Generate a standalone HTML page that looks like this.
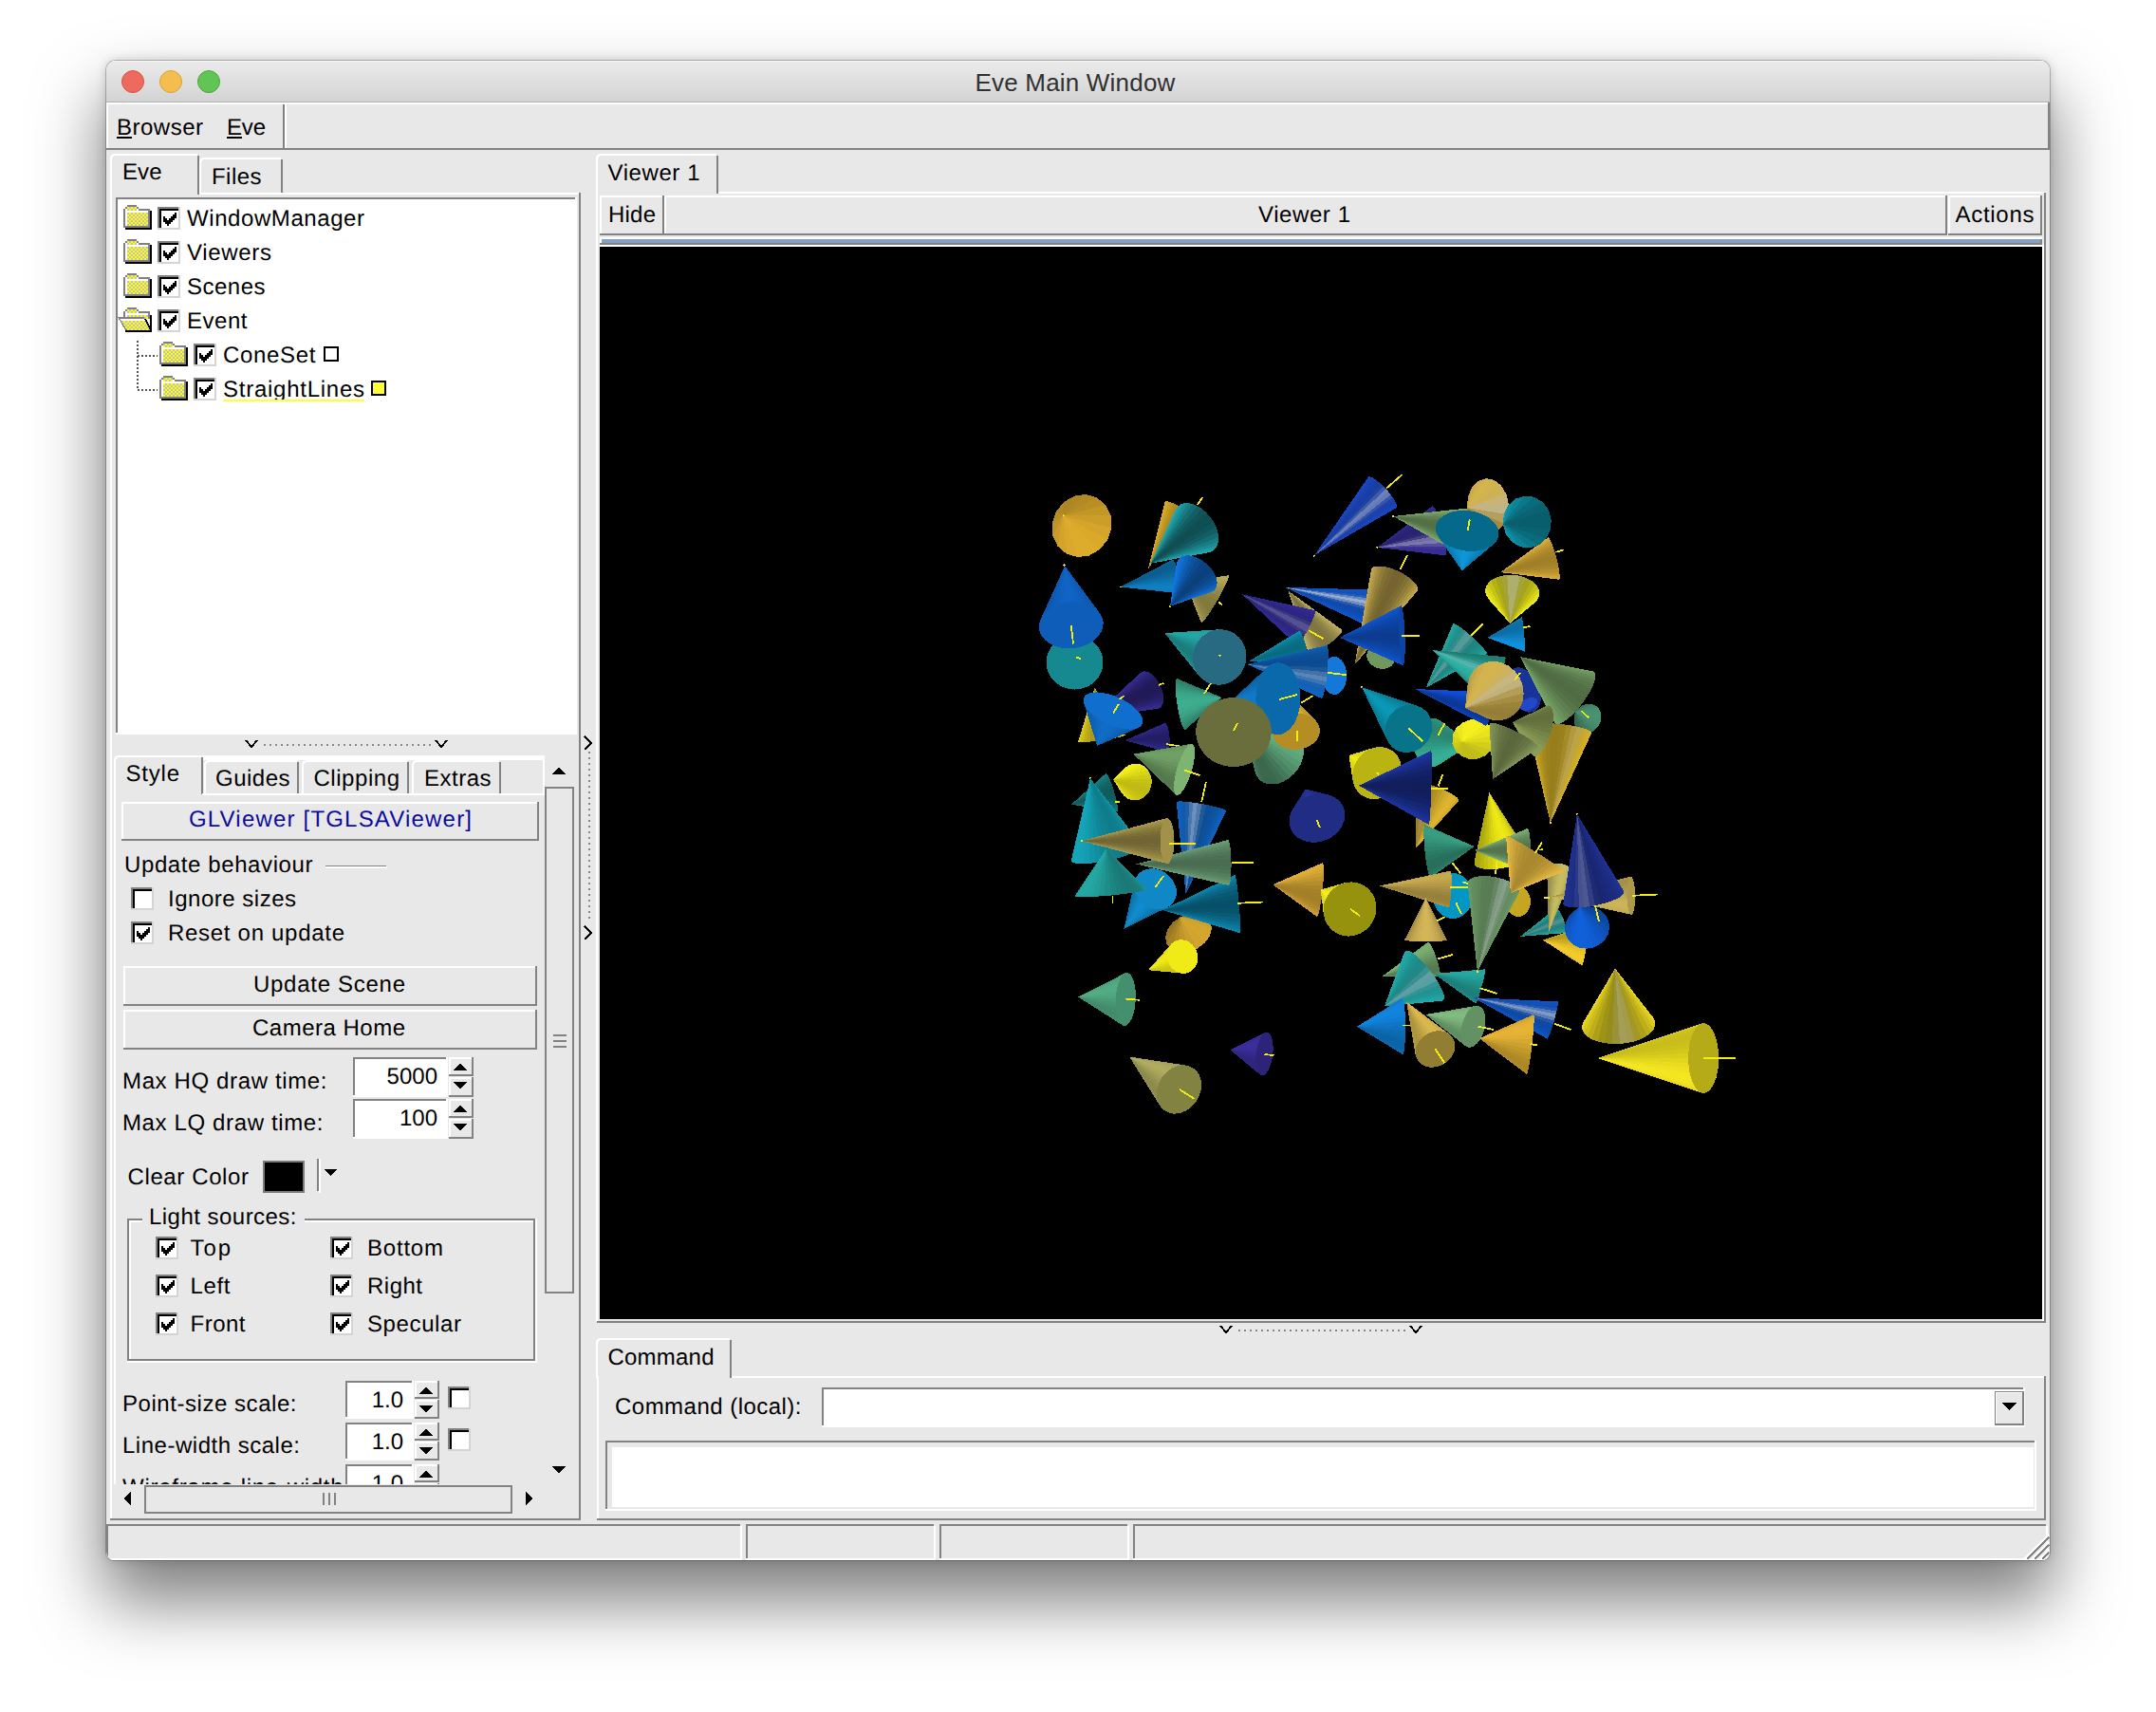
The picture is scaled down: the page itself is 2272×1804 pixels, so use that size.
<!DOCTYPE html>
<html><head><meta charset="utf-8"><title>Eve Main Window</title>
<style>
html,body{margin:0;padding:0;background:#fff;}
body{width:2272px;height:1804px;position:relative;overflow:hidden;font-family:"Liberation Sans",sans-serif;}
#shadow{position:absolute;left:112px;top:64px;width:2048px;height:1580px;border-radius:10px 10px 8px 8px;
 box-shadow:0 0 0 1px rgba(0,0,0,.22), 0 40px 70px 4px rgba(0,0,0,.50), 0 0 12px rgba(0,0,0,.18);}
#win{position:absolute;left:112px;top:64px;width:2048px;height:1580px;border-radius:10px 10px 8px 8px;background:#e8e8e8;overflow:hidden;}
#titlebar{position:absolute;left:0;top:0;width:100%;height:44px;background:linear-gradient(#ebebeb,#d3d3d3);box-shadow:inset 0 1px 0 #f6f6f6;border-bottom:1px solid #b1b1b1;box-sizing:border-box;}
.tl{position:absolute;top:10px;width:24px;height:24px;border-radius:50%;box-sizing:border-box;}
#title{position:absolute;left:-3px;width:100%;top:8px;text-align:center;font-size:26px;line-height:30px;color:#313131;letter-spacing:0.2px;}
svg{position:absolute;left:0;top:0;}
svg text{font-family:"Liberation Sans",sans-serif;}
</style></head><body>
<div id="shadow"></div>
<div id="win">
 <div id="titlebar">
  <div class="tl" style="left:16px;background:#ee6a5e;border:1px solid #d5524a"></div>
  <div class="tl" style="left:56px;background:#f5bd4f;border:1px solid #d8a037"></div>
  <div class="tl" style="left:96px;background:#61c454;border:1px solid #4aa73c"></div>
  <div id="title">Eve Main Window</div>
 </div>
</div>
<svg width="2272" height="1804" viewBox="0 0 2272 1804" shape-rendering="crispEdges" text-rendering="geometricPrecision">
<defs>
<pattern id="dith" width="4" height="4" patternUnits="userSpaceOnUse"><rect width="4" height="4" fill="#c0c0c0"/><rect width="2" height="2" fill="#ffff00"/><rect x="2" y="2" width="2" height="2" fill="#ffff00"/></pattern>
<clipPath id="edclip"><rect x="118" y="840" width="456" height="724"/></clipPath>
<clipPath id="winclip"><rect x="112" y="64" width="2048" height="1580" rx="9" ry="9"/></clipPath>
<clipPath id="glclip"><rect x="632" y="260" width="1520" height="1130"/></clipPath>
</defs>
<g clip-path="url(#winclip)">
<rect x="112" y="108" width="2046" height="2" fill="#ffffff" />
<rect x="112" y="108" width="2" height="48" fill="#ffffff" />
<rect x="112" y="156" width="2048" height="2" fill="#828282" />
<rect x="2158" y="108" width="2" height="50" fill="#828282" />
<rect x="298" y="110" width="2" height="46" fill="#828282" />
<rect x="300" y="110" width="2" height="46" fill="#ffffff" />
<text x="123" y="142" font-size="24" fill="#000" text-anchor="start" textLength="91" lengthAdjust="spacing" >Browser</text>
<rect x="123" y="144" width="16" height="2" fill="#000" />
<text x="239" y="142" font-size="24" fill="#000" text-anchor="start" textLength="41" lengthAdjust="spacing" >Eve</text>
<rect x="239" y="144" width="16" height="2" fill="#000" />
<rect x="116" y="203" width="2" height="1399" fill="#ffffff" />
<rect x="210" y="203" width="402" height="2" fill="#ffffff" />
<rect x="610" y="203" width="2" height="1399" fill="#828282" />
<rect x="116" y="1600" width="496" height="2" fill="#828282" />
<path d="M117,205 V168 Q117,163 122,163 H208" fill="none" stroke="#fff" stroke-width="2"/>
<rect x="208" y="164" width="2" height="41" fill="#828282" />
<text x="129" y="189" font-size="24" fill="#000" text-anchor="start" textLength="41.5" lengthAdjust="spacing" >Eve</text>
<path d="M211,203 V172 Q211,167 216,167 H296" fill="none" stroke="#fff" stroke-width="2"/>
<rect x="296" y="168" width="2" height="35" fill="#828282" />
<text x="223" y="194" font-size="24" fill="#000" text-anchor="start" textLength="52.5" lengthAdjust="spacing" >Files</text>
<rect x="122" y="208" width="486" height="566" fill="#fff" />
<rect x="122" y="772" width="486" height="2" fill="#ffffff" />
<rect x="606" y="208" width="2" height="566" fill="#ffffff" />
<rect x="122" y="208" width="484" height="2" fill="#828282" />
<rect x="122" y="208" width="2" height="564" fill="#828282" />
<rect x="134" y="218" width="10" height="4" fill="url(#dith)"/>
<rect x="134" y="222" width="22" height="16" fill="url(#dith)"/>
<rect x="134" y="216" width="10" height="2" fill="#808080" />
<rect x="132" y="218" width="2" height="2" fill="#808080" />
<rect x="144" y="218" width="2" height="2" fill="#808080" />
<rect x="130" y="220" width="2" height="20" fill="#808080" />
<rect x="132" y="220" width="2" height="18" fill="#fff" />
<rect x="134" y="222" width="22" height="2" fill="#fff" />
<rect x="144" y="220" width="2" height="2" fill="#fff" />
<rect x="146" y="220" width="12" height="2" fill="#808080" />
<rect x="156" y="222" width="2" height="18" fill="#808080" />
<rect x="132" y="238" width="26" height="2" fill="#808080" />
<rect x="158" y="222" width="2" height="20" fill="#000" />
<rect x="132" y="240" width="28" height="2" fill="#000" />
<rect x="166" y="218" width="24" height="24" fill="#ffffff" />
<rect x="166" y="218" width="24" height="2" fill="#828282" />
<rect x="166" y="218" width="2" height="24" fill="#828282" />
<rect x="168" y="220" width="20" height="2" fill="#000" />
<rect x="168" y="220" width="2" height="20" fill="#000" />
<rect x="166" y="240" width="24" height="2" fill="#d4d4d4" />
<rect x="188" y="218" width="2" height="24" fill="#d4d4d4" />
<path d="M172,228h2v6h-2zM174,230h2v6h-2zM176,232h2v6h-2zM178,230h2v6h-2zM180,228h2v6h-2zM182,226h2v6h-2zM184,224h2v6h-2z" fill="#000"/>
<text x="197" y="237.5" font-size="24" fill="#000" text-anchor="start" textLength="187" lengthAdjust="spacing" >WindowManager</text>
<rect x="134" y="254" width="10" height="4" fill="url(#dith)"/>
<rect x="134" y="258" width="22" height="16" fill="url(#dith)"/>
<rect x="134" y="252" width="10" height="2" fill="#808080" />
<rect x="132" y="254" width="2" height="2" fill="#808080" />
<rect x="144" y="254" width="2" height="2" fill="#808080" />
<rect x="130" y="256" width="2" height="20" fill="#808080" />
<rect x="132" y="256" width="2" height="18" fill="#fff" />
<rect x="134" y="258" width="22" height="2" fill="#fff" />
<rect x="144" y="256" width="2" height="2" fill="#fff" />
<rect x="146" y="256" width="12" height="2" fill="#808080" />
<rect x="156" y="258" width="2" height="18" fill="#808080" />
<rect x="132" y="274" width="26" height="2" fill="#808080" />
<rect x="158" y="258" width="2" height="20" fill="#000" />
<rect x="132" y="276" width="28" height="2" fill="#000" />
<rect x="166" y="254" width="24" height="24" fill="#ffffff" />
<rect x="166" y="254" width="24" height="2" fill="#828282" />
<rect x="166" y="254" width="2" height="24" fill="#828282" />
<rect x="168" y="256" width="20" height="2" fill="#000" />
<rect x="168" y="256" width="2" height="20" fill="#000" />
<rect x="166" y="276" width="24" height="2" fill="#d4d4d4" />
<rect x="188" y="254" width="2" height="24" fill="#d4d4d4" />
<path d="M172,264h2v6h-2zM174,266h2v6h-2zM176,268h2v6h-2zM178,266h2v6h-2zM180,264h2v6h-2zM182,262h2v6h-2zM184,260h2v6h-2z" fill="#000"/>
<text x="197" y="273.5" font-size="24" fill="#000" text-anchor="start" textLength="89" lengthAdjust="spacing" >Viewers</text>
<rect x="134" y="290" width="10" height="4" fill="url(#dith)"/>
<rect x="134" y="294" width="22" height="16" fill="url(#dith)"/>
<rect x="134" y="288" width="10" height="2" fill="#808080" />
<rect x="132" y="290" width="2" height="2" fill="#808080" />
<rect x="144" y="290" width="2" height="2" fill="#808080" />
<rect x="130" y="292" width="2" height="20" fill="#808080" />
<rect x="132" y="292" width="2" height="18" fill="#fff" />
<rect x="134" y="294" width="22" height="2" fill="#fff" />
<rect x="144" y="292" width="2" height="2" fill="#fff" />
<rect x="146" y="292" width="12" height="2" fill="#808080" />
<rect x="156" y="294" width="2" height="18" fill="#808080" />
<rect x="132" y="310" width="26" height="2" fill="#808080" />
<rect x="158" y="294" width="2" height="20" fill="#000" />
<rect x="132" y="312" width="28" height="2" fill="#000" />
<rect x="166" y="290" width="24" height="24" fill="#ffffff" />
<rect x="166" y="290" width="24" height="2" fill="#828282" />
<rect x="166" y="290" width="2" height="24" fill="#828282" />
<rect x="168" y="292" width="20" height="2" fill="#000" />
<rect x="168" y="292" width="2" height="20" fill="#000" />
<rect x="166" y="312" width="24" height="2" fill="#d4d4d4" />
<rect x="188" y="290" width="2" height="24" fill="#d4d4d4" />
<path d="M172,300h2v6h-2zM174,302h2v6h-2zM176,304h2v6h-2zM178,302h2v6h-2zM180,300h2v6h-2zM182,298h2v6h-2zM184,296h2v6h-2z" fill="#000"/>
<text x="197" y="309.5" font-size="24" fill="#000" text-anchor="start" textLength="82.5" lengthAdjust="spacing" >Scenes</text>
<rect x="134" y="326" width="10" height="4" fill="url(#dith)"/>
<rect x="134" y="330" width="22" height="6" fill="url(#dith)"/>
<rect x="134" y="324" width="10" height="2" fill="#808080" />
<rect x="132" y="326" width="2" height="2" fill="#808080" />
<rect x="144" y="326" width="2" height="2" fill="#808080" />
<rect x="130" y="328" width="2" height="8" fill="#808080" />
<rect x="132" y="328" width="2" height="6" fill="#fff" />
<rect x="144" y="328" width="2" height="2" fill="#fff" />
<rect x="146" y="328" width="12" height="2" fill="#808080" />
<rect x="134" y="330" width="22" height="2" fill="#fff" />
<rect x="156" y="330" width="2" height="6" fill="#808080" />
<polygon points="126,336 152,336 158,348 134,348" fill="url(#dith)"/>
<polygon points="126,336 152,336 153,338 128,338" fill="#fff"/>
<polygon points="124,334 152,334 152,336 126,336 134,348 132,348" fill="#808080"/>
<polygon points="152,336 154,336 160,348 158,348" fill="#000"/>
<rect x="158" y="332" width="2" height="18" fill="#000" />
<rect x="132" y="348" width="28" height="2" fill="#000" />
<rect x="166" y="326" width="24" height="24" fill="#ffffff" />
<rect x="166" y="326" width="24" height="2" fill="#828282" />
<rect x="166" y="326" width="2" height="24" fill="#828282" />
<rect x="168" y="328" width="20" height="2" fill="#000" />
<rect x="168" y="328" width="2" height="20" fill="#000" />
<rect x="166" y="348" width="24" height="2" fill="#d4d4d4" />
<rect x="188" y="326" width="2" height="24" fill="#d4d4d4" />
<path d="M172,336h2v6h-2zM174,338h2v6h-2zM176,340h2v6h-2zM178,338h2v6h-2zM180,336h2v6h-2zM182,334h2v6h-2zM184,332h2v6h-2z" fill="#000"/>
<text x="197" y="345.5" font-size="24" fill="#000" text-anchor="start" textLength="63.5" lengthAdjust="spacing" >Event</text>
<rect x="172" y="362" width="10" height="4" fill="url(#dith)"/>
<rect x="172" y="366" width="22" height="16" fill="url(#dith)"/>
<rect x="172" y="360" width="10" height="2" fill="#808080" />
<rect x="170" y="362" width="2" height="2" fill="#808080" />
<rect x="182" y="362" width="2" height="2" fill="#808080" />
<rect x="168" y="364" width="2" height="20" fill="#808080" />
<rect x="170" y="364" width="2" height="18" fill="#fff" />
<rect x="172" y="366" width="22" height="2" fill="#fff" />
<rect x="182" y="364" width="2" height="2" fill="#fff" />
<rect x="184" y="364" width="12" height="2" fill="#808080" />
<rect x="194" y="366" width="2" height="18" fill="#808080" />
<rect x="170" y="382" width="26" height="2" fill="#808080" />
<rect x="196" y="366" width="2" height="20" fill="#000" />
<rect x="170" y="384" width="28" height="2" fill="#000" />
<rect x="204" y="362" width="24" height="24" fill="#ffffff" />
<rect x="204" y="362" width="24" height="2" fill="#828282" />
<rect x="204" y="362" width="2" height="24" fill="#828282" />
<rect x="206" y="364" width="20" height="2" fill="#000" />
<rect x="206" y="364" width="2" height="20" fill="#000" />
<rect x="204" y="384" width="24" height="2" fill="#d4d4d4" />
<rect x="226" y="362" width="2" height="24" fill="#d4d4d4" />
<path d="M210,372h2v6h-2zM212,374h2v6h-2zM214,376h2v6h-2zM216,374h2v6h-2zM218,372h2v6h-2zM220,370h2v6h-2zM222,368h2v6h-2z" fill="#000"/>
<text x="235" y="381.5" font-size="24" fill="#000" text-anchor="start" textLength="97.5" lengthAdjust="spacing" >ConeSet</text>
<rect x="172" y="398" width="10" height="4" fill="url(#dith)"/>
<rect x="172" y="402" width="22" height="16" fill="url(#dith)"/>
<rect x="172" y="396" width="10" height="2" fill="#808080" />
<rect x="170" y="398" width="2" height="2" fill="#808080" />
<rect x="182" y="398" width="2" height="2" fill="#808080" />
<rect x="168" y="400" width="2" height="20" fill="#808080" />
<rect x="170" y="400" width="2" height="18" fill="#fff" />
<rect x="172" y="402" width="22" height="2" fill="#fff" />
<rect x="182" y="400" width="2" height="2" fill="#fff" />
<rect x="184" y="400" width="12" height="2" fill="#808080" />
<rect x="194" y="402" width="2" height="18" fill="#808080" />
<rect x="170" y="418" width="26" height="2" fill="#808080" />
<rect x="196" y="402" width="2" height="20" fill="#000" />
<rect x="170" y="420" width="28" height="2" fill="#000" />
<rect x="204" y="398" width="24" height="24" fill="#ffffff" />
<rect x="204" y="398" width="24" height="2" fill="#828282" />
<rect x="204" y="398" width="2" height="24" fill="#828282" />
<rect x="206" y="400" width="20" height="2" fill="#000" />
<rect x="206" y="400" width="2" height="20" fill="#000" />
<rect x="204" y="420" width="24" height="2" fill="#d4d4d4" />
<rect x="226" y="398" width="2" height="24" fill="#d4d4d4" />
<path d="M210,408h2v6h-2zM212,410h2v6h-2zM214,412h2v6h-2zM216,410h2v6h-2zM218,408h2v6h-2zM220,406h2v6h-2zM222,404h2v6h-2z" fill="#000"/>
<text x="235" y="417.5" font-size="24" fill="#000" text-anchor="start" textLength="149" lengthAdjust="spacing" >StraightLines</text>
<path d="M145,359 V411 M145,375 H166 M145,411 H166" stroke="#555" stroke-width="2" stroke-dasharray="2,2" fill="none"/>
<rect x="341" y="365" width="16" height="16" fill="#000" />
<rect x="343" y="367" width="12" height="12" fill="#fff" />
<rect x="391" y="401" width="16" height="16" fill="#000" />
<rect x="393" y="403" width="12" height="12" fill="#ffff33" />
<rect x="235" y="421" width="149" height="2" fill="#ffff33" />
<path d="M259,780 L265,787 L271,780" stroke="#000" stroke-width="2" fill="none"/>
<path d="M459,780 L465,787 L471,780" stroke="#000" stroke-width="2" fill="none"/>
<path d="M278,785 H456" stroke="#888" stroke-width="2" stroke-dasharray="2,4"/>
<rect x="213" y="796" width="361" height="5" fill="#ffffff" />
<rect x="572" y="796" width="2" height="42" fill="#ffffff" />
<path d="M121,837 V802 Q121,797 126,797 H212" fill="none" stroke="#fff" stroke-width="2"/>
<rect x="212" y="798" width="2" height="39" fill="#828282" />
<rect x="120" y="836" width="2" height="728" fill="#ffffff" />
<text x="132.5" y="823" font-size="24" fill="#000" text-anchor="start" textLength="56.5" lengthAdjust="spacing" >Style</text>
<path d="M216,837 V807 Q216,802 221,802 H313" fill="none" stroke="#fff" stroke-width="2"/>
<rect x="313" y="803" width="2" height="34" fill="#828282" />
<text x="227" y="827.5" font-size="24" fill="#000" text-anchor="start" textLength="78.5" lengthAdjust="spacing" >Guides</text>
<path d="M319,837 V807 Q319,802 324,802 H429" fill="none" stroke="#fff" stroke-width="2"/>
<rect x="429" y="803" width="2" height="34" fill="#828282" />
<text x="330.5" y="827.5" font-size="24" fill="#000" text-anchor="start" textLength="90.5" lengthAdjust="spacing" >Clipping</text>
<path d="M435,837 V807 Q435,802 440,802 H526" fill="none" stroke="#fff" stroke-width="2"/>
<rect x="526" y="803" width="2" height="34" fill="#828282" />
<text x="447" y="827.5" font-size="24" fill="#000" text-anchor="start" textLength="70.5" lengthAdjust="spacing" >Extras</text>
<rect x="213" y="836" width="361" height="2" fill="#ffffff" />
<polygon points="589,808 596,816 582,816" fill="#000" />
<rect x="574" y="829" width="1.5" height="534" fill="#828282" />
<rect x="574" y="829" width="31" height="1.5" fill="#828282" />
<rect x="603" y="829" width="2" height="534" fill="#828282" />
<rect x="574" y="1361" width="31" height="2" fill="#828282" />
<rect x="583" y="1090" width="14" height="2" fill="#828282" />
<rect x="583" y="1096" width="14" height="2" fill="#828282" />
<rect x="583" y="1102" width="14" height="2" fill="#828282" />
<polygon points="582,1545 596,1545 589,1553" fill="#000" />
<rect x="128" y="845" width="438" height="2" fill="#ffffff" />
<rect x="128" y="845" width="2" height="39" fill="#ffffff" />
<rect x="128" y="884" width="440" height="2" fill="#828282" />
<rect x="566" y="845" width="2" height="41" fill="#828282" />
<text x="199" y="871" font-size="24" fill="#0c0c9c" text-anchor="start" textLength="298" lengthAdjust="spacing" >GLViewer [TGLSAViewer]</text>
<text x="131" y="919" font-size="24" fill="#000" text-anchor="start" textLength="198.5" lengthAdjust="spacing" >Update behaviour</text>
<rect x="343" y="912" width="64" height="1" fill="#828282" />
<rect x="343" y="913" width="65" height="2" fill="#ffffff" />
<rect x="138" y="935" width="24" height="24" fill="#ffffff" />
<rect x="138" y="935" width="24" height="2" fill="#828282" />
<rect x="138" y="935" width="2" height="24" fill="#828282" />
<rect x="140" y="937" width="20" height="2" fill="#000" />
<rect x="140" y="937" width="2" height="20" fill="#000" />
<rect x="138" y="957" width="24" height="2" fill="#d4d4d4" />
<rect x="160" y="935" width="2" height="24" fill="#d4d4d4" />
<text x="177" y="954.5" font-size="24" fill="#000" text-anchor="start" textLength="135" lengthAdjust="spacing" >Ignore sizes</text>
<rect x="138" y="971" width="24" height="24" fill="#ffffff" />
<rect x="138" y="971" width="24" height="2" fill="#828282" />
<rect x="138" y="971" width="2" height="24" fill="#828282" />
<rect x="140" y="973" width="20" height="2" fill="#000" />
<rect x="140" y="973" width="2" height="20" fill="#000" />
<rect x="138" y="993" width="24" height="2" fill="#d4d4d4" />
<rect x="160" y="971" width="2" height="24" fill="#d4d4d4" />
<path d="M144,981h2v6h-2zM146,983h2v6h-2zM148,985h2v6h-2zM150,983h2v6h-2zM152,981h2v6h-2zM154,979h2v6h-2zM156,977h2v6h-2z" fill="#000"/>
<text x="177" y="991" font-size="24" fill="#000" text-anchor="start" textLength="186" lengthAdjust="spacing" >Reset on update</text>
<rect x="130" y="1018" width="434" height="2" fill="#ffffff" />
<rect x="130" y="1018" width="2" height="40" fill="#ffffff" />
<rect x="130" y="1058" width="436" height="2" fill="#828282" />
<rect x="564" y="1018" width="2" height="42" fill="#828282" />
<text x="267" y="1045" font-size="24" fill="#000" text-anchor="start" textLength="160" lengthAdjust="spacing" >Update Scene</text>
<rect x="130" y="1064" width="434" height="2" fill="#ffffff" />
<rect x="130" y="1064" width="2" height="40" fill="#ffffff" />
<rect x="130" y="1104" width="436" height="2" fill="#828282" />
<rect x="564" y="1064" width="2" height="42" fill="#828282" />
<text x="266" y="1091" font-size="24" fill="#000" text-anchor="start" textLength="161" lengthAdjust="spacing" >Camera Home</text>
<text x="129" y="1147" font-size="24" fill="#000" text-anchor="start" textLength="215.5" lengthAdjust="spacing" >Max HQ draw time:</text>
<rect x="372" y="1114" width="100" height="42" fill="#fff" />
<rect x="372" y="1154" width="100" height="2" fill="#ffffff" />
<rect x="470" y="1114" width="2" height="42" fill="#ffffff" />
<rect x="372" y="1114" width="98" height="2" fill="#828282" />
<rect x="372" y="1114" width="2" height="40" fill="#828282" />
<text x="461" y="1142" font-size="24" fill="#000" text-anchor="end" >5000</text>
<rect x="473" y="1114" width="24" height="2" fill="#ffffff" />
<rect x="473" y="1114" width="2" height="18" fill="#ffffff" />
<rect x="473" y="1132" width="26" height="2" fill="#828282" />
<rect x="497" y="1114" width="2" height="20" fill="#828282" />
<rect x="473" y="1135" width="24" height="2" fill="#ffffff" />
<rect x="473" y="1135" width="2" height="19" fill="#ffffff" />
<rect x="473" y="1154" width="26" height="2" fill="#828282" />
<rect x="497" y="1135" width="2" height="21" fill="#828282" />
<polygon points="485,1120 492,1128 478,1128" fill="#000" />
<polygon points="478,1140 492,1140 485,1148" fill="#000" />
<text x="129" y="1191" font-size="24" fill="#000" text-anchor="start" textLength="211.5" lengthAdjust="spacing" >Max LQ draw time:</text>
<rect x="372" y="1158" width="100" height="42" fill="#fff" />
<rect x="372" y="1198" width="100" height="2" fill="#ffffff" />
<rect x="470" y="1158" width="2" height="42" fill="#ffffff" />
<rect x="372" y="1158" width="98" height="2" fill="#828282" />
<rect x="372" y="1158" width="2" height="40" fill="#828282" />
<text x="461" y="1186" font-size="24" fill="#000" text-anchor="end" >100</text>
<rect x="473" y="1158" width="24" height="2" fill="#ffffff" />
<rect x="473" y="1158" width="2" height="18" fill="#ffffff" />
<rect x="473" y="1176" width="26" height="2" fill="#828282" />
<rect x="497" y="1158" width="2" height="20" fill="#828282" />
<rect x="473" y="1179" width="24" height="2" fill="#ffffff" />
<rect x="473" y="1179" width="2" height="19" fill="#ffffff" />
<rect x="473" y="1198" width="26" height="2" fill="#828282" />
<rect x="497" y="1179" width="2" height="21" fill="#828282" />
<polygon points="485,1164 492,1172 478,1172" fill="#000" />
<polygon points="478,1184 492,1184 485,1192" fill="#000" />
<text x="134.5" y="1247.5" font-size="24" fill="#000" text-anchor="start" textLength="127.5" lengthAdjust="spacing" >Clear Color</text>
<rect x="277" y="1223" width="44" height="34" fill="#7a7a7a" />
<rect x="279" y="1225" width="40" height="30" fill="#000" />
<rect x="334" y="1221" width="2" height="34" fill="#828282" />
<rect x="336" y="1221" width="2" height="36" fill="#ffffff" />
<polygon points="342,1232 355,1232 348.5,1239" fill="#000" />
<rect x="134" y="1284" width="16" height="2" fill="#828282" />
<rect x="321" y="1284" width="243" height="2" fill="#828282" />
<rect x="136" y="1286" width="14" height="2" fill="#ffffff" />
<rect x="321" y="1286" width="241" height="2" fill="#ffffff" />
<rect x="134" y="1284" width="2" height="150" fill="#828282" />
<rect x="136" y="1286" width="2" height="146" fill="#ffffff" />
<rect x="134" y="1432" width="432" height="2" fill="#828282" />
<rect x="134" y="1434" width="432" height="2" fill="#ffffff" />
<rect x="562" y="1286" width="2" height="146" fill="#828282" />
<rect x="564" y="1284" width="2" height="152" fill="#ffffff" />
<text x="157" y="1289.5" font-size="24" fill="#000" text-anchor="start" textLength="155.5" lengthAdjust="spacing" >Light sources:</text>
<rect x="164" y="1303" width="24" height="24" fill="#ffffff" />
<rect x="164" y="1303" width="24" height="2" fill="#828282" />
<rect x="164" y="1303" width="2" height="24" fill="#828282" />
<rect x="166" y="1305" width="20" height="2" fill="#000" />
<rect x="166" y="1305" width="2" height="20" fill="#000" />
<rect x="164" y="1325" width="24" height="2" fill="#d4d4d4" />
<rect x="186" y="1303" width="2" height="24" fill="#d4d4d4" />
<path d="M170,1313h2v6h-2zM172,1315h2v6h-2zM174,1317h2v6h-2zM176,1315h2v6h-2zM178,1313h2v6h-2zM180,1311h2v6h-2zM182,1309h2v6h-2z" fill="#000"/>
<text x="200.5" y="1322.5" font-size="24" fill="#000" text-anchor="start" textLength="42.5" lengthAdjust="spacing" >Top</text>
<rect x="348" y="1303" width="24" height="24" fill="#ffffff" />
<rect x="348" y="1303" width="24" height="2" fill="#828282" />
<rect x="348" y="1303" width="2" height="24" fill="#828282" />
<rect x="350" y="1305" width="20" height="2" fill="#000" />
<rect x="350" y="1305" width="2" height="20" fill="#000" />
<rect x="348" y="1325" width="24" height="2" fill="#d4d4d4" />
<rect x="370" y="1303" width="2" height="24" fill="#d4d4d4" />
<path d="M354,1313h2v6h-2zM356,1315h2v6h-2zM358,1317h2v6h-2zM360,1315h2v6h-2zM362,1313h2v6h-2zM364,1311h2v6h-2zM366,1309h2v6h-2z" fill="#000"/>
<text x="387" y="1322.5" font-size="24" fill="#000" text-anchor="start" textLength="80" lengthAdjust="spacing" >Bottom</text>
<rect x="164" y="1343" width="24" height="24" fill="#ffffff" />
<rect x="164" y="1343" width="24" height="2" fill="#828282" />
<rect x="164" y="1343" width="2" height="24" fill="#828282" />
<rect x="166" y="1345" width="20" height="2" fill="#000" />
<rect x="166" y="1345" width="2" height="20" fill="#000" />
<rect x="164" y="1365" width="24" height="2" fill="#d4d4d4" />
<rect x="186" y="1343" width="2" height="24" fill="#d4d4d4" />
<path d="M170,1353h2v6h-2zM172,1355h2v6h-2zM174,1357h2v6h-2zM176,1355h2v6h-2zM178,1353h2v6h-2zM180,1351h2v6h-2zM182,1349h2v6h-2z" fill="#000"/>
<text x="200.5" y="1362.5" font-size="24" fill="#000" text-anchor="start" textLength="42" lengthAdjust="spacing" >Left</text>
<rect x="348" y="1343" width="24" height="24" fill="#ffffff" />
<rect x="348" y="1343" width="24" height="2" fill="#828282" />
<rect x="348" y="1343" width="2" height="24" fill="#828282" />
<rect x="350" y="1345" width="20" height="2" fill="#000" />
<rect x="350" y="1345" width="2" height="20" fill="#000" />
<rect x="348" y="1365" width="24" height="2" fill="#d4d4d4" />
<rect x="370" y="1343" width="2" height="24" fill="#d4d4d4" />
<path d="M354,1353h2v6h-2zM356,1355h2v6h-2zM358,1357h2v6h-2zM360,1355h2v6h-2zM362,1353h2v6h-2zM364,1351h2v6h-2zM366,1349h2v6h-2z" fill="#000"/>
<text x="387" y="1362.5" font-size="24" fill="#000" text-anchor="start" textLength="58" lengthAdjust="spacing" >Right</text>
<rect x="164" y="1383" width="24" height="24" fill="#ffffff" />
<rect x="164" y="1383" width="24" height="2" fill="#828282" />
<rect x="164" y="1383" width="2" height="24" fill="#828282" />
<rect x="166" y="1385" width="20" height="2" fill="#000" />
<rect x="166" y="1385" width="2" height="20" fill="#000" />
<rect x="164" y="1405" width="24" height="2" fill="#d4d4d4" />
<rect x="186" y="1383" width="2" height="24" fill="#d4d4d4" />
<path d="M170,1393h2v6h-2zM172,1395h2v6h-2zM174,1397h2v6h-2zM176,1395h2v6h-2zM178,1393h2v6h-2zM180,1391h2v6h-2zM182,1389h2v6h-2z" fill="#000"/>
<text x="200.5" y="1402.5" font-size="24" fill="#000" text-anchor="start" textLength="58" lengthAdjust="spacing" >Front</text>
<rect x="348" y="1383" width="24" height="24" fill="#ffffff" />
<rect x="348" y="1383" width="24" height="2" fill="#828282" />
<rect x="348" y="1383" width="2" height="24" fill="#828282" />
<rect x="350" y="1385" width="20" height="2" fill="#000" />
<rect x="350" y="1385" width="2" height="20" fill="#000" />
<rect x="348" y="1405" width="24" height="2" fill="#d4d4d4" />
<rect x="370" y="1383" width="2" height="24" fill="#d4d4d4" />
<path d="M354,1393h2v6h-2zM356,1395h2v6h-2zM358,1397h2v6h-2zM360,1395h2v6h-2zM362,1393h2v6h-2zM364,1391h2v6h-2zM366,1389h2v6h-2z" fill="#000"/>
<text x="387" y="1402.5" font-size="24" fill="#000" text-anchor="start" textLength="99" lengthAdjust="spacing" >Specular</text>
<g clip-path="url(#edclip)">
<text x="129" y="1487" font-size="24" fill="#000" text-anchor="start" textLength="183.5" lengthAdjust="spacing" >Point-size scale:</text>
<rect x="364" y="1455" width="72" height="40" fill="#fff" />
<rect x="364" y="1493" width="72" height="2" fill="#ffffff" />
<rect x="434" y="1455" width="2" height="40" fill="#ffffff" />
<rect x="364" y="1455" width="70" height="2" fill="#828282" />
<rect x="364" y="1455" width="2" height="38" fill="#828282" />
<text x="425" y="1483" font-size="24" fill="#000" text-anchor="end" >1.0</text>
<rect x="437" y="1455" width="24" height="2" fill="#ffffff" />
<rect x="437" y="1455" width="2" height="17" fill="#ffffff" />
<rect x="437" y="1472" width="26" height="2" fill="#828282" />
<rect x="461" y="1455" width="2" height="19" fill="#828282" />
<rect x="437" y="1475" width="24" height="2" fill="#ffffff" />
<rect x="437" y="1475" width="2" height="18" fill="#ffffff" />
<rect x="437" y="1493" width="26" height="2" fill="#828282" />
<rect x="461" y="1475" width="2" height="20" fill="#828282" />
<polygon points="449,1461 456,1469 442,1469" fill="#000" />
<polygon points="442,1481 456,1481 449,1489" fill="#000" />
<rect x="472" y="1461" width="24" height="24" fill="#ffffff" />
<rect x="472" y="1461" width="24" height="2" fill="#828282" />
<rect x="472" y="1461" width="2" height="24" fill="#828282" />
<rect x="474" y="1463" width="20" height="2" fill="#000" />
<rect x="474" y="1463" width="2" height="20" fill="#000" />
<rect x="472" y="1483" width="24" height="2" fill="#d4d4d4" />
<rect x="494" y="1461" width="2" height="24" fill="#d4d4d4" />
<text x="129" y="1531" font-size="24" fill="#000" text-anchor="start" textLength="187" lengthAdjust="spacing" >Line-width scale:</text>
<rect x="364" y="1499" width="72" height="40" fill="#fff" />
<rect x="364" y="1537" width="72" height="2" fill="#ffffff" />
<rect x="434" y="1499" width="2" height="40" fill="#ffffff" />
<rect x="364" y="1499" width="70" height="2" fill="#828282" />
<rect x="364" y="1499" width="2" height="38" fill="#828282" />
<text x="425" y="1527" font-size="24" fill="#000" text-anchor="end" >1.0</text>
<rect x="437" y="1499" width="24" height="2" fill="#ffffff" />
<rect x="437" y="1499" width="2" height="17" fill="#ffffff" />
<rect x="437" y="1516" width="26" height="2" fill="#828282" />
<rect x="461" y="1499" width="2" height="19" fill="#828282" />
<rect x="437" y="1519" width="24" height="2" fill="#ffffff" />
<rect x="437" y="1519" width="2" height="18" fill="#ffffff" />
<rect x="437" y="1537" width="26" height="2" fill="#828282" />
<rect x="461" y="1519" width="2" height="20" fill="#828282" />
<polygon points="449,1505 456,1513 442,1513" fill="#000" />
<polygon points="442,1525 456,1525 449,1533" fill="#000" />
<rect x="472" y="1505" width="24" height="24" fill="#ffffff" />
<rect x="472" y="1505" width="24" height="2" fill="#828282" />
<rect x="472" y="1505" width="2" height="24" fill="#828282" />
<rect x="474" y="1507" width="20" height="2" fill="#000" />
<rect x="474" y="1507" width="2" height="20" fill="#000" />
<rect x="472" y="1527" width="24" height="2" fill="#d4d4d4" />
<rect x="494" y="1505" width="2" height="24" fill="#d4d4d4" />
<text x="129" y="1575" font-size="24" fill="#000" text-anchor="start" textLength="240" lengthAdjust="spacing" >Wireframe line-width:</text>
<rect x="364" y="1543" width="72" height="40" fill="#fff" />
<rect x="364" y="1581" width="72" height="2" fill="#ffffff" />
<rect x="434" y="1543" width="2" height="40" fill="#ffffff" />
<rect x="364" y="1543" width="70" height="2" fill="#828282" />
<rect x="364" y="1543" width="2" height="38" fill="#828282" />
<text x="425" y="1571" font-size="24" fill="#000" text-anchor="end" >1.0</text>
<rect x="437" y="1543" width="24" height="2" fill="#ffffff" />
<rect x="437" y="1543" width="2" height="17" fill="#ffffff" />
<rect x="437" y="1560" width="26" height="2" fill="#828282" />
<rect x="461" y="1543" width="2" height="19" fill="#828282" />
<rect x="437" y="1563" width="24" height="2" fill="#ffffff" />
<rect x="437" y="1563" width="2" height="18" fill="#ffffff" />
<rect x="437" y="1581" width="26" height="2" fill="#828282" />
<rect x="461" y="1563" width="2" height="20" fill="#828282" />
<polygon points="449,1549 456,1557 442,1557" fill="#000" />
<polygon points="442,1569 456,1569 449,1577" fill="#000" />
</g>
<polygon points="130,1579 138,1572 138,1586" fill="#000" />
<polygon points="562,1579 554,1572 554,1586" fill="#000" />
<rect x="152" y="1565" width="386" height="2" fill="#828282" />
<rect x="152" y="1565" width="2" height="28" fill="#828282" />
<rect x="152" y="1593" width="388" height="2" fill="#828282" />
<rect x="538" y="1565" width="2" height="30" fill="#828282" />
<rect x="153.5" y="1566.5" width="384.5" height="26.5" fill="#e8e8e8" />
<rect x="340" y="1573" width="2" height="13" fill="#828282" />
<rect x="346" y="1573" width="2" height="13" fill="#828282" />
<rect x="352" y="1573" width="2" height="13" fill="#828282" />
<path d="M616,776 L623,783 L616,790" stroke="#000" stroke-width="2" fill="none"/>
<path d="M616,976 L623,983 L616,990" stroke="#000" stroke-width="2" fill="none"/>
<path d="M621,792 V972" stroke="#888" stroke-width="2" stroke-dasharray="2,4"/>
<path d="M629,204 V168 Q629,163 634,163 H755" fill="none" stroke="#fff" stroke-width="2"/>
<rect x="755" y="164" width="2" height="40" fill="#828282" />
<text x="640.5" y="189.5" font-size="24" fill="#000" text-anchor="start" textLength="97" lengthAdjust="spacing" >Viewer 1</text>
<rect x="757" y="202" width="1399" height="2" fill="#ffffff" />
<rect x="628" y="203" width="2" height="1189" fill="#ffffff" />
<rect x="2154" y="203" width="2" height="1191" fill="#828282" />
<rect x="629" y="1392" width="1527" height="2" fill="#828282" />
<rect x="632" y="206" width="66" height="2" fill="#ffffff" />
<rect x="632" y="206" width="2" height="40" fill="#ffffff" />
<rect x="632" y="246" width="68" height="2" fill="#828282" />
<rect x="698" y="206" width="2" height="42" fill="#828282" />
<text x="641" y="234" font-size="24" fill="#000" text-anchor="start" textLength="50" lengthAdjust="spacing" >Hide</text>
<rect x="700" y="206" width="1350" height="2" fill="#ffffff" />
<rect x="700" y="206" width="2" height="40" fill="#ffffff" />
<rect x="700" y="246" width="1352" height="2" fill="#828282" />
<rect x="2050" y="206" width="2" height="42" fill="#828282" />
<text x="1374.5" y="234" font-size="24" fill="#000" text-anchor="middle" textLength="97" lengthAdjust="spacing" >Viewer 1</text>
<rect x="2053" y="206" width="97" height="2" fill="#ffffff" />
<rect x="2053" y="206" width="2" height="40" fill="#ffffff" />
<rect x="2053" y="246" width="99" height="2" fill="#828282" />
<rect x="2150" y="206" width="2" height="42" fill="#828282" />
<text x="2060.5" y="234" font-size="24" fill="#000" text-anchor="start" textLength="83" lengthAdjust="spacing" >Actions</text>
<rect x="634" y="252" width="1516" height="4" fill="#86a0c4" />
<rect x="632" y="250" width="1520" height="2" fill="#ffffff" />
<rect x="632" y="250" width="2" height="6" fill="#ffffff" />
<rect x="632" y="256" width="1520" height="2" fill="#828282" />
<rect x="2150" y="252" width="2" height="6" fill="#828282" />
<rect x="632" y="258" width="1520" height="2" fill="#ffffff" />
<rect x="632" y="260" width="1520" height="1130" fill="#000" />
<rect x="2152" y="258" width="2" height="1134" fill="#ffffff" />
<path d="M1286,1397 L1292,1404 L1298,1397" stroke="#000" stroke-width="2" fill="none"/>
<path d="M1486,1397 L1492,1404 L1498,1397" stroke="#000" stroke-width="2" fill="none"/>
<path d="M1305,1402 H1483" stroke="#888" stroke-width="2" stroke-dasharray="2,4"/>
<path d="M629,1452 V1416 Q629,1411 634,1411 H769" fill="none" stroke="#fff" stroke-width="2"/>
<rect x="769" y="1412" width="2" height="40" fill="#828282" />
<text x="640.5" y="1437.5" font-size="24" fill="#000" text-anchor="start" textLength="112" lengthAdjust="spacing" >Command</text>
<rect x="771" y="1450" width="1385" height="2" fill="#ffffff" />
<rect x="629" y="1450" width="2" height="152" fill="#ffffff" />
<rect x="2154" y="1450" width="2" height="152" fill="#828282" />
<rect x="629" y="1600" width="1527" height="2" fill="#828282" />
<text x="648" y="1490" font-size="24" fill="#000" text-anchor="start" textLength="196.5" lengthAdjust="spacing" >Command (local):</text>
<rect x="866" y="1462" width="1268" height="42" fill="#fff" />
<rect x="866" y="1502" width="1268" height="2" fill="#ffffff" />
<rect x="2132" y="1462" width="2" height="42" fill="#ffffff" />
<rect x="866" y="1462" width="1266" height="2" fill="#828282" />
<rect x="866" y="1462" width="2" height="40" fill="#828282" />
<rect x="2102" y="1466" width="31" height="36" fill="#e8e8e8" />
<rect x="2102" y="1466" width="29" height="2" fill="#ffffff" />
<rect x="2102" y="1466" width="2" height="34" fill="#ffffff" />
<rect x="2102" y="1500" width="31" height="2" fill="#828282" />
<rect x="2131" y="1466" width="2" height="36" fill="#828282" />
<rect x="2102" y="1466" width="31" height="1" fill="#828282" />
<rect x="2102" y="1466" width="1" height="36" fill="#828282" />
<polygon points="2109,1478 2125,1478 2117,1486" fill="#000" />
<rect x="638" y="1518" width="1508" height="74" fill="#e8e8e8" />
<rect x="638" y="1590" width="1508" height="2" fill="#ffffff" />
<rect x="2144" y="1518" width="2" height="74" fill="#ffffff" />
<rect x="638" y="1518" width="1506" height="2" fill="#828282" />
<rect x="638" y="1518" width="2" height="72" fill="#828282" />
<rect x="645" y="1525" width="1498" height="63" fill="#fff" />
<rect x="112" y="1606" width="2" height="36" fill="#828282" />
<rect x="112" y="1606" width="668" height="2" fill="#828282" />
<rect x="780" y="1608" width="2" height="36" fill="#ffffff" />
<rect x="112" y="1642" width="670" height="2" fill="#ffffff" />
<rect x="786" y="1606" width="2" height="36" fill="#828282" />
<rect x="786" y="1606" width="198" height="2" fill="#828282" />
<rect x="984" y="1608" width="2" height="36" fill="#ffffff" />
<rect x="786" y="1642" width="200" height="2" fill="#ffffff" />
<rect x="990" y="1606" width="2" height="36" fill="#828282" />
<rect x="990" y="1606" width="198" height="2" fill="#828282" />
<rect x="1188" y="1608" width="2" height="36" fill="#ffffff" />
<rect x="990" y="1642" width="200" height="2" fill="#ffffff" />
<rect x="1194" y="1606" width="2" height="36" fill="#828282" />
<rect x="1194" y="1606" width="962" height="2" fill="#828282" />
<rect x="2156" y="1608" width="2" height="36" fill="#ffffff" />
<rect x="1194" y="1642" width="964" height="2" fill="#ffffff" />
<path d="M2136,1643 L2159,1620" stroke="#828282" stroke-width="2.5"/>
<path d="M2133,1643 L2159,1617" stroke="#fff" stroke-width="2"/>
<path d="M2144,1643 L2159,1628" stroke="#828282" stroke-width="2.5"/>
<path d="M2141,1643 L2159,1625" stroke="#fff" stroke-width="2"/>
<path d="M2152,1643 L2159,1636" stroke="#828282" stroke-width="2.5"/>
<path d="M2149,1643 L2159,1633" stroke="#fff" stroke-width="2"/>
</g>
<g clip-path="url(#glclip)" shape-rendering="crispEdges">
<path d="M1120.2,543.5L1112.6,539.4L1121.3,528.7z" fill="#b18924"/>
<path d="M1120.2,543.5L1120.8,529.2L1132.5,522.4z" fill="#ad8623"/>
<path d="M1120.2,543.5L1131.8,522.6L1144.8,520.9z" fill="#ae8723"/>
<path d="M1120.2,543.5L1144.2,520.9L1156.4,524.5z" fill="#b28a24"/>
<path d="M1120.2,543.5L1155.8,524.2L1165.5,532.5z" fill="#b98f25"/>
<path d="M1120.2,543.5L1165.1,532L1170.7,543.8z" fill="#c29627"/>
<path d="M1120.2,543.5L1170.6,543.2L1171.3,556.7z" fill="#cb9d29"/>
<path d="M1120.2,543.5L1171.4,556L1167,569.1z" fill="#d4a42b"/>
<path d="M1120.2,543.5L1167.4,568.6L1158.7,579.3z" fill="#daa92c"/>
<path d="M1120.2,543.5L1159.2,578.8L1147.5,585.6z" fill="#deac2d"/>
<path d="M1120.2,543.5L1148.2,585.4L1135.2,587.1z" fill="#ddac2d"/>
<path d="M1120.2,543.5L1135.8,587.1L1123.6,583.5z" fill="#d9a82c"/>
<path d="M1120.2,543.5L1124.2,583.8L1114.5,575.5z" fill="#d3a32b"/>
<path d="M1120.2,543.5L1114.9,576L1109.3,564.2z" fill="#ca9c29"/>
<path d="M1120.2,543.5L1109.4,564.8L1108.7,551.3z" fill="#c09527"/>
<path d="M1120.2,543.5L1108.6,552L1112.6,539.4z" fill="#b78e25"/>
<path d="M1120,543L1121.5,544" stroke="#f4ee10" stroke-width="1.8" fill="none"/>
<ellipse cx="1132.5" cy="698" rx="30" ry="28.5" transform="rotate(0 1132.5 698)" fill="#16888f"/>
<path d="M1133.8,692.5L1138.8,694.2" stroke="#f4ee10" stroke-width="1.8" fill="none"/>
<path d="M1122.2,596.2L1158.9,646.1L1161.7,651.4z" fill="#0d58ae"/>
<path d="M1122.2,596.2L1161.6,650.9L1162.7,656.7z" fill="#0d59b0"/>
<path d="M1122.2,596.2L1162.6,656.2L1162,662z" fill="#0e5ab2"/>
<path d="M1122.2,596.2L1162.1,661.5L1159.7,667.2z" fill="#0e5cb6"/>
<path d="M1122.2,596.2L1160,666.8L1155.9,672z" fill="#0e5eba"/>
<path d="M1122.2,596.2L1156.3,671.6L1150.9,676.2z" fill="#0e60be"/>
<path d="M1122.2,596.2L1151.4,675.8L1144.8,679.5z" fill="#0f62c2"/>
<path d="M1122.2,596.2L1145.4,679.2L1137.9,681.8z" fill="#0f63c4"/>
<path d="M1122.2,596.2L1138.6,681.7L1130.6,683.1z" fill="#0f64c6"/>
<path d="M1122.2,596.2L1131.3,683L1123.2,683.2z" fill="#0f64c6"/>
<path d="M1122.2,596.2L1123.9,683.2L1116.1,682.1z" fill="#0f63c4"/>
<path d="M1122.2,596.2L1116.7,682.2L1109.5,679.9z" fill="#0f62c2"/>
<path d="M1122.2,596.2L1110.1,680.1L1103.9,676.7z" fill="#0e60be"/>
<path d="M1122.2,596.2L1104.4,677L1099.5,672.6z" fill="#0e5eba"/>
<path d="M1122.2,596.2L1099.9,673L1096.5,667.9z" fill="#0e5cb6"/>
<path d="M1122.2,596.2L1096.7,668.3L1095,662.7z" fill="#0e5ab2"/>
<path d="M1122.2,596.2L1095.1,663.2L1095.1,657.4z" fill="#0d59b0"/>
<path d="M1122.2,596.2L1095,657.9L1096.6,652.6z" fill="#0d58ae"/>
<ellipse cx="1128.8" cy="658.8" rx="24.4" ry="34" transform="rotate(-95.9 1128.8 658.8)" fill="#0e5db8"/>
<path d="M1128.8,659L1131,678.5" stroke="#f4ee10" stroke-width="1.8" fill="none"/>
<path d="M1121,595L1122.5,596.5" stroke="#f4ee10" stroke-width="1.8" fill="none"/>
<path d="M1210,599.4L1227.7,528.3L1228,528.1z" fill="#d5a828"/>
<path d="M1210,599.4L1228,528.1L1228.6,528.1z" fill="#d7aa28"/>
<path d="M1210,599.4L1228.5,528L1229.5,528.2z" fill="#d6a928"/>
<path d="M1210,599.4L1229.4,528.2L1230.8,528.5z" fill="#d3a727"/>
<path d="M1210,599.4L1230.6,528.4L1232.2,528.9z" fill="#cea326"/>
<path d="M1210,599.4L1232,528.9L1233.9,529.5z" fill="#c79e25"/>
<path d="M1210,599.4L1233.7,529.4L1235.7,530.1z" fill="#c09824"/>
<path d="M1210,599.4L1235.5,530.1L1237.6,530.9z" fill="#b99222"/>
<path d="M1210,599.4L1237.4,530.8L1239.6,531.7z" fill="#b38d21"/>
<path d="M1210,599.4L1239.3,531.6L1241.5,532.6z" fill="#ae8a20"/>
<path d="M1210,599.4L1241.3,532.5L1243.3,533.5z" fill="#ac8820"/>
<path d="M1210,599.4L1243.1,533.4L1245,534.3z" fill="#ad8920"/>
<path d="M1210,599.4L1244.8,534.2L1246.5,535.1z" fill="#b08b21"/>
<path d="M1210,599.4L1246.4,535.1L1247.8,535.9z" fill="#b58f22"/>
<path d="M1210,599.4L1247.6,535.8L1248.7,536.6z" fill="#bc9423"/>
<path d="M1210,599.4L1248.7,536.5L1249.4,537.1z" fill="#c39a24"/>
<path d="M1210,599.4L1249.4,537.1L1249.7,537.5z" fill="#caa026"/>
<path d="M1210,599.4L1249.7,537.5L1249.7,537.8z" fill="#d0a527"/>
<path d="M1212.5,593.8L1238.6,537.4L1241.1,533.7z" fill="#22abb5"/>
<path d="M1212.5,593.8L1240.8,534L1244.2,531.4z" fill="#21a6af"/>
<path d="M1212.5,593.8L1243.9,531.6L1248.1,530.2z" fill="#1f9ba4"/>
<path d="M1212.5,593.8L1247.7,530.3L1252.5,530.1z" fill="#1c8d95"/>
<path d="M1212.5,593.8L1252.1,530.1L1257.3,531.2z" fill="#197d84"/>
<path d="M1212.5,593.8L1256.8,531L1262.2,533.3z" fill="#156d73"/>
<path d="M1212.5,593.8L1261.8,533.1L1267.1,536.5z" fill="#135e64"/>
<path d="M1212.5,593.8L1266.6,536.1L1271.7,540.5z" fill="#115459"/>
<path d="M1212.5,593.8L1271.2,540.1L1275.8,545.2z" fill="#0f4e53"/>
<path d="M1212.5,593.8L1275.4,544.7L1279.2,550.4z" fill="#0f4e53"/>
<path d="M1212.5,593.8L1278.9,549.9L1281.8,555.8z" fill="#115459"/>
<path d="M1212.5,593.8L1281.6,555.3L1283.5,561.3z" fill="#135e64"/>
<path d="M1212.5,593.8L1283.4,560.8L1284.2,566.5z" fill="#156d73"/>
<path d="M1212.5,593.8L1284.2,566L1283.8,571.3z" fill="#197d84"/>
<path d="M1212.5,593.8L1283.9,570.9L1282.5,575.5z" fill="#1c8d95"/>
<path d="M1212.5,593.8L1282.7,575.1L1280.2,578.8z" fill="#1f9ba4"/>
<path d="M1212.5,593.8L1280.4,578.5L1277,581.1z" fill="#21a6af"/>
<path d="M1212.5,593.8L1277.4,580.9L1273.5,582.2z" fill="#22abb5"/>
<path d="M1261.9,531.9L1267.2,524" stroke="#f4ee10" stroke-width="1.8" fill="none"/>
<path d="M1248.9,613.1L1294.4,606.3L1294.9,606.7z" fill="#b6a957"/>
<path d="M1248.9,613.1L1294.8,606.6L1294.8,608z" fill="#b9ac58"/>
<path d="M1248.9,613.1L1294.8,607.8L1294.2,610z" fill="#b8ab58"/>
<path d="M1248.9,613.1L1294.3,609.7L1293.1,612.7z" fill="#b4a856"/>
<path d="M1248.9,613.1L1293.3,612.4L1291.7,616.1z" fill="#aea153"/>
<path d="M1248.9,613.1L1291.8,615.7L1289.8,619.9z" fill="#a5994e"/>
<path d="M1248.9,613.1L1290,619.5L1287.6,624.2z" fill="#9b904a"/>
<path d="M1248.9,613.1L1287.8,623.7L1285.2,628.7z" fill="#928845"/>
<path d="M1248.9,613.1L1285.4,628.2L1282.6,633.3z" fill="#8a8042"/>
<path d="M1248.9,613.1L1282.8,632.8L1279.9,637.8z" fill="#847b3f"/>
<path d="M1248.9,613.1L1280.2,637.3L1277.2,642z" fill="#82793e"/>
<path d="M1248.9,613.1L1277.5,641.6L1274.6,646z" fill="#82793e"/>
<path d="M1248.9,613.1L1274.9,645.6L1272.3,649.4z" fill="#867d40"/>
<path d="M1248.9,613.1L1272.5,649L1270.2,652.2z" fill="#8d8343"/>
<path d="M1248.9,613.1L1270.4,651.9L1268.4,654.3z" fill="#968b47"/>
<path d="M1248.9,613.1L1268.6,654.1L1267,655.7z" fill="#9f944c"/>
<path d="M1248.9,613.1L1267.2,655.6L1266.1,656.2z" fill="#a99d50"/>
<path d="M1248.9,613.1L1266.2,656.2L1265.7,655.9z" fill="#b1a454"/>
<path d="M1283.8,634.4L1288,637" stroke="#f4ee10" stroke-width="1.8" fill="none"/>
<path d="M1180.6,618.5L1235.2,589.9L1235.9,589.9z" fill="#0d6ba4"/>
<path d="M1180.6,618.5L1235.9,589.9L1236.7,590.5z" fill="#0d659b"/>
<path d="M1180.6,618.5L1236.6,590.4L1237.6,591.7z" fill="#0c6094"/>
<path d="M1180.6,618.5L1237.5,591.5L1238.5,593.3z" fill="#0c5d8f"/>
<path d="M1180.6,618.5L1238.4,593.1L1239.4,595.5z" fill="#0c5c8d"/>
<path d="M1180.6,618.5L1239.3,595.2L1240.3,598z" fill="#0c5d8f"/>
<path d="M1180.6,618.5L1240.2,597.7L1241.1,600.9z" fill="#0c6094"/>
<path d="M1180.6,618.5L1241,600.6L1241.8,604z" fill="#0d659b"/>
<path d="M1180.6,618.5L1241.8,603.6L1242.5,607.2z" fill="#0d6ba4"/>
<path d="M1180.6,618.5L1242.4,606.8L1243,610.4z" fill="#0e71ad"/>
<path d="M1180.6,618.5L1243,610L1243.4,613.5z" fill="#0f77b6"/>
<path d="M1180.6,618.5L1243.4,613.1L1243.7,616.4z" fill="#0f7cbe"/>
<path d="M1180.6,618.5L1243.6,616.1L1243.7,619z" fill="#107fc2"/>
<path d="M1180.6,618.5L1243.7,618.7L1243.6,621.2z" fill="#1080c4"/>
<path d="M1180.6,618.5L1243.7,621L1243.4,623z" fill="#107fc2"/>
<path d="M1180.6,618.5L1243.4,622.9L1243,624.3z" fill="#0f7cbe"/>
<path d="M1180.6,618.5L1243,624.2L1242.4,625z" fill="#0f77b6"/>
<path d="M1180.6,618.5L1242.5,625L1241.9,625.2z" fill="#0e71ad"/>
<path d="M1233.1,638.8L1239.9,593.9L1241.1,590.4z" fill="#1276e2"/>
<path d="M1233.1,638.8L1240.9,590.7L1243.1,587.9z" fill="#1275e1"/>
<path d="M1233.1,638.8L1242.9,588.1L1245.9,586.2z" fill="#1172da"/>
<path d="M1233.1,638.8L1245.6,586.4L1249.4,585.4z" fill="#106cce"/>
<path d="M1233.1,638.8L1249.1,585.4L1253.5,585.4z" fill="#0f64bf"/>
<path d="M1233.1,638.8L1253.1,585.4L1257.9,586.3z" fill="#0e5bad"/>
<path d="M1233.1,638.8L1257.5,586.2L1262.5,588.1z" fill="#0c529c"/>
<path d="M1233.1,638.8L1262.1,587.9L1267,590.6z" fill="#0b4a8d"/>
<path d="M1233.1,638.8L1266.6,590.4L1271.2,593.8z" fill="#0a4482"/>
<path d="M1233.1,638.8L1270.9,593.5L1275,597.5z" fill="#0a417d"/>
<path d="M1233.1,638.8L1274.7,597.1L1278.2,601.5z" fill="#0a417d"/>
<path d="M1233.1,638.8L1277.9,601.1L1280.6,605.7z" fill="#0b4584"/>
<path d="M1233.1,638.8L1280.4,605.3L1282.1,609.9z" fill="#0b4b90"/>
<path d="M1233.1,638.8L1282,609.5L1282.7,613.8z" fill="#0d539f"/>
<path d="M1233.1,638.8L1282.7,613.4L1282.3,617.3z" fill="#0e5cb1"/>
<path d="M1233.1,638.8L1282.4,617L1281,620.3z" fill="#0f65c2"/>
<path d="M1233.1,638.8L1281.1,620.1L1278.7,622.6z" fill="#116dd1"/>
<path d="M1233.1,638.8L1279,622.4L1276,624z" fill="#1273dc"/>
<path d="M1180,618.5L1181.5,618.5" stroke="#f4ee10" stroke-width="1.8" fill="none"/>
<path d="M1232,639.5L1233.5,638.5" stroke="#f4ee10" stroke-width="1.8" fill="none"/>
<path d="M1385,585.2L1441.8,502.8L1442.7,502.3z" fill="#1c48c3"/>
<path d="M1385,585.2L1442.6,502.3L1444,502.4z" fill="#1c47c0"/>
<path d="M1385,585.2L1443.8,502.3L1445.7,503z" fill="#1b45bc"/>
<path d="M1385,585.2L1445.4,502.9L1447.7,504.1z" fill="#1a43b6"/>
<path d="M1385,585.2L1447.5,504L1450.1,505.7z" fill="#1941b0"/>
<path d="M1385,585.2L1449.8,505.5L1452.7,507.8z" fill="#183ea9"/>
<path d="M1385,585.2L1452.4,507.5L1455.4,510.2z" fill="#183da3"/>
<path d="M1385,585.2L1455.1,509.9L1458.1,512.8z" fill="#1f41a1"/>
<path d="M1385,585.2L1457.8,512.5L1460.9,515.7z" fill="#3e5baa"/>
<path d="M1385,585.2L1460.6,515.4L1463.5,518.6z" fill="#6c81ba"/>
<path d="M1385,585.2L1463.2,518.3L1465.9,521.6z" fill="#657bb9"/>
<path d="M1385,585.2L1465.6,521.3L1468,524.5z" fill="#3655ad"/>
<path d="M1385,585.2L1467.7,524.2L1469.7,527.1z" fill="#1d42aa"/>
<path d="M1385,585.2L1469.5,526.9L1471,529.6z" fill="#1a41b0"/>
<path d="M1385,585.2L1470.9,529.3L1471.9,531.6z" fill="#1a43b6"/>
<path d="M1385,585.2L1471.8,531.4L1472.3,533.3z" fill="#1b45bc"/>
<path d="M1385,585.2L1472.2,533.1L1472.1,534.4z" fill="#1c47c0"/>
<path d="M1385,585.2L1472.2,534.3L1471.6,535.1z" fill="#1c48c3"/>
<path d="M1461.2,514.4L1477.5,500.2" stroke="#f4ee10" stroke-width="1.8" fill="none"/>
<path d="M1384,586L1385.5,585" stroke="#f4ee10" stroke-width="1.8" fill="none"/>
<path d="M1451.2,576.9L1509.2,533.3L1510.1,533.3z" fill="#352b90"/>
<path d="M1451.2,576.9L1510,533.3L1511,534.2z" fill="#332a8b"/>
<path d="M1451.2,576.9L1510.9,534.1L1512.2,535.9z" fill="#312885"/>
<path d="M1451.2,576.9L1512.1,535.7L1513.5,538.4z" fill="#2e267e"/>
<path d="M1451.2,576.9L1513.3,538.1L1514.9,541.6z" fill="#2c2478"/>
<path d="M1451.2,576.9L1514.7,541.2L1516.3,545.3z" fill="#2a2374"/>
<path d="M1451.2,576.9L1516.2,544.9L1517.8,549.5z" fill="#292271"/>
<path d="M1451.2,576.9L1517.6,549L1519.2,554z" fill="#2a2271"/>
<path d="M1451.2,576.9L1519,553.5L1520.5,558.7z" fill="#2e2775"/>
<path d="M1451.2,576.9L1520.4,558.2L1521.7,563.4z" fill="#443e86"/>
<path d="M1451.2,576.9L1521.6,562.9L1522.7,568z" fill="#706da4"/>
<path d="M1451.2,576.9L1522.6,567.5L1523.5,572.3z" fill="#7b78ad"/>
<path d="M1451.2,576.9L1523.5,571.8L1524.1,576.1z" fill="#56509c"/>
<path d="M1451.2,576.9L1524.1,575.7L1524.5,579.4z" fill="#3c3392"/>
<path d="M1451.2,576.9L1524.4,579.1L1524.5,582.1z" fill="#362d93"/>
<path d="M1451.2,576.9L1524.5,581.8L1524.3,584z" fill="#372d95"/>
<path d="M1451.2,576.9L1524.4,583.8L1523.9,585.1z" fill="#372d96"/>
<path d="M1451.2,576.9L1524,585L1523.3,585.3z" fill="#362c94"/>
<path d="M1450.5,577L1452.5,576.5" stroke="#f4ee10" stroke-width="1.8" fill="none"/>
<path d="M1468.1,544L1551.3,534.9L1552.2,535.3z" fill="#80aa6c"/>
<path d="M1468.1,544L1552.2,535.2L1552.9,536.5z" fill="#7da669"/>
<path d="M1468.1,544L1552.8,536.3L1553.3,538.5z" fill="#789f65"/>
<path d="M1468.1,544L1553.3,538.2L1553.6,541.2z" fill="#719660"/>
<path d="M1468.1,544L1553.6,540.9L1553.5,544.5z" fill="#6a8c59"/>
<path d="M1468.1,544L1553.6,544.1L1553.3,548.3z" fill="#628253"/>
<path d="M1468.1,544L1553.3,547.9L1552.8,552.5z" fill="#5b794d"/>
<path d="M1468.1,544L1552.9,552L1552.2,557z" fill="#567249"/>
<path d="M1468.1,544L1552.2,556.5L1551.3,561.5z" fill="#546f46"/>
<path d="M1468.1,544L1551.4,561L1550.3,566z" fill="#546f46"/>
<path d="M1468.1,544L1550.4,565.5L1549.1,570.3z" fill="#567249"/>
<path d="M1468.1,544L1549.3,569.8L1547.9,574.3z" fill="#5b794d"/>
<path d="M1468.1,544L1548,573.8L1546.6,577.8z" fill="#628253"/>
<path d="M1468.1,544L1546.8,577.4L1545.3,580.7z" fill="#6a8c59"/>
<path d="M1468.1,544L1545.5,580.4L1544.1,582.9z" fill="#719660"/>
<path d="M1468.1,544L1544.2,582.7L1542.9,584.4z" fill="#789f65"/>
<path d="M1468.1,544L1543.1,584.3L1541.9,585.1z" fill="#7da669"/>
<path d="M1468.1,544L1542,585L1541.1,585z" fill="#80aa6c"/>
<path d="M1467.5,543.5L1469,544.5" stroke="#f4ee10" stroke-width="1.8" fill="none"/>
<path d="M1546,535L1546.1,535L1546.9,523.2z" fill="#b09641"/>
<path d="M1546,535L1546.8,523.8L1550.9,513.6z" fill="#bda045"/>
<path d="M1546,535L1550.7,514L1557.6,506.8z" fill="#c8aa4a"/>
<path d="M1546,535L1557.2,507.1L1565.8,504.1z" fill="#d0b14d"/>
<path d="M1546,535L1565.4,504.1L1574.4,505.7z" fill="#d4b44e"/>
<path d="M1546,535L1574,505.6L1582,511.6z" fill="#d3b34e"/>
<path d="M1546,535L1581.6,511.2L1587.4,520.6z" fill="#cdb156"/>
<path d="M1546,535L1587.2,520.1L1590,531.6z" fill="#c7b476"/>
<path d="M1546,535L1589.9,531L1589.1,542.8z" fill="#c1b487"/>
<path d="M1546,535L1589.2,542.2L1585.1,552.4z" fill="#b39f60"/>
<path d="M1546,535L1585.3,552L1578.4,559.2z" fill="#a28b41"/>
<path d="M1546,535L1578.8,558.9L1570.2,561.9z" fill="#998238"/>
<path d="M1546,535L1570.6,561.9L1561.6,560.3z" fill="#957e37"/>
<path d="M1546,535L1562,560.4L1554,554.4z" fill="#967f37"/>
<path d="M1546,535L1554.4,554.8L1548.6,545.4z" fill="#9b8439"/>
<path d="M1546,535L1548.8,545.9L1546.1,535z" fill="#a58c3d"/>
<path d="M1540.6,601.5L1516.1,566.1L1513.5,560.7z" fill="#0b78ac"/>
<path d="M1540.6,601.5L1513.6,561.2L1513,555.8z" fill="#0b7aaf"/>
<path d="M1540.6,601.5L1512.9,556.2L1514.2,551z" fill="#0c7db4"/>
<path d="M1540.6,601.5L1514,551.4L1517.2,546.6z" fill="#0c82ba"/>
<path d="M1540.6,601.5L1516.9,547L1521.7,543z" fill="#0d87c2"/>
<path d="M1540.6,601.5L1521.3,543.3L1527.6,540.2z" fill="#0d8cc9"/>
<path d="M1540.6,601.5L1527.1,540.4L1534.5,538.5z" fill="#0d91cf"/>
<path d="M1540.6,601.5L1533.9,538.6L1542,537.9z" fill="#0e94d4"/>
<path d="M1540.6,601.5L1541.3,537.9L1549.7,538.4z" fill="#0e96d7"/>
<path d="M1540.6,601.5L1549.1,538.3L1557.3,540.1z" fill="#0e96d7"/>
<path d="M1540.6,601.5L1556.7,539.9L1564.2,542.9z" fill="#0e94d4"/>
<path d="M1540.6,601.5L1563.7,542.6L1570.2,546.5z" fill="#0d91cf"/>
<path d="M1540.6,601.5L1569.8,546.1L1574.9,550.8z" fill="#0d8cc9"/>
<path d="M1540.6,601.5L1574.6,550.4L1578.1,555.6z" fill="#0d87c2"/>
<path d="M1540.6,601.5L1577.9,555.2L1579.5,560.6z" fill="#0c82ba"/>
<path d="M1540.6,601.5L1579.4,560.1L1579.1,565.5z" fill="#0c7db4"/>
<path d="M1540.6,601.5L1579.2,565.1L1577,570.1z" fill="#0b7aaf"/>
<path d="M1540.6,601.5L1577.2,569.7L1573.6,573.8z" fill="#0b78ac"/>
<ellipse cx="1546.2" cy="559.4" rx="21.2" ry="33.5" transform="rotate(97.6 1546.2 559.4)" fill="#05698c"/>
<path d="M1548.8,547.5L1546.5,559.4" stroke="#f4ee10" stroke-width="1.8" fill="none"/>
<path d="M1581.2,603.1L1631.3,566.4L1632,566.5z" fill="#deb038"/>
<path d="M1581.2,603.1L1631.9,566.4L1632.7,567.3z" fill="#daad37"/>
<path d="M1581.2,603.1L1632.6,567.2L1633.6,568.8z" fill="#d3a735"/>
<path d="M1581.2,603.1L1633.5,568.6L1634.6,570.9z" fill="#caa033"/>
<path d="M1581.2,603.1L1634.5,570.7L1635.7,573.6z" fill="#bf9730"/>
<path d="M1581.2,603.1L1635.6,573.3L1636.9,576.8z" fill="#b48f2d"/>
<path d="M1581.2,603.1L1636.8,576.4L1638.1,580.4z" fill="#ab882b"/>
<path d="M1581.2,603.1L1637.9,580L1639.2,584.2z" fill="#a48229"/>
<path d="M1581.2,603.1L1639.1,583.8L1640.3,588.2z" fill="#a07f28"/>
<path d="M1581.2,603.1L1640.2,587.7L1641.2,592.2z" fill="#a07f28"/>
<path d="M1581.2,603.1L1641.1,591.7L1642.1,596z" fill="#a48229"/>
<path d="M1581.2,603.1L1642,595.6L1642.8,599.6z" fill="#ab882b"/>
<path d="M1581.2,603.1L1642.7,599.3L1643.3,602.9z" fill="#b48f2d"/>
<path d="M1581.2,603.1L1643.2,602.6L1643.6,605.7z" fill="#bf9730"/>
<path d="M1581.2,603.1L1643.6,605.4L1643.7,607.9z" fill="#caa033"/>
<path d="M1581.2,603.1L1643.7,607.7L1643.6,609.5z" fill="#d3a735"/>
<path d="M1581.2,603.1L1643.6,609.4L1643.3,610.4z" fill="#daad37"/>
<path d="M1581.2,603.1L1643.4,610.4L1642.9,610.7z" fill="#deb038"/>
<path d="M1639.4,581.9L1647.5,579.4" stroke="#f4ee10" stroke-width="1.8" fill="none"/>
<path d="M1583.8,552.5L1583.9,552.5L1585,541.3z" fill="#0e9bb3"/>
<path d="M1583.8,552.5L1584.8,541.8L1589.8,531.9z" fill="#0e97ae"/>
<path d="M1583.8,552.5L1589.5,532.3L1597.6,525.3z" fill="#0d8ea4"/>
<path d="M1583.8,552.5L1597.2,525.6L1607.2,522.5z" fill="#0c8397"/>
<path d="M1583.8,552.5L1606.7,522.5L1617.2,523.8z" fill="#0b7789"/>
<path d="M1583.8,552.5L1616.7,523.7L1625.9,529.2z" fill="#0a6b7c"/>
<path d="M1583.8,552.5L1625.5,528.8L1632.2,537.7z" fill="#096372"/>
<path d="M1583.8,552.5L1631.9,537.2L1634.9,548.1z" fill="#085e6d"/>
<path d="M1583.8,552.5L1634.9,547.5L1633.8,558.7z" fill="#085e6d"/>
<path d="M1583.8,552.5L1634,558.2L1629,568.1z" fill="#096372"/>
<path d="M1583.8,552.5L1629.3,567.7L1621.2,574.7z" fill="#0a6b7c"/>
<path d="M1583.8,552.5L1621.6,574.4L1611.6,577.5z" fill="#0b7789"/>
<path d="M1583.8,552.5L1612.1,577.5L1601.6,576.2z" fill="#0c8397"/>
<path d="M1583.8,552.5L1602.1,576.3L1592.9,570.8z" fill="#0d8ea4"/>
<path d="M1583.8,552.5L1593.3,571.2L1586.6,562.3z" fill="#0e97ae"/>
<path d="M1583.8,552.5L1586.9,562.8L1583.9,552.5z" fill="#0e9bb3"/>
<path d="M1567.5,671.9L1603.6,650.3L1603.8,650.5z" fill="#0e81c4"/>
<path d="M1567.5,671.9L1603.8,650.5L1604,651.3z" fill="#0e7bbb"/>
<path d="M1567.5,671.9L1604,651.2L1604.3,652.7z" fill="#0d75b2"/>
<path d="M1567.5,671.9L1604.3,652.5L1604.6,654.5z" fill="#0c71ab"/>
<path d="M1567.5,671.9L1604.6,654.3L1605,656.8z" fill="#0c6ea6"/>
<path d="M1567.5,671.9L1604.9,656.6L1605.3,659.5z" fill="#0c6da5"/>
<path d="M1567.5,671.9L1605.3,659.2L1605.7,662.4z" fill="#0c6ea7"/>
<path d="M1567.5,671.9L1605.6,662.1L1606,665.6z" fill="#0d71ac"/>
<path d="M1567.5,671.9L1605.9,665.2L1606.3,668.8z" fill="#0d76b4"/>
<path d="M1567.5,671.9L1606.2,668.4L1606.5,672z" fill="#0e7cbd"/>
<path d="M1567.5,671.9L1606.5,671.6L1606.8,675.1z" fill="#0e83c6"/>
<path d="M1567.5,671.9L1606.8,674.7L1607,678z" fill="#0f88cf"/>
<path d="M1567.5,671.9L1606.9,677.7L1607.1,680.6z" fill="#108dd6"/>
<path d="M1567.5,671.9L1607.1,680.3L1607.2,682.8z" fill="#1090db"/>
<path d="M1567.5,671.9L1607.2,682.6L1607.2,684.6z" fill="#1091dc"/>
<path d="M1567.5,671.9L1607.2,684.4L1607.1,685.8z" fill="#1090da"/>
<path d="M1567.5,671.9L1607.1,685.7L1607,686.6z" fill="#0f8cd5"/>
<path d="M1567.5,671.9L1607,686.5L1606.9,686.7z" fill="#0f87cd"/>
<path d="M1605,661.2L1612.5,660" stroke="#f4ee10" stroke-width="1.8" fill="none"/>
<path d="M1591.2,656.9L1568.9,631.7L1566.1,627.2z" fill="#f4f11c"/>
<path d="M1591.2,656.9L1566.2,627.6L1565.1,623z" fill="#eeec1b"/>
<path d="M1591.2,656.9L1565.1,623.3L1565.7,618.7z" fill="#e3e11a"/>
<path d="M1591.2,656.9L1565.6,619.1L1567.9,614.8z" fill="#d5d218"/>
<path d="M1591.2,656.9L1567.6,615.1L1571.5,611.3z" fill="#c4c216"/>
<path d="M1591.2,656.9L1571.2,611.6L1576.4,608.6z" fill="#b3b115"/>
<path d="M1591.2,656.9L1576,608.8L1582.3,606.7z" fill="#a6a41a"/>
<path d="M1591.2,656.9L1581.8,606.8L1588.9,605.8z" fill="#a3a338"/>
<path d="M1591.2,656.9L1588.3,605.8L1595.7,605.8z" fill="#adaf6c"/>
<path d="M1591.2,656.9L1595.1,605.8L1602.4,606.9z" fill="#adaf6c"/>
<path d="M1591.2,656.9L1601.8,606.8L1608.6,609z" fill="#a3a338"/>
<path d="M1591.2,656.9L1608.1,608.8L1614,611.9z" fill="#a6a41a"/>
<path d="M1591.2,656.9L1613.6,611.6L1618.2,615.4z" fill="#b3b115"/>
<path d="M1591.2,656.9L1617.9,615.1L1621.1,619.4z" fill="#c4c216"/>
<path d="M1591.2,656.9L1620.9,619.1L1622.4,623.7z" fill="#d5d218"/>
<path d="M1591.2,656.9L1622.3,623.3L1622.1,628z" fill="#e3e11a"/>
<path d="M1591.2,656.9L1622.2,627.6L1620.2,632z" fill="#eeec1b"/>
<path d="M1591.2,656.9L1620.4,631.7L1617.1,635.3z" fill="#f4f11c"/>
<path d="M1357.5,622.5L1414.1,663.6L1414.5,664.3z" fill="#c2b462"/>
<path d="M1357.5,622.5L1414.5,664.2L1414.1,665.4z" fill="#beb060"/>
<path d="M1357.5,622.5L1414.2,665.3L1413.3,666.9z" fill="#b7a95c"/>
<path d="M1357.5,622.5L1413.4,666.7L1411.8,668.7z" fill="#ad9f57"/>
<path d="M1357.5,622.5L1412,668.5L1409.9,670.7z" fill="#a19451"/>
<path d="M1357.5,622.5L1410.1,670.5L1407.6,672.9z" fill="#958a4b"/>
<path d="M1357.5,622.5L1407.8,672.7L1404.9,675.3z" fill="#8b8046"/>
<path d="M1357.5,622.5L1405.2,675L1401.9,677.6z" fill="#837942"/>
<path d="M1357.5,622.5L1402.2,677.4L1398.8,680z" fill="#7f7540"/>
<path d="M1357.5,622.5L1399.1,679.7L1395.5,682.2z" fill="#7f7540"/>
<path d="M1357.5,622.5L1395.9,682L1392.4,684.3z" fill="#837942"/>
<path d="M1357.5,622.5L1392.7,684L1389.4,686.1z" fill="#8b8046"/>
<path d="M1357.5,622.5L1389.7,685.9L1386.6,687.5z" fill="#958a4b"/>
<path d="M1357.5,622.5L1386.9,687.4L1384.1,688.6z" fill="#a19451"/>
<path d="M1357.5,622.5L1384.4,688.5L1382.1,689.4z" fill="#ad9f57"/>
<path d="M1357.5,622.5L1382.3,689.3L1380.5,689.7z" fill="#b7a95c"/>
<path d="M1357.5,622.5L1380.7,689.6L1379.5,689.5z" fill="#beb060"/>
<path d="M1357.5,622.5L1379.6,689.6L1379.1,689z" fill="#c2b462"/>
<path d="M1308.8,626.2L1385.4,643.1L1385.8,643.6z" fill="#342c9b"/>
<path d="M1308.8,626.2L1385.8,643.5L1385.9,644.6z" fill="#332b98"/>
<path d="M1308.8,626.2L1385.9,644.5L1385.6,646.2z" fill="#322a94"/>
<path d="M1308.8,626.2L1385.7,646L1385,648.3z" fill="#30288e"/>
<path d="M1308.8,626.2L1385.1,648L1384.2,650.8z" fill="#2e2788"/>
<path d="M1308.8,626.2L1384.3,650.5L1383,653.6z" fill="#2c2581"/>
<path d="M1308.8,626.2L1383.2,653.3L1381.7,656.7z" fill="#2d277d"/>
<path d="M1308.8,626.2L1381.8,656.3L1380.1,659.9z" fill="#3b3682"/>
<path d="M1308.8,626.2L1380.3,659.5L1378.5,663.2z" fill="#545190"/>
<path d="M1308.8,626.2L1378.7,662.8L1376.7,666.4z" fill="#545190"/>
<path d="M1308.8,626.2L1376.9,666L1375,669.4z" fill="#3b3682"/>
<path d="M1308.8,626.2L1375.1,669.1L1373.2,672.2z" fill="#2d277d"/>
<path d="M1308.8,626.2L1373.4,671.9L1371.6,674.7z" fill="#2c2581"/>
<path d="M1308.8,626.2L1371.7,674.4L1370.1,676.7z" fill="#2e2788"/>
<path d="M1308.8,626.2L1370.2,676.5L1368.7,678.3z" fill="#30288e"/>
<path d="M1308.8,626.2L1368.9,678.1L1367.7,679.3z" fill="#322a94"/>
<path d="M1308.8,626.2L1367.8,679.2L1366.8,679.7z" fill="#332b98"/>
<path d="M1308.8,626.2L1366.9,679.7L1366.4,679.6z" fill="#342c9b"/>
<path d="M1379.4,664.4L1394.4,673" stroke="#f4ee10" stroke-width="1.8" fill="none"/>
<path d="M1353.8,618.8L1442.9,621.5L1443.2,621.8z" fill="#1058cd"/>
<path d="M1353.8,618.8L1443.2,621.8L1443.3,622.7z" fill="#1057ca"/>
<path d="M1353.8,618.8L1443.3,622.6L1443.3,624.1z" fill="#0f55c6"/>
<path d="M1353.8,618.8L1443.3,623.9L1443.2,626z" fill="#0f52c0"/>
<path d="M1353.8,618.8L1443.2,625.7L1442.9,628.2z" fill="#1151b9"/>
<path d="M1353.8,618.8L1442.9,628L1442.5,630.8z" fill="#255db7"/>
<path d="M1353.8,618.8L1442.5,630.5L1442,633.7z" fill="#6689c2"/>
<path d="M1353.8,618.8L1442,633.4L1441.3,636.7z" fill="#9dafcf"/>
<path d="M1353.8,618.8L1441.4,636.4L1440.6,639.8z" fill="#708ec1"/>
<path d="M1353.8,618.8L1440.7,639.5L1439.8,642.9z" fill="#2a5bad"/>
<path d="M1353.8,618.8L1439.9,642.5L1439,645.8z" fill="#114aa8"/>
<path d="M1353.8,618.8L1439.1,645.5L1438.2,648.6z" fill="#0e4aab"/>
<path d="M1353.8,618.8L1438.3,648.3L1437.4,651z" fill="#0e4cb1"/>
<path d="M1353.8,618.8L1437.5,650.7L1436.7,653.1z" fill="#0e4fb9"/>
<path d="M1353.8,618.8L1436.8,652.8L1436,654.7z" fill="#0f52c0"/>
<path d="M1353.8,618.8L1436.1,654.5L1435.4,655.8z" fill="#0f55c6"/>
<path d="M1353.8,618.8L1435.4,655.7L1434.9,656.4z" fill="#1057ca"/>
<path d="M1353.8,618.8L1434.9,656.4L1434.5,656.5z" fill="#1058cd"/>
<path d="M1427.5,700.6L1444.9,600.6L1445.8,598.7z" fill="#c7ab50"/>
<path d="M1427.5,700.6L1445.7,598.9L1447.5,597.5z" fill="#c2a74e"/>
<path d="M1427.5,700.6L1447.2,597.6L1449.9,596.7z" fill="#b99f4a"/>
<path d="M1427.5,700.6L1449.6,596.8L1453,596.5z" fill="#ac9445"/>
<path d="M1427.5,700.6L1452.6,596.5L1456.6,596.7z" fill="#9e883f"/>
<path d="M1427.5,700.6L1456.2,596.6L1460.7,597.4z" fill="#907c39"/>
<path d="M1427.5,700.6L1460.3,597.3L1465.1,598.6z" fill="#837134"/>
<path d="M1427.5,700.6L1464.6,598.4L1469.7,600.2z" fill="#7a6931"/>
<path d="M1427.5,700.6L1469.2,600L1474.2,602.2z" fill="#75642f"/>
<path d="M1427.5,700.6L1473.7,601.9L1478.6,604.5z" fill="#75642f"/>
<path d="M1427.5,700.6L1478.2,604.2L1482.7,607z" fill="#7a6931"/>
<path d="M1427.5,700.6L1482.3,606.7L1486.3,609.6z" fill="#837134"/>
<path d="M1427.5,700.6L1485.9,609.3L1489.3,612.3z" fill="#907c39"/>
<path d="M1427.5,700.6L1489,612L1491.7,615z" fill="#9e883f"/>
<path d="M1427.5,700.6L1491.5,614.7L1493.3,617.5z" fill="#ac9445"/>
<path d="M1427.5,700.6L1493.2,617.2L1494.1,619.8z" fill="#b99f4a"/>
<path d="M1427.5,700.6L1494,619.5L1494,621.8z" fill="#c2a74e"/>
<path d="M1427.5,700.6L1494,621.6L1493.2,623.2z" fill="#c7ab50"/>
<path d="M1475.6,600L1483,585.2" stroke="#f4ee10" stroke-width="1.8" fill="none"/>
<ellipse cx="1455" cy="692.5" rx="15" ry="12" transform="rotate(20 1455 692.5)" fill="#70985c"/>
<path d="M1411.9,671.9L1476.3,638.3L1476.9,638.6z" fill="#1056d0"/>
<path d="M1411.9,671.9L1476.9,638.5L1477.5,640z" fill="#1054cc"/>
<path d="M1411.9,671.9L1477.4,639.8L1478.1,642.3z" fill="#0f51c5"/>
<path d="M1411.9,671.9L1478,642L1478.6,645.5z" fill="#0e4ebb"/>
<path d="M1411.9,671.9L1478.6,645.1L1479.1,649.4z" fill="#0e49b1"/>
<path d="M1411.9,671.9L1479.1,649L1479.6,654.1z" fill="#0d45a6"/>
<path d="M1411.9,671.9L1479.5,653.5L1480,659.2z" fill="#0c419d"/>
<path d="M1411.9,671.9L1479.9,658.6L1480.3,664.6z" fill="#0c3e96"/>
<path d="M1411.9,671.9L1480.3,664L1480.5,670.3z" fill="#0b3c92"/>
<path d="M1411.9,671.9L1480.5,669.7L1480.6,675.9z" fill="#0b3c92"/>
<path d="M1411.9,671.9L1480.6,675.3L1480.7,681.3z" fill="#0c3e96"/>
<path d="M1411.9,671.9L1480.7,680.7L1480.6,686.4z" fill="#0c419d"/>
<path d="M1411.9,671.9L1480.6,685.8L1480.4,690.9z" fill="#0d45a6"/>
<path d="M1411.9,671.9L1480.4,690.4L1480.1,694.7z" fill="#0e49b1"/>
<path d="M1411.9,671.9L1480.2,694.3L1479.8,697.7z" fill="#0e4ebb"/>
<path d="M1411.9,671.9L1479.8,697.4L1479.4,699.9z" fill="#0f51c5"/>
<path d="M1411.9,671.9L1479.4,699.7L1478.9,701z" fill="#1054cc"/>
<path d="M1411.9,671.9L1478.9,700.9L1478.4,701.2z" fill="#1056d0"/>
<ellipse cx="1477.5" cy="669.8" rx="3" ry="31.5" transform="rotate(178.1 1477.5 669.8)" fill="#0d45a6"/>
<path d="M1477,669.8L1496.2,669.8" stroke="#f4ee10" stroke-width="1.8" fill="none"/>
<path d="M1227.2,667.1L1284.5,663.3L1291.4,663.7z" fill="#229a9a"/>
<path d="M1227.2,667.1L1290.9,663.6L1297.4,665.6z" fill="#23a0a0"/>
<path d="M1227.2,667.1L1296.9,665.4L1302.8,668.9z" fill="#24a3a3"/>
<path d="M1227.2,667.1L1302.4,668.6L1307.3,673.4z" fill="#24a5a5"/>
<path d="M1227.2,667.1L1306.9,672.9L1310.7,678.8z" fill="#24a4a4"/>
<path d="M1227.2,667.1L1310.4,678.3L1312.8,684.9z" fill="#23a1a1"/>
<path d="M1227.2,667.1L1312.7,684.3L1313.5,691.4z" fill="#229b9b"/>
<path d="M1227.2,667.1L1313.5,690.8L1312.8,698z" fill="#209595"/>
<path d="M1227.2,667.1L1312.9,697.4L1310.7,704.3z" fill="#1f8e8e"/>
<path d="M1227.2,667.1L1310.9,703.7L1307.3,710z" fill="#1d8787"/>
<path d="M1227.2,667.1L1307.6,709.5L1302.7,714.8z" fill="#1c8181"/>
<path d="M1227.2,667.1L1303.2,714.4L1297.3,718.4z" fill="#1b7d7d"/>
<path d="M1227.2,667.1L1297.8,718.2L1291.3,720.8z" fill="#1b7c7c"/>
<path d="M1227.2,667.1L1291.9,720.7L1285,721.8z" fill="#1b7d7d"/>
<path d="M1227.2,667.1L1285.6,721.7L1278.7,721.2z" fill="#1c8080"/>
<path d="M1227.2,667.1L1279.2,721.3L1272.7,719.2z" fill="#1d8585"/>
<path d="M1227.2,667.1L1273.2,719.4L1267.4,715.9z" fill="#1f8c8c"/>
<path d="M1227.2,667.1L1267.8,716.2L1263.3,711.8z" fill="#209393"/>
<ellipse cx="1285.2" cy="692.5" rx="28" ry="29.5" transform="rotate(-156.3 1285.2 692.5)" fill="#286a82"/>
<path d="M1284.6,691.5L1286,690" stroke="#f4ee10" stroke-width="1.8" fill="none"/>
<path d="M1315,697.5L1369.4,664.7L1369.8,664.8z" fill="#0c8eac"/>
<path d="M1315,697.5L1369.8,664.7L1370.4,665.4z" fill="#0c8ca9"/>
<path d="M1315,697.5L1370.3,665.3L1371,666.4z" fill="#0b88a4"/>
<path d="M1315,697.5L1370.9,666.3L1371.8,667.9z" fill="#0b829e"/>
<path d="M1315,697.5L1371.7,667.7L1372.6,669.8z" fill="#0a7c96"/>
<path d="M1315,697.5L1372.5,669.5L1373.4,672z" fill="#0a768f"/>
<path d="M1315,697.5L1373.3,671.7L1374.3,674.4z" fill="#0a7189"/>
<path d="M1315,697.5L1374.2,674.1L1375.2,677z" fill="#096d84"/>
<path d="M1315,697.5L1375.1,676.7L1376,679.7z" fill="#096b81"/>
<path d="M1315,697.5L1375.9,679.4L1376.8,682.5z" fill="#096b81"/>
<path d="M1315,697.5L1376.7,682.2L1377.5,685.1z" fill="#096d84"/>
<path d="M1315,697.5L1377.4,684.8L1378,687.6z" fill="#0a7189"/>
<path d="M1315,697.5L1378,687.3L1378.5,689.8z" fill="#0a768f"/>
<path d="M1315,697.5L1378.4,689.6L1378.8,691.8z" fill="#0a7c96"/>
<path d="M1315,697.5L1378.7,691.6L1378.9,693.3z" fill="#0b829e"/>
<path d="M1315,697.5L1378.9,693.2L1378.9,694.5z" fill="#0b88a4"/>
<path d="M1315,697.5L1378.9,694.4L1378.8,695.1z" fill="#0c8ca9"/>
<path d="M1315,697.5L1378.8,695.1L1378.5,695.3z" fill="#0c8eac"/>
<ellipse cx="1406.2" cy="711.9" rx="13" ry="20" transform="rotate(0 1406.2 711.9)" fill="#1478d8"/>
<path d="M1314.4,700L1398.3,679.9L1398.8,680.4z" fill="#0f60b9"/>
<path d="M1314.4,700L1398.8,680.3L1399.2,681.6z" fill="#0f5db2"/>
<path d="M1314.4,700L1399.2,681.5L1399.5,683.8z" fill="#0e58aa"/>
<path d="M1314.4,700L1399.5,683.5L1399.6,686.7z" fill="#0d54a1"/>
<path d="M1314.4,700L1399.6,686.3L1399.7,690.3z" fill="#0d509a"/>
<path d="M1314.4,700L1399.7,689.8L1399.6,694.4z" fill="#0c4d94"/>
<path d="M1314.4,700L1399.6,693.9L1399.3,699z" fill="#0c4b91"/>
<path d="M1314.4,700L1399.4,698.5L1399,703.9z" fill="#0e4c91"/>
<path d="M1314.4,700L1399,703.3L1398.5,708.9z" fill="#1c5798"/>
<path d="M1314.4,700L1398.6,708.3L1398,713.8z" fill="#4173aa"/>
<path d="M1314.4,700L1398,713.3L1397.4,718.6z" fill="#5a85b7"/>
<path d="M1314.4,700L1397.4,718.1L1396.7,723.1z" fill="#3d75b4"/>
<path d="M1314.4,700L1396.8,722.6L1396,727z" fill="#1b63b2"/>
<path d="M1314.4,700L1396,726.6L1395.2,730.4z" fill="#1160b6"/>
<path d="M1314.4,700L1395.3,730L1394.5,733z" fill="#1062bc"/>
<path d="M1314.4,700L1394.6,732.8L1393.8,734.9z" fill="#1064bf"/>
<path d="M1314.4,700L1393.9,734.7L1393.2,735.9z" fill="#1064c0"/>
<path d="M1314.4,700L1393.3,735.8L1392.7,736z" fill="#1063be"/>
<path d="M1398.8,708.8L1418.8,711.2" stroke="#f4ee10" stroke-width="1.8" fill="none"/>
<path d="M1287.5,735L1249.2,768.9L1248.4,768.9z" fill="#2c7964"/>
<path d="M1287.5,735L1248.5,769L1247.6,768z" fill="#2d7c66"/>
<path d="M1287.5,735L1247.7,768.2L1246.6,766.3z" fill="#2f826b"/>
<path d="M1287.5,735L1246.7,766.5L1245.5,763.6z" fill="#328971"/>
<path d="M1287.5,735L1245.6,764L1244.4,760.3z" fill="#359279"/>
<path d="M1287.5,735L1244.5,760.7L1243.3,756.3z" fill="#389b80"/>
<path d="M1287.5,735L1243.5,756.8L1242.3,751.9z" fill="#3ba386"/>
<path d="M1287.5,735L1242.4,752.4L1241.3,747.1z" fill="#3da98b"/>
<path d="M1287.5,735L1241.4,747.6L1240.5,742.1z" fill="#3eac8e"/>
<path d="M1287.5,735L1240.6,742.6L1239.7,737.1z" fill="#3eac8e"/>
<path d="M1287.5,735L1239.8,737.7L1239.2,732.3z" fill="#3da98b"/>
<path d="M1287.5,735L1239.2,732.8L1238.8,727.8z" fill="#3ba386"/>
<path d="M1287.5,735L1238.8,728.3L1238.6,723.9z" fill="#389b80"/>
<path d="M1287.5,735L1238.6,724.3L1238.6,720.5z" fill="#359279"/>
<path d="M1287.5,735L1238.6,720.8L1238.8,717.8z" fill="#328971"/>
<path d="M1287.5,735L1238.8,718.1L1239.2,716z" fill="#2f826b"/>
<path d="M1287.5,735L1239.2,716.2L1239.8,715.1z" fill="#2d7c66"/>
<path d="M1287.5,735L1239.8,715.1L1240.5,715z" fill="#2c7964"/>
<path d="M1269,731L1276,720" stroke="#f4ee10" stroke-width="1.8" fill="none"/>
<path d="M1310,765L1359.5,773.7L1364.8,775.4z" fill="#52906b"/>
<path d="M1310,765L1364.4,775.2L1368.8,778.3z" fill="#589b73"/>
<path d="M1310,765L1368.4,778L1371.7,782.3z" fill="#5da47a"/>
<path d="M1310,765L1371.5,781.9L1373.5,787.2z" fill="#61aa7e"/>
<path d="M1310,765L1373.4,786.7L1374,792.7z" fill="#62ac80"/>
<path d="M1310,765L1374,792.1L1373.2,798.5z" fill="#61aa7e"/>
<path d="M1310,765L1373.3,798L1371.1,804.4z" fill="#5da47a"/>
<path d="M1310,765L1371.4,803.9L1368,810.1z" fill="#589b73"/>
<path d="M1310,765L1368.3,809.6L1363.8,815.3z" fill="#52906b"/>
<path d="M1310,765L1364.2,814.9L1358.8,819.8z" fill="#4b8462"/>
<path d="M1310,765L1359.3,819.4L1353.3,823.2z" fill="#45785a"/>
<path d="M1310,765L1353.8,823L1347.5,825.5z" fill="#3f6f53"/>
<path d="M1310,765L1348.1,825.4L1341.8,826.6z" fill="#3c694e"/>
<path d="M1310,765L1342.3,826.5L1336.4,826.3z" fill="#3b674d"/>
<path d="M1310,765L1336.8,826.4L1331.5,824.7z" fill="#3c694e"/>
<path d="M1310,765L1331.9,824.9L1327.5,821.9z" fill="#3f6f53"/>
<path d="M1310,765L1327.8,822.2L1324.5,818z" fill="#45785a"/>
<path d="M1310,765L1324.7,818.3L1322.7,813.6z" fill="#4b8462"/>
<path d="M1362,735L1386.1,758.7L1389.2,762.8z" fill="#c29926"/>
<path d="M1362,735L1389,762.5L1390.7,767.1z" fill="#c49b27"/>
<path d="M1362,735L1390.6,766.7L1390.8,771.6z" fill="#c89e27"/>
<path d="M1362,735L1390.9,771.2L1389.6,776z" fill="#cda228"/>
<path d="M1362,735L1389.8,775.7L1387.1,780.2z" fill="#d3a62a"/>
<path d="M1362,735L1387.3,779.8L1383.4,783.8z" fill="#d9ab2b"/>
<path d="M1362,735L1383.7,783.6L1378.7,786.8z" fill="#deaf2c"/>
<path d="M1362,735L1379.2,786.6L1373.4,788.9z" fill="#e2b22d"/>
<path d="M1362,735L1373.8,788.7L1367.6,789.9z" fill="#e4b42d"/>
<path d="M1362,735L1368.1,789.9L1361.7,790z" fill="#e4b42d"/>
<path d="M1362,735L1362.2,790L1356.1,788.9z" fill="#e2b22d"/>
<path d="M1362,735L1356.6,789.1L1351,786.9z" fill="#deaf2c"/>
<path d="M1362,735L1351.4,787.1L1346.8,784z" fill="#d9ab2b"/>
<path d="M1362,735L1347.1,784.3L1343.6,780.4z" fill="#d3a62a"/>
<path d="M1362,735L1343.8,780.8L1341.7,776.3z" fill="#cda228"/>
<path d="M1362,735L1341.8,776.7L1341.1,771.9z" fill="#c89e27"/>
<path d="M1362,735L1341.1,772.2L1341.9,767.4z" fill="#c49b27"/>
<path d="M1362,735L1341.7,767.8L1343.7,763.4z" fill="#c29926"/>
<ellipse cx="1366" cy="771" rx="19" ry="25" transform="rotate(-96.3 1366 771)" fill="#b48e24"/>
<path d="M1366.8,770L1366.8,781" stroke="#f4ee10" stroke-width="1.8" fill="none"/>
<path d="M1371.2,740.6L1383.8,733" stroke="#f4ee10" stroke-width="1.8" fill="none"/>
<path d="M1300.6,735.6L1335.4,703.3L1341,699.6z" fill="#0d62a0"/>
<path d="M1300.6,735.6L1340.5,699.8L1346.4,698.3z" fill="#0d63a3"/>
<path d="M1300.6,735.6L1345.9,698.3L1351.8,699z" fill="#0d66a7"/>
<path d="M1300.6,735.6L1351.4,698.8L1357,701.7z" fill="#0e6aad"/>
<path d="M1300.6,735.6L1356.6,701.4L1361.7,706.3z" fill="#0e6eb4"/>
<path d="M1300.6,735.6L1361.3,705.9L1365.5,712.6z" fill="#0f72bb"/>
<path d="M1300.6,735.6L1365.2,712L1368.3,720.1z" fill="#0f76c1"/>
<path d="M1300.6,735.6L1368.1,719.4L1370,728.5z" fill="#1078c5"/>
<path d="M1300.6,735.6L1369.9,727.8L1370.4,737.3z" fill="#107ac8"/>
<path d="M1300.6,735.6L1370.4,736.6L1369.5,746.1z" fill="#107ac8"/>
<path d="M1300.6,735.6L1369.6,745.4L1367.4,754.3z" fill="#1078c5"/>
<path d="M1300.6,735.6L1367.6,753.7L1364.2,761.6z" fill="#0f76c1"/>
<path d="M1300.6,735.6L1364.5,761L1360,767.5z" fill="#0f72bb"/>
<path d="M1300.6,735.6L1360.4,767L1355.2,771.6z" fill="#0e6eb4"/>
<path d="M1300.6,735.6L1355.6,771.3L1349.9,773.9z" fill="#0e6aad"/>
<path d="M1300.6,735.6L1350.3,773.8L1344.4,774.1z" fill="#0d66a7"/>
<path d="M1300.6,735.6L1344.8,774.1L1339,772.2z" fill="#0d63a3"/>
<path d="M1300.6,735.6L1339.5,772.5L1334.5,768.8z" fill="#0d62a0"/>
<ellipse cx="1346.9" cy="736.2" rx="23.5" ry="38" transform="rotate(-179.2 1346.9 736.2)" fill="#0a69aa"/>
<path d="M1348,737L1367,732" stroke="#f4ee10" stroke-width="1.8" fill="none"/>
<ellipse cx="1300" cy="771.5" rx="39.8" ry="36.5" transform="rotate(0 1300 771.5)" fill="#696e3c"/>
<path d="M1300,770L1304,762" stroke="#f4ee10" stroke-width="1.8" fill="none"/>
<path d="M1153.5,724.5L1185.7,774.5L1185.5,774.9z" fill="#e1cc20"/>
<path d="M1153.5,724.5L1185.5,774.8L1184.4,775.4z" fill="#ddc81f"/>
<path d="M1153.5,724.5L1184.6,775.3L1182.6,776z" fill="#d6c11e"/>
<path d="M1153.5,724.5L1182.9,775.9L1180.2,776.6z" fill="#ccb81d"/>
<path d="M1153.5,724.5L1180.5,776.5L1177.1,777.3z" fill="#c0ad1b"/>
<path d="M1153.5,724.5L1177.4,777.2L1173.5,778z" fill="#b5a31a"/>
<path d="M1153.5,724.5L1173.9,777.9L1169.5,778.7z" fill="#aa9a18"/>
<path d="M1153.5,724.5L1169.9,778.6L1165.2,779.4z" fill="#a39317"/>
<path d="M1153.5,724.5L1165.7,779.3L1160.8,780z" fill="#9f8f16"/>
<path d="M1153.5,724.5L1161.3,780L1156.4,780.6z" fill="#9f8f16"/>
<path d="M1153.5,724.5L1156.9,780.6L1152.1,781.1z" fill="#a39317"/>
<path d="M1153.5,724.5L1152.6,781.1L1148.2,781.5z" fill="#aa9a18"/>
<path d="M1153.5,724.5L1148.6,781.5L1144.6,781.8z" fill="#b5a31a"/>
<path d="M1153.5,724.5L1145,781.8L1141.6,782z" fill="#c0ad1b"/>
<path d="M1153.5,724.5L1141.9,781.9L1139.2,782z" fill="#ccb81d"/>
<path d="M1153.5,724.5L1139.4,782L1137.4,781.9z" fill="#d6c11e"/>
<path d="M1153.5,724.5L1137.6,781.9L1136.5,781.7z" fill="#ddc81f"/>
<path d="M1153.5,724.5L1136.5,781.7L1136.2,781.4z" fill="#e1cc20"/>
<path d="M1150,757L1201.8,709L1203.8,707.7z" fill="#372d96"/>
<path d="M1150,757L1203.6,707.8L1206,707.3z" fill="#352c92"/>
<path d="M1150,757L1205.8,707.3L1208.5,707.7z" fill="#332a8b"/>
<path d="M1150,757L1208.2,707.6L1211,708.7z" fill="#2f2781"/>
<path d="M1150,757L1210.8,708.6L1213.7,710.5z" fill="#2b2476"/>
<path d="M1150,757L1213.4,710.3L1216.3,712.8z" fill="#27206c"/>
<path d="M1150,757L1216,712.6L1218.7,715.7z" fill="#241d62"/>
<path d="M1150,757L1218.5,715.4L1220.9,719z" fill="#211b5b"/>
<path d="M1150,757L1220.7,718.7L1222.8,722.6z" fill="#201a57"/>
<path d="M1150,757L1222.6,722.2L1224.4,726.4z" fill="#201a57"/>
<path d="M1150,757L1224.2,726L1225.4,730.2z" fill="#211b5b"/>
<path d="M1150,757L1225.4,729.8L1226.1,733.9z" fill="#241d62"/>
<path d="M1150,757L1226,733.5L1226.2,737.3z" fill="#27206c"/>
<path d="M1150,757L1226.2,737L1225.8,740.4z" fill="#2b2476"/>
<path d="M1150,757L1225.8,740.1L1224.9,742.9z" fill="#2f2781"/>
<path d="M1150,757L1225,742.7L1223.5,744.9z" fill="#332a8b"/>
<path d="M1150,757L1223.7,744.7L1221.8,746.2z" fill="#352c92"/>
<path d="M1150,757L1222,746.1L1219.9,746.8z" fill="#372d96"/>
<path d="M1221.2,722L1226.5,719.6" stroke="#f4ee10" stroke-width="1.8" fill="none"/>
<path d="M1156.2,785.9L1142.3,741L1141.8,737.1z" fill="#0e5caa"/>
<path d="M1156.2,785.9L1141.8,737.4L1142.9,734z" fill="#0e5dac"/>
<path d="M1156.2,785.9L1142.8,734.3L1145.5,731.7z" fill="#0e5faf"/>
<path d="M1156.2,785.9L1145.2,731.8L1149.3,730.1z" fill="#0e61b4"/>
<path d="M1156.2,785.9L1148.9,730.2L1154.2,729.5z" fill="#0f64b9"/>
<path d="M1156.2,785.9L1153.7,729.5L1160.1,729.7z" fill="#0f67be"/>
<path d="M1156.2,785.9L1159.5,729.7L1166.5,730.9z" fill="#1069c3"/>
<path d="M1156.2,785.9L1165.9,730.7L1173.2,732.9z" fill="#106bc6"/>
<path d="M1156.2,785.9L1172.6,732.7L1179.9,735.6z" fill="#106cc8"/>
<path d="M1156.2,785.9L1179.3,735.4L1186.4,739z" fill="#106cc8"/>
<path d="M1156.2,785.9L1185.8,738.7L1192.1,742.9z" fill="#106bc6"/>
<path d="M1156.2,785.9L1191.6,742.5L1197,747z" fill="#1069c3"/>
<path d="M1156.2,785.9L1196.6,746.6L1200.8,751.2z" fill="#0f67be"/>
<path d="M1156.2,785.9L1200.5,750.8L1203.3,755.4z" fill="#0f64b9"/>
<path d="M1156.2,785.9L1203.1,755L1204.4,759.2z" fill="#0e61b4"/>
<path d="M1156.2,785.9L1204.3,758.9L1204,762.5z" fill="#0e5faf"/>
<path d="M1156.2,785.9L1204.1,762.3L1202.2,765.3z" fill="#0e5dac"/>
<path d="M1156.2,785.9L1202.4,765L1199.3,767.1z" fill="#0e5caa"/>
<ellipse cx="1173.1" cy="749" rx="15" ry="33.8" transform="rotate(114.5 1173.1 749)" fill="#106fce"/>
<path d="M1173.1,751.5L1178.8,742" stroke="#f4ee10" stroke-width="1.8" fill="none"/>
<path d="M1179.4,737L1184.8,733" stroke="#f4ee10" stroke-width="1.8" fill="none"/>
<path d="M1185.6,780.2L1227.3,762L1228.1,762z" fill="#322a91"/>
<path d="M1185.6,780.2L1228,761.9L1228.8,762.5z" fill="#31298e"/>
<path d="M1185.6,780.2L1228.7,762.4L1229.5,763.5z" fill="#2f2889"/>
<path d="M1185.6,780.2L1229.4,763.4L1230.2,765z" fill="#2d2683"/>
<path d="M1185.6,780.2L1230.1,764.8L1230.8,766.9z" fill="#2b247b"/>
<path d="M1185.6,780.2L1230.8,766.7L1231.4,769.1z" fill="#282274"/>
<path d="M1185.6,780.2L1231.4,768.9L1231.9,771.7z" fill="#26206d"/>
<path d="M1185.6,780.2L1231.8,771.4L1232.3,774.3z" fill="#241e68"/>
<path d="M1185.6,780.2L1232.2,774L1232.5,777.1z" fill="#231d66"/>
<path d="M1185.6,780.2L1232.5,776.8L1232.6,779.9z" fill="#231d66"/>
<path d="M1185.6,780.2L1232.6,779.6L1232.6,782.6z" fill="#241e68"/>
<path d="M1185.6,780.2L1232.6,782.3L1232.5,785.1z" fill="#26206d"/>
<path d="M1185.6,780.2L1232.5,784.9L1232.2,787.3z" fill="#282274"/>
<path d="M1185.6,780.2L1232.3,787.1L1231.9,789.2z" fill="#2a247b"/>
<path d="M1185.6,780.2L1231.9,789L1231.4,790.7z" fill="#2d2683"/>
<path d="M1185.6,780.2L1231.4,790.6L1230.8,791.7z" fill="#2f2889"/>
<path d="M1185.6,780.2L1230.9,791.6L1230.1,792.2z" fill="#31298e"/>
<path d="M1185.6,780.2L1230.2,792.2L1229.5,792.3z" fill="#322a91"/>
<path d="M1229.4,784.2L1242.5,786.2" stroke="#f4ee10" stroke-width="1.8" fill="none"/>
<path d="M1194.4,794.6L1255.2,783.8L1256.8,784.1z" fill="#608957"/>
<path d="M1194.4,794.6L1256.7,784L1257.9,785.4z" fill="#65905c"/>
<path d="M1194.4,794.6L1257.8,785.2L1258.7,787.6z" fill="#699760"/>
<path d="M1194.4,794.6L1258.7,787.3L1259.1,790.6z" fill="#6d9c63"/>
<path d="M1194.4,794.6L1259.1,790.2L1259.1,794.3z" fill="#6f9f65"/>
<path d="M1194.4,794.6L1259.1,793.9L1258.7,798.7z" fill="#70a066"/>
<path d="M1194.4,794.6L1258.8,798.2L1257.9,803.5z" fill="#6f9f65"/>
<path d="M1194.4,794.6L1258,803L1256.8,808.5z" fill="#6c9b63"/>
<path d="M1194.4,794.6L1256.9,808L1255.4,813.7z" fill="#69955f"/>
<path d="M1194.4,794.6L1255.5,813.2L1253.6,818.7z" fill="#648f5b"/>
<path d="M1194.4,794.6L1253.8,818.2L1251.7,823.5z" fill="#5f8857"/>
<path d="M1194.4,794.6L1251.9,823L1249.7,827.8z" fill="#5b8152"/>
<path d="M1194.4,794.6L1249.9,827.4L1247.6,831.5z" fill="#577c4f"/>
<path d="M1194.4,794.6L1247.8,831.1L1245.5,834.5z" fill="#55794d"/>
<path d="M1194.4,794.6L1245.7,834.2L1243.5,836.6z" fill="#54784d"/>
<path d="M1194.4,794.6L1243.7,836.4L1241.7,837.8z" fill="#55794d"/>
<path d="M1194.4,794.6L1241.9,837.7L1240.1,838z" fill="#587d50"/>
<path d="M1194.4,794.6L1240.3,838L1238.9,837.4z" fill="#5b8353"/>
<ellipse cx="1248.1" cy="810.9" rx="7.8" ry="28.2" transform="rotate(-163.1 1248.1 810.9)" fill="#7db474"/>
<path d="M1248.1,811.5L1264.4,817" stroke="#f4ee10" stroke-width="1.8" fill="none"/>
<path d="M1173.1,821.5L1184.5,809.9L1188.8,806.7z" fill="#f2ed19"/>
<path d="M1173.1,821.5L1188.4,806.8L1193.2,805z" fill="#f5f019"/>
<path d="M1173.1,821.5L1192.9,805.1L1197.9,804.7z" fill="#f4ef19"/>
<path d="M1173.1,821.5L1197.6,804.6L1202.5,805.7z" fill="#f0eb19"/>
<path d="M1173.1,821.5L1202.2,805.6L1206.6,808.1z" fill="#eae518"/>
<path d="M1173.1,821.5L1206.3,807.9L1210,811.7z" fill="#e1dd17"/>
<path d="M1173.1,821.5L1209.8,811.4L1212.4,816.1z" fill="#d8d416"/>
<path d="M1173.1,821.5L1212.3,815.7L1213.6,821.1z" fill="#cfcb15"/>
<path d="M1173.1,821.5L1213.6,820.7L1213.6,826.3z" fill="#c7c314"/>
<path d="M1173.1,821.5L1213.6,825.9L1212.3,831.3z" fill="#c2be14"/>
<path d="M1173.1,821.5L1212.5,830.9L1209.9,835.8z" fill="#bfbb14"/>
<path d="M1173.1,821.5L1210.1,835.5L1206.5,839.5z" fill="#c0bc14"/>
<path d="M1173.1,821.5L1206.8,839.2L1202.3,842z" fill="#c4c014"/>
<path d="M1173.1,821.5L1202.7,841.9L1197.8,843.3z" fill="#cac615"/>
<path d="M1173.1,821.5L1198.1,843.2L1193.1,843.1z" fill="#d3ce15"/>
<path d="M1173.1,821.5L1193.4,843.2L1188.6,841.6z" fill="#dcd716"/>
<path d="M1173.1,821.5L1188.9,841.8L1184.7,838.8z" fill="#e5e017"/>
<path d="M1173.1,821.5L1185,839.1L1181.8,835.3z" fill="#ede818"/>
<path d="M1128.8,847.8L1165.1,815.1L1165.7,815z" fill="#188284"/>
<path d="M1128.8,847.8L1165.6,815L1166.4,815.7z" fill="#187f81"/>
<path d="M1128.8,847.8L1166.3,815.6L1167.3,817z" fill="#177b7d"/>
<path d="M1128.8,847.8L1167.2,816.8L1168.4,818.9z" fill="#167577"/>
<path d="M1128.8,847.8L1168.3,818.7L1169.5,821.3z" fill="#146f70"/>
<path d="M1128.8,847.8L1169.4,821L1170.7,824.2z" fill="#136869"/>
<path d="M1128.8,847.8L1170.6,823.9L1171.9,827.4z" fill="#126263"/>
<path d="M1128.8,847.8L1171.8,827.1L1173.1,830.9z" fill="#115e5f"/>
<path d="M1128.8,847.8L1173,830.5L1174.2,834.5z" fill="#115b5d"/>
<path d="M1128.8,847.8L1174.1,834.1L1175.3,838.2z" fill="#115b5d"/>
<path d="M1128.8,847.8L1175.2,837.8L1176.2,841.7z" fill="#115e5f"/>
<path d="M1128.8,847.8L1176.1,841.3L1176.9,845z" fill="#126263"/>
<path d="M1128.8,847.8L1176.8,844.7L1177.4,848z" fill="#136869"/>
<path d="M1128.8,847.8L1177.4,847.7L1177.8,850.5z" fill="#146e70"/>
<path d="M1128.8,847.8L1177.8,850.3L1177.9,852.6z" fill="#167577"/>
<path d="M1128.8,847.8L1177.9,852.4L1177.8,854z" fill="#177b7d"/>
<path d="M1128.8,847.8L1177.8,853.9L1177.5,854.8z" fill="#187f81"/>
<path d="M1128.8,847.8L1177.5,854.8L1177,855z" fill="#188284"/>
<path d="M1175,844.9L1179.8,844.9" stroke="#f4ee10" stroke-width="1.8" fill="none"/>
<path d="M1149,820L1202.8,890.3L1203.1,891.9z" fill="#1399ac"/>
<path d="M1149,820L1203.2,891.7L1202.1,893.6z" fill="#1293a4"/>
<path d="M1149,820L1202.2,893.4L1199.8,895.5z" fill="#118b9c"/>
<path d="M1149,820L1200.1,895.3L1196.3,897.5z" fill="#108595"/>
<path d="M1149,820L1196.7,897.3L1191.8,899.6z" fill="#0f808f"/>
<path d="M1149,820L1192.4,899.4L1186.4,901.6z" fill="#0f7d8c"/>
<path d="M1149,820L1187.1,901.4L1180.4,903.6z" fill="#0f7c8b"/>
<path d="M1149,820L1181,903.4L1173.8,905.4z" fill="#0f7e8d"/>
<path d="M1149,820L1174.5,905.2L1166.9,907z" fill="#108291"/>
<path d="M1149,820L1167.7,906.8L1160.1,908.3z" fill="#108798"/>
<path d="M1149,820L1160.8,908.2L1153.4,909.3z" fill="#118e9f"/>
<path d="M1149,820L1154.1,909.2L1147.2,909.9z" fill="#1295a7"/>
<path d="M1149,820L1147.8,909.9L1141.6,910.2z" fill="#139caf"/>
<path d="M1149,820L1142.1,910.2L1136.8,910.1z" fill="#14a1b5"/>
<path d="M1149,820L1137.3,910.1L1133.1,909.6z" fill="#14a4b8"/>
<path d="M1149,820L1133.4,909.6L1130.4,908.7z" fill="#14a5b9"/>
<path d="M1149,820L1130.7,908.8L1129,907.5z" fill="#14a3b7"/>
<path d="M1149,820L1129.1,907.6L1128.9,906.2z" fill="#139fb3"/>
<path d="M1148.5,819L1149.5,820.5" stroke="#f4ee10" stroke-width="1.8" fill="none"/>
<path d="M1184.5,978.5L1195.6,929L1197.2,924.5z" fill="#0d70a5"/>
<path d="M1184.5,978.5L1197.1,924.9L1199.8,921z" fill="#0d72a8"/>
<path d="M1184.5,978.5L1199.5,921.3L1203.1,918.2z" fill="#0d75ac"/>
<path d="M1184.5,978.5L1202.8,918.4L1207.2,916.3z" fill="#0e79b2"/>
<path d="M1184.5,978.5L1206.8,916.4L1211.7,915.3z" fill="#0e7eb9"/>
<path d="M1184.5,978.5L1211.3,915.4L1216.5,915.4z" fill="#0f83c0"/>
<path d="M1184.5,978.5L1216.1,915.3L1221.3,916.5z" fill="#0f87c7"/>
<path d="M1184.5,978.5L1220.9,916.3L1226,918.5z" fill="#108acb"/>
<path d="M1184.5,978.5L1225.6,918.3L1230.3,921.4z" fill="#108cce"/>
<path d="M1184.5,978.5L1229.9,921.1L1233.9,925z" fill="#108cce"/>
<path d="M1184.5,978.5L1233.6,924.6L1236.8,929.1z" fill="#108acb"/>
<path d="M1184.5,978.5L1236.6,928.7L1238.8,933.6z" fill="#0f87c7"/>
<path d="M1184.5,978.5L1238.7,933.2L1239.8,938.3z" fill="#0f83c0"/>
<path d="M1184.5,978.5L1239.7,937.9L1239.7,942.9z" fill="#0e7eb9"/>
<path d="M1184.5,978.5L1239.8,942.5L1238.6,947.2z" fill="#0e79b2"/>
<path d="M1184.5,978.5L1238.7,946.8L1236.5,951z" fill="#0d75ac"/>
<path d="M1184.5,978.5L1236.7,950.7L1233.5,954.1z" fill="#0d72a8"/>
<path d="M1184.5,978.5L1233.8,953.9L1230.1,956.3z" fill="#0d70a5"/>
<ellipse cx="1217.5" cy="936.8" rx="20" ry="23.8" transform="rotate(128.3 1217.5 936.8)" fill="#1088c8"/>
<path d="M1217.5,935L1226,923" stroke="#f4ee10" stroke-width="1.8" fill="none"/>
<path d="M1243.8,966.8L1243.5,966.3L1253.4,962.7z" fill="#9f7c24"/>
<path d="M1243.8,966.8L1252.9,962.8L1262.8,962.5z" fill="#a98426"/>
<path d="M1243.8,966.8L1262.3,962.5L1270.5,965.4z" fill="#b58e29"/>
<path d="M1243.8,966.8L1270.2,965.2L1275.6,971z" fill="#c2982c"/>
<path d="M1243.8,966.8L1275.4,970.7L1277.1,978.4z" fill="#cc9f2e"/>
<path d="M1243.8,966.8L1277.1,978L1274.9,986.5z" fill="#d2a430"/>
<path d="M1243.8,966.8L1275.1,986.1L1269.2,994.1z" fill="#d4a630"/>
<path d="M1243.8,966.8L1269.6,993.7L1261,1000z" fill="#d1a42f"/>
<path d="M1243.8,966.8L1261.5,999.7L1251.6,1003.3z" fill="#ca9e2e"/>
<path d="M1243.8,966.8L1252.1,1003.2L1242.2,1003.5z" fill="#bf962b"/>
<path d="M1243.8,966.8L1242.7,1003.5L1234.5,1000.6z" fill="#b38c29"/>
<path d="M1243.8,966.8L1234.8,1000.8L1229.4,995z" fill="#a78326"/>
<path d="M1243.8,966.8L1229.6,995.3L1227.9,987.6z" fill="#9d7b24"/>
<path d="M1243.8,966.8L1227.9,988L1230.1,979.5z" fill="#967622"/>
<path d="M1243.8,966.8L1229.9,979.9L1235.8,971.9z" fill="#947422"/>
<path d="M1243.8,966.8L1235.4,972.3L1243.5,966.3z" fill="#977622"/>
<path d="M1225,959L1301.2,922L1301.6,922.4z" fill="#0c8ab3"/>
<path d="M1225,959L1301.6,922.3L1302.1,923.8z" fill="#0c86af"/>
<path d="M1225,959L1302,923.6L1302.6,926.1z" fill="#0b80a6"/>
<path d="M1225,959L1302.5,925.8L1303.1,929.1z" fill="#0a779b"/>
<path d="M1225,959L1303.1,928.8L1303.7,933z" fill="#096d8e"/>
<path d="M1225,959L1303.6,932.5L1304.3,937.4z" fill="#096381"/>
<path d="M1225,959L1304.2,936.9L1304.8,942.3z" fill="#085a76"/>
<path d="M1225,959L1304.7,941.8L1305.3,947.6z" fill="#07546d"/>
<path d="M1225,959L1305.3,947L1305.8,952.9z" fill="#075069"/>
<path d="M1225,959L1305.7,952.3L1306.2,958.3z" fill="#075069"/>
<path d="M1225,959L1306.2,957.7L1306.5,963.5z" fill="#07546d"/>
<path d="M1225,959L1306.5,962.9L1306.8,968.4z" fill="#085a76"/>
<path d="M1225,959L1306.7,967.8L1306.9,972.7z" fill="#096381"/>
<path d="M1225,959L1306.9,972.2L1307,976.4z" fill="#096d8e"/>
<path d="M1225,959L1307,976L1306.9,979.4z" fill="#0a779b"/>
<path d="M1225,959L1306.9,979.1L1306.8,981.5z" fill="#0b80a6"/>
<path d="M1225,959L1306.8,981.3L1306.5,982.7z" fill="#0c86af"/>
<path d="M1225,959L1306.5,982.6L1306.2,983z" fill="#0c8ab3"/>
<path d="M1303.8,951.8L1331,950.5" stroke="#f4ee10" stroke-width="1.8" fill="none"/>
<path d="M1166,894L1208.2,936.7L1208,937.3z" fill="#209490"/>
<path d="M1166,894L1208.1,937.2L1206.5,938z" fill="#1e8c88"/>
<path d="M1166,894L1206.7,937.9L1203.8,938.7z" fill="#1c8481"/>
<path d="M1166,894L1204.2,938.6L1200,939.5z" fill="#1b7e7b"/>
<path d="M1166,894L1200.5,939.5L1195.3,940.4z" fill="#1a7a77"/>
<path d="M1166,894L1195.8,940.3L1189.7,941.2z" fill="#1a7976"/>
<path d="M1166,894L1190.4,941.2L1183.5,942.1z" fill="#1a7b78"/>
<path d="M1166,894L1184.2,942L1176.9,942.9z" fill="#1b7f7c"/>
<path d="M1166,894L1177.6,942.8L1170,943.6z" fill="#1d8582"/>
<path d="M1166,894L1170.8,943.5L1163.2,944.2z" fill="#1e8d8a"/>
<path d="M1166,894L1164,944.1L1156.6,944.6z" fill="#209592"/>
<path d="M1166,894L1157.3,944.6L1150.5,945z" fill="#229d99"/>
<path d="M1166,894L1151.1,945L1145,945.2z" fill="#23a39f"/>
<path d="M1166,894L1145.6,945.2L1140.4,945.2z" fill="#24a7a3"/>
<path d="M1166,894L1140.9,945.2L1136.7,945.1z" fill="#24a8a4"/>
<path d="M1166,894L1137.1,945.1L1134.2,944.8z" fill="#24a6a2"/>
<path d="M1166,894L1134.4,944.9L1132.9,944.4z" fill="#23a29e"/>
<path d="M1166,894L1133,944.5L1132.7,944z" fill="#219c98"/>
<path d="M1172.5,944.2L1172.5,951.8" stroke="#f4ee10" stroke-width="1.8" fill="none"/>
<path d="M1210,1022.2L1233.8,995.2L1236.8,992.6z" fill="#dbd614"/>
<path d="M1210,1022.2L1236.5,992.8L1239.9,991.1z" fill="#e2dc15"/>
<path d="M1210,1022.2L1239.6,991.2L1243.4,990.3z" fill="#e8e215"/>
<path d="M1210,1022.2L1243.1,990.3L1247,990.4z" fill="#ece616"/>
<path d="M1210,1022.2L1246.7,990.4L1250.6,991.4z" fill="#efe916"/>
<path d="M1210,1022.2L1250.3,991.3L1253.9,993.2z" fill="#f0ea16"/>
<path d="M1210,1022.2L1253.6,993L1256.8,995.8z" fill="#efe916"/>
<path d="M1210,1022.2L1256.6,995.5L1259.2,998.9z" fill="#ebe516"/>
<path d="M1210,1022.2L1259.1,998.6L1261,1002.4z" fill="#e6e115"/>
<path d="M1210,1022.2L1260.9,1002.1L1262,1006.3z" fill="#e1db15"/>
<path d="M1210,1022.2L1262,1005.9L1262.3,1010.2z" fill="#dad514"/>
<path d="M1210,1022.2L1262.3,1009.9L1261.7,1014z" fill="#d4cf13"/>
<path d="M1210,1022.2L1261.8,1013.7L1260.4,1017.6z" fill="#d0cb13"/>
<path d="M1210,1022.2L1260.5,1017.3L1258.3,1020.6z" fill="#cdc813"/>
<path d="M1210,1022.2L1258.6,1020.4L1255.7,1023.1z" fill="#ccc713"/>
<path d="M1210,1022.2L1256,1022.9L1252.6,1024.7z" fill="#cdc813"/>
<path d="M1210,1022.2L1252.9,1024.6L1249.2,1025.6z" fill="#d1cb13"/>
<path d="M1210,1022.2L1249.5,1025.6L1245.9,1025.7z" fill="#d6d014"/>
<ellipse cx="1246" cy="1008" rx="16" ry="18" transform="rotate(158.4 1246 1008)" fill="#f0ea16"/>
<path d="M1249.5,941.8L1239.7,845.4L1240.2,844.9z" fill="#1064c3"/>
<path d="M1249.5,941.8L1240.1,844.9L1241.4,844.6z" fill="#1062c0"/>
<path d="M1249.5,941.8L1241.3,844.6L1243.5,844.4z" fill="#0f60ba"/>
<path d="M1249.5,941.8L1243.2,844.4L1246.2,844.5z" fill="#0f5cb3"/>
<path d="M1249.5,941.8L1245.9,844.5L1249.6,844.7z" fill="#1059ab"/>
<path d="M1249.5,941.8L1249.2,844.7L1253.5,845.1z" fill="#1d5ea7"/>
<path d="M1249.5,941.8L1253.1,845.1L1257.8,845.7z" fill="#4878af"/>
<path d="M1249.5,941.8L1257.3,845.6L1262.4,846.3z" fill="#6c8fb9"/>
<path d="M1249.5,941.8L1261.9,846.3L1267.1,847.1z" fill="#4e79ac"/>
<path d="M1249.5,941.8L1266.5,847L1271.7,848z" fill="#1f599a"/>
<path d="M1249.5,941.8L1271.2,847.9L1276.1,849z" fill="#0f4e96"/>
<path d="M1249.5,941.8L1275.7,848.9L1280.3,850z" fill="#0d509b"/>
<path d="M1249.5,941.8L1279.8,849.9L1284,851z" fill="#0d53a2"/>
<path d="M1249.5,941.8L1283.6,850.9L1287.1,851.9z" fill="#0e58ab"/>
<path d="M1249.5,941.8L1286.8,851.8L1289.5,852.8z" fill="#0f5cb3"/>
<path d="M1249.5,941.8L1289.3,852.7L1291.2,853.6z" fill="#0f60ba"/>
<path d="M1249.5,941.8L1291.1,853.5L1292.1,854.3z" fill="#1062c0"/>
<path d="M1249.5,941.8L1292.1,854.2L1292.2,854.8z" fill="#1064c3"/>
<path d="M1266.2,845.2L1270.9,824" stroke="#f4ee10" stroke-width="1.8" fill="none"/>
<path d="M1197.5,910.5L1294,885L1294.6,885.3z" fill="#6ca078"/>
<path d="M1197.5,910.5L1294.6,885.3L1295.2,886.4z" fill="#6a9d75"/>
<path d="M1197.5,910.5L1295.1,886.2L1295.7,888.2z" fill="#669771"/>
<path d="M1197.5,910.5L1295.6,888L1296.2,890.6z" fill="#618f6b"/>
<path d="M1197.5,910.5L1296.1,890.3L1296.6,893.7z" fill="#5b8665"/>
<path d="M1197.5,910.5L1296.5,893.3L1296.9,897.2z" fill="#557e5e"/>
<path d="M1197.5,910.5L1296.9,896.7L1297.2,901z" fill="#507658"/>
<path d="M1197.5,910.5L1297.2,900.6L1297.4,905.2z" fill="#4c7054"/>
<path d="M1197.5,910.5L1297.4,904.7L1297.5,909.4z" fill="#4a6d52"/>
<path d="M1197.5,910.5L1297.5,909L1297.5,913.7z" fill="#4a6d52"/>
<path d="M1197.5,910.5L1297.5,913.2L1297.4,917.8z" fill="#4c7054"/>
<path d="M1197.5,910.5L1297.4,917.3L1297.2,921.6z" fill="#507658"/>
<path d="M1197.5,910.5L1297.3,921.2L1297,925z" fill="#557e5e"/>
<path d="M1197.5,910.5L1297,924.6L1296.6,927.9z" fill="#5b8665"/>
<path d="M1197.5,910.5L1296.7,927.6L1296.2,930.2z" fill="#618f6b"/>
<path d="M1197.5,910.5L1296.3,930L1295.8,931.9z" fill="#669771"/>
<path d="M1197.5,910.5L1295.8,931.7L1295.2,932.8z" fill="#6a9d75"/>
<path d="M1197.5,910.5L1295.3,932.7L1294.8,933z" fill="#6ca078"/>
<path d="M1297.5,908.8L1321,908.8" stroke="#f4ee10" stroke-width="1.8" fill="none"/>
<path d="M1140,886.2L1229.3,862.1L1230.8,862.2z" fill="#ac9b4e"/>
<path d="M1140,886.2L1230.7,862.1L1232.2,863.1z" fill="#a8974c"/>
<path d="M1140,886.2L1232,863L1233.5,864.8z" fill="#a19149"/>
<path d="M1140,886.2L1233.3,864.6L1234.6,867.2z" fill="#988945"/>
<path d="M1140,886.2L1234.5,866.9L1235.6,870.2z" fill="#8e8040"/>
<path d="M1140,886.2L1235.5,869.9L1236.4,873.8z" fill="#84773c"/>
<path d="M1140,886.2L1236.4,873.4L1237,877.8z" fill="#7b6e38"/>
<path d="M1140,886.2L1237,877.4L1237.4,882.1z" fill="#746835"/>
<path d="M1140,886.2L1237.4,881.6L1237.5,886.5z" fill="#706533"/>
<path d="M1140,886.2L1237.5,886L1237.4,890.8z" fill="#706533"/>
<path d="M1140,886.2L1237.4,890.4L1237,895.1z" fill="#746835"/>
<path d="M1140,886.2L1237,894.6L1236.3,899z" fill="#7b6e38"/>
<path d="M1140,886.2L1236.4,898.6L1235.5,902.4z" fill="#84773c"/>
<path d="M1140,886.2L1235.6,902.1L1234.5,905.4z" fill="#8e8040"/>
<path d="M1140,886.2L1234.6,905.1L1233.3,907.6z" fill="#988945"/>
<path d="M1140,886.2L1233.4,907.4L1232,909.2z" fill="#a19149"/>
<path d="M1140,886.2L1232.2,909L1230.7,909.9z" fill="#a8974c"/>
<path d="M1140,886.2L1230.8,909.9L1229.4,909.9z" fill="#ac9b4e"/>
<ellipse cx="1230" cy="886" rx="7.5" ry="24" transform="rotate(179.8 1230 886)" fill="#a29249"/>
<path d="M1231.9,888.6L1259.6,888.6" stroke="#f4ee10" stroke-width="1.8" fill="none"/>
<path d="M1139,886L1141,886" stroke="#f4ee10" stroke-width="1.8" fill="none"/>
<path d="M1136.2,1050.5L1185.4,1025.5L1187.7,1025z" fill="#499875"/>
<path d="M1136.2,1050.5L1187.5,1025L1189.8,1025.7z" fill="#4c9e7a"/>
<path d="M1136.2,1050.5L1189.6,1025.6L1191.6,1027.5z" fill="#4ea47e"/>
<path d="M1136.2,1050.5L1191.5,1027.3L1193.3,1030.2z" fill="#50a881"/>
<path d="M1136.2,1050.5L1193.2,1029.9L1194.7,1033.9z" fill="#52ab83"/>
<path d="M1136.2,1050.5L1194.6,1033.5L1195.8,1038.3z" fill="#52ac84"/>
<path d="M1136.2,1050.5L1195.7,1037.8L1196.5,1043.2z" fill="#51ab83"/>
<path d="M1136.2,1050.5L1196.5,1042.7L1196.8,1048.6z" fill="#50a881"/>
<path d="M1136.2,1050.5L1196.8,1048L1196.7,1054.1z" fill="#4ea37d"/>
<path d="M1136.2,1050.5L1196.7,1053.5L1196.2,1059.6z" fill="#4b9d79"/>
<path d="M1136.2,1050.5L1196.3,1059L1195.3,1064.8z" fill="#489774"/>
<path d="M1136.2,1050.5L1195.4,1064.3L1194,1069.5z" fill="#459270"/>
<path d="M1136.2,1050.5L1194.2,1069.1L1192.5,1073.7z" fill="#438d6c"/>
<path d="M1136.2,1050.5L1192.6,1073.3L1190.6,1077z" fill="#428a6a"/>
<path d="M1136.2,1050.5L1190.8,1076.7L1188.7,1079.3z" fill="#428a6a"/>
<path d="M1136.2,1050.5L1188.9,1079.1L1186.6,1080.7z" fill="#428b6b"/>
<path d="M1136.2,1050.5L1186.8,1080.6L1184.5,1080.9z" fill="#448e6d"/>
<path d="M1136.2,1050.5L1184.7,1081L1182.7,1080.2z" fill="#469371"/>
<ellipse cx="1186.2" cy="1053" rx="10.5" ry="28" transform="rotate(-177.1 1186.2 1053)" fill="#448f6e"/>
<path d="M1186.2,1052.5L1200.8,1053.8" stroke="#f4ee10" stroke-width="1.8" fill="none"/>
<path d="M1296.2,1106.2L1333,1088.1L1335,1087.6z" fill="#332989"/>
<path d="M1296.2,1106.2L1334.8,1087.6L1336.7,1088.2z" fill="#352a8f"/>
<path d="M1296.2,1106.2L1336.5,1088.1L1338.2,1089.7z" fill="#372c94"/>
<path d="M1296.2,1106.2L1338.1,1089.5L1339.5,1092z" fill="#392d98"/>
<path d="M1296.2,1106.2L1339.4,1091.7L1340.5,1095.1z" fill="#3a2e9a"/>
<path d="M1296.2,1106.2L1340.5,1094.7L1341.2,1098.7z" fill="#3a2e9b"/>
<path d="M1296.2,1106.2L1341.2,1098.4L1341.6,1102.9z" fill="#3a2e9a"/>
<path d="M1296.2,1106.2L1341.5,1102.5L1341.5,1107.4z" fill="#392d97"/>
<path d="M1296.2,1106.2L1341.6,1106.9L1341.1,1112z" fill="#372c93"/>
<path d="M1296.2,1106.2L1341.2,1111.5L1340.4,1116.5z" fill="#352a8e"/>
<path d="M1296.2,1106.2L1340.5,1116.1L1339.3,1120.8z" fill="#332888"/>
<path d="M1296.2,1106.2L1339.4,1120.4L1338,1124.7z" fill="#312783"/>
<path d="M1296.2,1106.2L1338.1,1124.3L1336.4,1128z" fill="#30267f"/>
<path d="M1296.2,1106.2L1336.6,1127.7L1334.7,1130.6z" fill="#2f257d"/>
<path d="M1296.2,1106.2L1334.9,1130.4L1332.9,1132.4z" fill="#2e257c"/>
<path d="M1296.2,1106.2L1333.1,1132.2L1331.1,1133.3z" fill="#2f257d"/>
<path d="M1296.2,1106.2L1331.2,1133.2L1329.3,1133.2z" fill="#302680"/>
<path d="M1296.2,1106.2L1329.5,1133.3L1327.8,1132.4z" fill="#312784"/>
<ellipse cx="1332.5" cy="1110.5" rx="8.8" ry="23" transform="rotate(-173.3 1332.5 1110.5)" fill="#2d2479"/>
<path d="M1332.5,1111L1342.5,1112.2" stroke="#f4ee10" stroke-width="1.8" fill="none"/>
<path d="M1190,1113.5L1250,1122.6L1255,1124.1z" fill="#9c9855"/>
<path d="M1190,1113.5L1254.5,1123.9L1258.9,1126.6z" fill="#a29e58"/>
<path d="M1190,1113.5L1258.6,1126.3L1262.2,1130.1z" fill="#a8a45b"/>
<path d="M1190,1113.5L1261.9,1129.7L1264.5,1134.4z" fill="#aca85e"/>
<path d="M1190,1113.5L1264.3,1134L1265.8,1139.3z" fill="#afab60"/>
<path d="M1190,1113.5L1265.7,1138.9L1266.1,1144.7z" fill="#b0ac60"/>
<path d="M1190,1113.5L1266.1,1144.1L1265.3,1150.1z" fill="#afab5f"/>
<path d="M1190,1113.5L1265.4,1149.6L1263.4,1155.5z" fill="#aba85e"/>
<path d="M1190,1113.5L1263.6,1155L1260.6,1160.5z" fill="#a7a35b"/>
<path d="M1190,1113.5L1260.9,1160.1L1256.9,1165z" fill="#a19d58"/>
<path d="M1190,1113.5L1257.3,1164.6L1252.6,1168.7z" fill="#9b9754"/>
<path d="M1190,1113.5L1253.1,1168.4L1247.9,1171.4z" fill="#959251"/>
<path d="M1190,1113.5L1248.3,1171.2L1242.9,1173.1z" fill="#918d4f"/>
<path d="M1190,1113.5L1243.3,1173L1237.8,1173.6z" fill="#8e8a4d"/>
<path d="M1190,1113.5L1238.3,1173.6L1233,1172.9z" fill="#8d8a4d"/>
<path d="M1190,1113.5L1233.4,1173.1L1228.6,1171.1z" fill="#8e8b4d"/>
<path d="M1190,1113.5L1229,1171.4L1224.9,1168.3z" fill="#918e4f"/>
<path d="M1190,1113.5L1225.2,1168.6L1222.2,1164.9z" fill="#969352"/>
<ellipse cx="1242.5" cy="1148" rx="22" ry="27" transform="rotate(-146.7 1242.5 1148)" fill="#828241"/>
<path d="M1243,1148L1258.8,1158" stroke="#f4ee10" stroke-width="1.8" fill="none"/>
<path d="M1341.2,932.2L1393.6,909.2L1394.1,909.5z" fill="#dfae37"/>
<path d="M1341.2,932.2L1394.1,909.4L1394.5,910.7z" fill="#e2b038"/>
<path d="M1341.2,932.2L1394.5,910.5L1394.8,912.8z" fill="#e1af38"/>
<path d="M1341.2,932.2L1394.8,912.6L1395,915.7z" fill="#ddac37"/>
<path d="M1341.2,932.2L1395,915.4L1395,919.4z" fill="#d5a635"/>
<path d="M1341.2,932.2L1395,918.9L1394.8,923.6z" fill="#cb9e32"/>
<path d="M1341.2,932.2L1394.9,923.1L1394.6,928.3z" fill="#c09630"/>
<path d="M1341.2,932.2L1394.6,927.7L1394.2,933.3z" fill="#b58d2d"/>
<path d="M1341.2,932.2L1394.2,932.7L1393.7,938.4z" fill="#ac862b"/>
<path d="M1341.2,932.2L1393.7,937.8L1393.1,943.5z" fill="#a68129"/>
<path d="M1341.2,932.2L1393.1,942.9L1392.4,948.4z" fill="#a37f28"/>
<path d="M1341.2,932.2L1392.5,947.8L1391.7,952.9z" fill="#a47f29"/>
<path d="M1341.2,932.2L1391.7,952.4L1390.9,956.9z" fill="#a8832a"/>
<path d="M1341.2,932.2L1391,956.5L1390.1,960.3z" fill="#b0892c"/>
<path d="M1341.2,932.2L1390.2,960L1389.4,963z" fill="#ba912e"/>
<path d="M1341.2,932.2L1389.5,962.7L1388.7,964.8z" fill="#c59931"/>
<path d="M1341.2,932.2L1388.8,964.7L1388.1,965.7z" fill="#cfa133"/>
<path d="M1341.2,932.2L1388.1,965.7L1387.6,965.8z" fill="#d8a836"/>
<path d="M1391.8,937.5L1416.2,930.5L1424.2,929.5z" fill="#dcd616"/>
<path d="M1391.8,937.5L1423.7,929.5L1431.5,930.6z" fill="#ddd816"/>
<path d="M1391.8,937.5L1431,930.4L1438.2,933.6z" fill="#e0da16"/>
<path d="M1391.8,937.5L1437.8,933.3L1443.8,938.4z" fill="#e4de16"/>
<path d="M1391.8,937.5L1443.4,938L1447.8,944.6z" fill="#e8e217"/>
<path d="M1391.8,937.5L1447.6,944.1L1450.1,951.8z" fill="#ece617"/>
<path d="M1391.8,937.5L1450,951.2L1450.3,959.4z" fill="#f0ea18"/>
<path d="M1391.8,937.5L1450.4,958.8L1448.6,966.9z" fill="#f2ec18"/>
<path d="M1391.8,937.5L1448.8,966.3L1445.1,973.7z" fill="#f4ee18"/>
<path d="M1391.8,937.5L1445.4,973.3L1439.9,979.5z" fill="#f4ee18"/>
<path d="M1391.8,937.5L1440.3,979.1L1433.5,983.7z" fill="#f2ec18"/>
<path d="M1391.8,937.5L1434,983.4L1426.3,986.1z" fill="#f0ea18"/>
<path d="M1391.8,937.5L1426.8,986L1418.8,986.4z" fill="#ece617"/>
<path d="M1391.8,937.5L1419.3,986.5L1411.6,984.8z" fill="#e8e217"/>
<path d="M1391.8,937.5L1412.1,985L1405.2,981.2z" fill="#e4de16"/>
<path d="M1391.8,937.5L1405.6,981.6L1400,976z" fill="#e0da16"/>
<path d="M1391.8,937.5L1400.3,976.5L1396.4,969.5z" fill="#ddd816"/>
<path d="M1391.8,937.5L1396.6,970L1394.7,962.8z" fill="#dcd616"/>
<ellipse cx="1422.5" cy="958" rx="27.5" ry="29" transform="rotate(-146.3 1422.5 958)" fill="#96920e"/>
<path d="M1423,958L1433,965" stroke="#f4ee10" stroke-width="1.8" fill="none"/>
<path d="M1550,784L1516.7,805.9L1512.2,808z" fill="#32a48c"/>
<path d="M1550,784L1512.5,807.8L1507.9,808.5z" fill="#34aa91"/>
<path d="M1550,784L1508.2,808.5L1503.6,807.7z" fill="#36ae95"/>
<path d="M1550,784L1504,807.8L1499.6,805.6z" fill="#36b096"/>
<path d="M1550,784L1499.9,805.8L1496.1,802.3z" fill="#36af95"/>
<path d="M1550,784L1496.4,802.6L1493.2,797.9z" fill="#35ab92"/>
<path d="M1550,784L1493.4,798.4L1491.1,792.8z" fill="#33a68d"/>
<path d="M1550,784L1491.3,793.3L1490,787.2z" fill="#319f87"/>
<path d="M1550,784L1490,787.7L1489.8,781.3z" fill="#2e9781"/>
<path d="M1550,784L1489.8,781.8L1490.6,775.5z" fill="#2c907a"/>
<path d="M1550,784L1490.5,776L1492.3,770z" fill="#2a8a75"/>
<path d="M1550,784L1492.1,770.5L1494.9,765.2z" fill="#298672"/>
<path d="M1550,784L1494.6,765.6L1498.2,761.2z" fill="#298471"/>
<path d="M1550,784L1497.9,761.6L1502,758.4z" fill="#298571"/>
<path d="M1550,784L1501.7,758.6L1506.2,756.8z" fill="#2a8974"/>
<path d="M1550,784L1505.8,756.9L1510.5,756.6z" fill="#2c8e79"/>
<path d="M1550,784L1510.1,756.5L1514.7,757.6z" fill="#2e957f"/>
<path d="M1550,784L1514.4,757.5L1518.3,759.8z" fill="#309d86"/>
<path d="M1522.5,762L1515.6,774.6" stroke="#f4ee10" stroke-width="1.8" fill="none"/>
<path d="M1435,724L1493.9,743.8L1499,746.3z" fill="#087a92"/>
<path d="M1435,724L1498.6,746L1503,749.6z" fill="#087c94"/>
<path d="M1435,724L1502.7,749.3L1506.1,753.8z" fill="#087f98"/>
<path d="M1435,724L1505.9,753.3L1508.2,758.6z" fill="#09849e"/>
<path d="M1435,724L1508.1,758.1L1509.2,763.8z" fill="#0989a4"/>
<path d="M1435,724L1509.2,763.3L1509.1,769.2z" fill="#098eaa"/>
<path d="M1435,724L1509.1,768.7L1507.8,774.5z" fill="#0a93af"/>
<path d="M1435,724L1507.9,774.1L1505.4,779.6z" fill="#0a96b4"/>
<path d="M1435,724L1505.6,779.1L1502,784z" fill="#0a98b6"/>
<path d="M1435,724L1502.4,783.7L1497.8,787.8z" fill="#0a98b6"/>
<path d="M1435,724L1498.3,787.5L1493,790.6z" fill="#0a96b4"/>
<path d="M1435,724L1493.5,790.3L1487.8,792.3z" fill="#0a93af"/>
<path d="M1435,724L1488.3,792.2L1482.5,792.9z" fill="#098eaa"/>
<path d="M1435,724L1483,792.9L1477.2,792.3z" fill="#0989a4"/>
<path d="M1435,724L1477.7,792.4L1472.3,790.6z" fill="#09849e"/>
<path d="M1435,724L1472.7,790.8L1467.9,787.8z" fill="#087f98"/>
<path d="M1435,724L1468.3,788.1L1464.3,784.1z" fill="#087c94"/>
<path d="M1435,724L1464.6,784.5L1461.8,780.1z" fill="#087a92"/>
<ellipse cx="1484.4" cy="767.8" rx="24" ry="26" transform="rotate(-138.5 1484.4 767.8)" fill="#08748a"/>
<path d="M1484.4,767.5L1499.4,781.2" stroke="#f4ee10" stroke-width="1.8" fill="none"/>
<path d="M1434.5,723L1435.5,724.5" stroke="#f4ee10" stroke-width="1.8" fill="none"/>
<path d="M1421.5,795.9L1446.8,788.2L1454.2,787z" fill="#d8d314"/>
<path d="M1421.5,795.9L1453.7,787.1L1460.8,788z" fill="#dad414"/>
<path d="M1421.5,795.9L1460.3,787.8L1466.8,790.7z" fill="#dcd714"/>
<path d="M1421.5,795.9L1466.3,790.4L1471.6,795.1z" fill="#e0da15"/>
<path d="M1421.5,795.9L1471.3,794.7L1475.1,800.8z" fill="#e4de15"/>
<path d="M1421.5,795.9L1474.9,800.3L1477,807.4z" fill="#e8e215"/>
<path d="M1421.5,795.9L1476.9,806.9L1477.1,814.6z" fill="#ece616"/>
<path d="M1421.5,795.9L1477.2,814L1475.4,821.7z" fill="#eee816"/>
<path d="M1421.5,795.9L1475.6,821.2L1472.1,828.4z" fill="#f0ea16"/>
<path d="M1421.5,795.9L1472.4,827.9L1467.3,834.1z" fill="#f0ea16"/>
<path d="M1421.5,795.9L1467.8,833.7L1461.5,838.5z" fill="#eee816"/>
<path d="M1421.5,795.9L1462,838.2L1454.9,841.2z" fill="#ece616"/>
<path d="M1421.5,795.9L1455.4,841.1L1448.1,842.2z" fill="#e8e215"/>
<path d="M1421.5,795.9L1448.6,842.1L1441.5,841.2z" fill="#e4de15"/>
<path d="M1421.5,795.9L1442,841.3L1435.6,838.4z" fill="#e0da15"/>
<path d="M1421.5,795.9L1436,838.7L1430.7,834z" fill="#dcd714"/>
<path d="M1421.5,795.9L1431,834.4L1427.3,828.2z" fill="#dad414"/>
<path d="M1421.5,795.9L1427.5,828.7L1425.5,822.1z" fill="#d8d314"/>
<ellipse cx="1451.2" cy="814.6" rx="25" ry="28.5" transform="rotate(-147.8 1451.2 814.6)" fill="#b9b411"/>
<path d="M1450.6,814L1453,816" stroke="#f4ee10" stroke-width="1.8" fill="none"/>
<path d="M1491.9,894L1492.6,826.6L1493.1,825.7z" fill="#b08f26"/>
<path d="M1491.9,894L1493,825.8L1494.3,825.3z" fill="#a48523"/>
<path d="M1491.9,894L1494.1,825.3L1496.2,825.1z" fill="#9a7d22"/>
<path d="M1491.9,894L1495.9,825.1L1498.7,825.3z" fill="#967c2a"/>
<path d="M1491.9,894L1498.4,825.2L1501.8,825.8z" fill="#9b8541"/>
<path d="M1491.9,894L1501.4,825.7L1505.3,826.6z" fill="#a18e4f"/>
<path d="M1491.9,894L1504.9,826.5L1509.1,827.6z" fill="#a1893d"/>
<path d="M1491.9,894L1508.7,827.5L1513.2,829z" fill="#a5882a"/>
<path d="M1491.9,894L1512.7,828.8L1517.3,830.5z" fill="#b18f27"/>
<path d="M1491.9,894L1516.8,830.3L1521.3,832.2z" fill="#be9a29"/>
<path d="M1491.9,894L1520.9,832L1525.1,834z" fill="#cba42c"/>
<path d="M1491.9,894L1524.7,833.8L1528.6,835.8z" fill="#d5ad2e"/>
<path d="M1491.9,894L1528.2,835.6L1531.6,837.6z" fill="#dcb22f"/>
<path d="M1491.9,894L1531.3,837.4L1534.1,839.3z" fill="#deb430"/>
<path d="M1491.9,894L1533.8,839.1L1535.9,840.8z" fill="#dcb22f"/>
<path d="M1491.9,894L1535.7,840.7L1537,842.2z" fill="#d5ad2e"/>
<path d="M1491.9,894L1536.9,842.1L1537.4,843.3z" fill="#cba42c"/>
<path d="M1491.9,894L1537.4,843.2L1537.1,844.1z" fill="#be9a29"/>
<path d="M1515.6,828.4L1520.2,816.2" stroke="#f4ee10" stroke-width="1.8" fill="none"/>
<path d="M1431.9,827.8L1508,791L1508.3,791.6z" fill="#1e36a4"/>
<path d="M1431.9,827.8L1508.3,791.5L1508.5,793.4z" fill="#1d34a0"/>
<path d="M1431.9,827.8L1508.5,793.2L1508.7,796.4z" fill="#1c3298"/>
<path d="M1431.9,827.8L1508.7,796L1508.8,800.4z" fill="#1a2e8d"/>
<path d="M1431.9,827.8L1508.8,799.9L1508.8,805.3z" fill="#172a80"/>
<path d="M1431.9,827.8L1508.8,804.7L1508.8,811z" fill="#152673"/>
<path d="M1431.9,827.8L1508.8,810.3L1508.7,817.3z" fill="#132268"/>
<path d="M1431.9,827.8L1508.7,816.5L1508.6,824z" fill="#111f60"/>
<path d="M1431.9,827.8L1508.6,823.2L1508.4,830.8z" fill="#111e5b"/>
<path d="M1431.9,827.8L1508.4,830L1508.1,837.7z" fill="#111e5b"/>
<path d="M1431.9,827.8L1508.2,836.9L1507.9,844.3z" fill="#111f60"/>
<path d="M1431.9,827.8L1507.9,843.5L1507.6,850.4z" fill="#132268"/>
<path d="M1431.9,827.8L1507.6,849.8L1507.2,855.9z" fill="#152673"/>
<path d="M1431.9,827.8L1507.3,855.4L1506.9,860.7z" fill="#172a80"/>
<path d="M1431.9,827.8L1506.9,860.2L1506.6,864.4z" fill="#1a2e8d"/>
<path d="M1431.9,827.8L1506.6,864L1506.2,867.1z" fill="#1c3298"/>
<path d="M1431.9,827.8L1506.3,866.8L1505.9,868.6z" fill="#1d34a0"/>
<path d="M1431.9,827.8L1506,868.5L1505.7,869z" fill="#1e36a4"/>
<path d="M1507.8,831L1525.6,831" stroke="#f4ee10" stroke-width="1.8" fill="none"/>
<path d="M1553.8,892L1507.5,924.8L1506.9,924.6z" fill="#318a71"/>
<path d="M1553.8,892L1506.9,924.7L1506.2,923.5z" fill="#2e816a"/>
<path d="M1553.8,892L1506.3,923.7L1505.5,921.6z" fill="#2b7a64"/>
<path d="M1553.8,892L1505.6,921.8L1504.8,918.8z" fill="#29745f"/>
<path d="M1553.8,892L1504.9,919.1L1504.1,915.3z" fill="#28705c"/>
<path d="M1553.8,892L1504.1,915.7L1503.3,911.2z" fill="#276f5b"/>
<path d="M1553.8,892L1503.4,911.7L1502.6,906.6z" fill="#28705c"/>
<path d="M1553.8,892L1502.7,907.2L1502,901.8z" fill="#297560"/>
<path d="M1553.8,892L1502.1,902.3L1501.5,896.7z" fill="#2c7b65"/>
<path d="M1553.8,892L1501.5,897.3L1501,891.7z" fill="#2e836c"/>
<path d="M1553.8,892L1501.1,892.3L1500.7,886.9z" fill="#318b73"/>
<path d="M1553.8,892L1500.7,887.4L1500.5,882.4z" fill="#349379"/>
<path d="M1553.8,892L1500.5,882.8L1500.4,878.3z" fill="#36997e"/>
<path d="M1553.8,892L1500.4,878.8L1500.4,874.9z" fill="#389d81"/>
<path d="M1553.8,892L1500.4,875.3L1500.6,872.2z" fill="#389e82"/>
<path d="M1553.8,892L1500.6,872.5L1501,870.3z" fill="#379c81"/>
<path d="M1553.8,892L1500.9,870.5L1501.4,869.3z" fill="#36987d"/>
<path d="M1553.8,892L1501.3,869.4L1501.9,869.2z" fill="#349178"/>
<path d="M1530.6,909.4L1539.4,920.6" stroke="#f4ee10" stroke-width="1.8" fill="none"/>
<path d="M1375.6,831.5L1398.9,837.1L1406.3,840z" fill="#202c81"/>
<path d="M1375.6,831.5L1405.8,839.7L1411.7,844.3z" fill="#212d83"/>
<path d="M1375.6,831.5L1411.4,844L1415.5,850z" fill="#212e85"/>
<path d="M1375.6,831.5L1415.3,849.5L1417.2,856.5z" fill="#222f89"/>
<path d="M1375.6,831.5L1417.2,856L1416.9,863.4z" fill="#23308d"/>
<path d="M1375.6,831.5L1417,862.9L1414.4,870.2z" fill="#243190"/>
<path d="M1375.6,831.5L1414.6,869.8L1410,876.5z" fill="#253394"/>
<path d="M1375.6,831.5L1410.4,876L1404,881.6z" fill="#263396"/>
<path d="M1375.6,831.5L1404.5,881.3L1396.9,885.4z" fill="#263498"/>
<path d="M1375.6,831.5L1397.4,885.2L1389.1,887.4z" fill="#263498"/>
<path d="M1375.6,831.5L1389.7,887.3L1381.2,887.6z" fill="#263396"/>
<path d="M1375.6,831.5L1381.8,887.7L1373.8,886z" fill="#253394"/>
<path d="M1375.6,831.5L1374.3,886.1L1367.5,882.6z" fill="#243190"/>
<path d="M1375.6,831.5L1367.9,882.9L1362.6,877.7z" fill="#23308d"/>
<path d="M1375.6,831.5L1362.9,878.1L1359.6,871.6z" fill="#222f89"/>
<path d="M1375.6,831.5L1359.8,872.1L1358.7,864.9z" fill="#212e85"/>
<path d="M1375.6,831.5L1358.7,865.4L1359.8,857.9z" fill="#212d83"/>
<path d="M1375.6,831.5L1359.7,858.5L1362.8,851.8z" fill="#202c81"/>
<ellipse cx="1388" cy="862" rx="25" ry="30" transform="rotate(-112.1 1388 862)" fill="#212d84"/>
<path d="M1387.5,864L1391,872" stroke="#f4ee10" stroke-width="1.8" fill="none"/>
<path d="M1502.5,725L1531.2,657.3L1531.8,657z" fill="#26a8a2"/>
<path d="M1502.5,725L1531.7,657L1532.9,657.3z" fill="#25a59f"/>
<path d="M1502.5,725L1532.8,657.3L1534.6,658.1z" fill="#24a09b"/>
<path d="M1502.5,725L1534.4,658L1536.7,659.4z" fill="#239a95"/>
<path d="M1502.5,725L1536.4,659.2L1539.2,661.1z" fill="#21938e"/>
<path d="M1502.5,725L1538.9,660.9L1542,663.2z" fill="#238d88"/>
<path d="M1502.5,725L1541.6,663L1545,665.6z" fill="#338e8b"/>
<path d="M1502.5,725L1544.7,665.3L1548.2,668.3z" fill="#529999"/>
<path d="M1502.5,725L1547.8,668L1551.4,671.1z" fill="#569a9a"/>
<path d="M1502.5,725L1551,670.8L1554.5,673.9z" fill="#378b89"/>
<path d="M1502.5,725L1554.1,673.6L1557.4,676.8z" fill="#22837f"/>
<path d="M1502.5,725L1557.1,676.5L1560.1,679.5z" fill="#1f8681"/>
<path d="M1502.5,725L1559.8,679.2L1562.4,682z" fill="#208c87"/>
<path d="M1502.5,725L1562.1,681.7L1564.3,684.2z" fill="#21938e"/>
<path d="M1502.5,725L1564.1,684L1565.7,686.1z" fill="#239a95"/>
<path d="M1502.5,725L1565.5,685.9L1566.5,687.5z" fill="#24a09b"/>
<path d="M1502.5,725L1566.5,687.4L1566.8,688.5z" fill="#25a59f"/>
<path d="M1502.5,725L1566.8,688.4L1566.6,688.9z" fill="#26a8a2"/>
<path d="M1550,670L1562.5,657.5" stroke="#f4ee10" stroke-width="1.8" fill="none"/>
<path d="M1509.6,685L1586.2,692.2L1586.6,692.7z" fill="#1e7e74"/>
<path d="M1509.6,685L1586.6,692.6L1586.6,693.9z" fill="#1d7b72"/>
<path d="M1509.6,685L1586.6,693.7L1586.3,695.8z" fill="#1e7c72"/>
<path d="M1509.6,685L1586.4,695.6L1585.7,698.3z" fill="#1e8076"/>
<path d="M1509.6,685L1585.7,698L1584.7,701.3z" fill="#20867c"/>
<path d="M1509.6,685L1584.8,701L1583.5,704.8z" fill="#258f84"/>
<path d="M1509.6,685L1583.6,704.4L1582,708.6z" fill="#359d93"/>
<path d="M1509.6,685L1582.2,708.2L1580.3,712.6z" fill="#51ada6"/>
<path d="M1509.6,685L1580.5,712.2L1578.5,716.7z" fill="#56b4ad"/>
<path d="M1509.6,685L1578.7,716.2L1576.6,720.7z" fill="#3fb2a7"/>
<path d="M1509.6,685L1576.9,720.3L1574.7,724.6z" fill="#2eb1a3"/>
<path d="M1509.6,685L1575,724.1L1572.9,728.1z" fill="#2aafa1"/>
<path d="M1509.6,685L1573.1,727.7L1571.1,731.2z" fill="#29ab9e"/>
<path d="M1509.6,685L1571.3,730.9L1569.5,733.8z" fill="#27a598"/>
<path d="M1509.6,685L1569.7,733.6L1568.1,735.8z" fill="#259d90"/>
<path d="M1509.6,685L1568.2,735.6L1567,737.1z" fill="#239488"/>
<path d="M1509.6,685L1567.1,737L1566.1,737.8z" fill="#218b80"/>
<path d="M1509.6,685L1566.2,737.7L1565.6,737.7z" fill="#1f8379"/>
<path d="M1540.6,781.5L1530.5,783.5L1530.7,774.9z" fill="#d8d21a"/>
<path d="M1540.6,781.5L1530.6,775.3L1534.4,767.3z" fill="#e2dd1c"/>
<path d="M1540.6,781.5L1534.1,767.7L1540.9,761.5z" fill="#ece61d"/>
<path d="M1540.6,781.5L1540.5,761.7L1549.3,758.3z" fill="#f3ed1e"/>
<path d="M1540.6,781.5L1548.8,758.4L1558.2,758.3z" fill="#f6f01e"/>
<path d="M1540.6,781.5L1557.8,758.2L1566.4,761.5z" fill="#f5ef1e"/>
<path d="M1540.6,781.5L1566,761.2L1572.5,767.3z" fill="#f0ea1d"/>
<path d="M1540.6,781.5L1572.2,766.9L1575.6,774.9z" fill="#e8e21c"/>
<path d="M1540.6,781.5L1575.5,774.5L1575.3,783.1z" fill="#ded91b"/>
<path d="M1540.6,781.5L1575.4,782.7L1571.6,790.7z" fill="#d4ce1a"/>
<path d="M1540.6,781.5L1571.9,790.3L1565.1,796.5z" fill="#cac519"/>
<path d="M1540.6,781.5L1565.5,796.3L1556.7,799.7z" fill="#c3bf18"/>
<path d="M1540.6,781.5L1557.2,799.6L1547.8,799.7z" fill="#c0bb17"/>
<path d="M1540.6,781.5L1548.2,799.8L1539.6,796.5z" fill="#c1bc18"/>
<path d="M1540.6,781.5L1540,796.8L1533.5,790.7z" fill="#c6c118"/>
<path d="M1540.6,781.5L1533.8,791.1L1530.5,783.5z" fill="#cec919"/>
<path d="M1490.7,726L1575.3,729.6L1575.6,730z" fill="#0f4bd1"/>
<path d="M1490.7,726L1575.6,729.9L1575.7,730.9z" fill="#104dd7"/>
<path d="M1490.7,726L1575.7,730.7L1575.7,732.3z" fill="#104eda"/>
<path d="M1490.7,726L1575.7,732.1L1575.5,734.1z" fill="#104ed9"/>
<path d="M1490.7,726L1575.5,733.9L1575.2,736.4z" fill="#104cd4"/>
<path d="M1490.7,726L1575.2,736.1L1574.7,739z" fill="#0f49cc"/>
<path d="M1490.7,726L1574.7,738.7L1574.1,741.9z" fill="#0e45c1"/>
<path d="M1490.7,726L1574.1,741.6L1573.3,745z" fill="#0d41b6"/>
<path d="M1490.7,726L1573.4,744.6L1572.5,748.1z" fill="#0d3dab"/>
<path d="M1490.7,726L1572.6,747.7L1571.7,751.1z" fill="#0c3aa2"/>
<path d="M1490.7,726L1571.8,750.8L1570.8,754.1z" fill="#0b389b"/>
<path d="M1490.7,726L1570.9,753.8L1569.9,756.9z" fill="#0b3799"/>
<path d="M1490.7,726L1570,756.6L1569,759.3z" fill="#0b379a"/>
<path d="M1490.7,726L1569.1,759L1568.2,761.4z" fill="#0c399f"/>
<path d="M1490.7,726L1568.3,761.2L1567.5,763z" fill="#0c3ca7"/>
<path d="M1490.7,726L1567.6,762.8L1566.9,764.1z" fill="#0d3fb1"/>
<path d="M1490.7,726L1566.9,764L1566.3,764.7z" fill="#0e44bd"/>
<path d="M1490.7,726L1566.4,764.7L1566,764.8z" fill="#0f47c8"/>
<ellipse cx="1606" cy="727" rx="16" ry="25" transform="rotate(-25 1606 727)" fill="#193498"/>
<ellipse cx="1611" cy="742" rx="10" ry="6" transform="rotate(-25 1611 742)" fill="#2248c8"/>
<path d="M1544,746L1546.4,722.1L1548.6,713.4z" fill="#b09541"/>
<path d="M1544,746L1548.4,714L1552.8,706.4z" fill="#bb9f45"/>
<path d="M1544,746L1552.4,706.9L1558.7,701.1z" fill="#c5a749"/>
<path d="M1544,746L1558.3,701.4L1566,697.7z" fill="#cdae4c"/>
<path d="M1544,746L1565.4,697.9L1574,696.7z" fill="#d2b34d"/>
<path d="M1544,746L1573.4,696.7L1582.1,698z" fill="#d4b44e"/>
<path d="M1544,746L1581.6,697.8L1589.8,701.6z" fill="#d2b351"/>
<path d="M1544,746L1589.3,701.3L1596.5,707.2z" fill="#ccb362"/>
<path d="M1544,746L1596.1,706.7L1601.6,714.3z" fill="#c7b680"/>
<path d="M1544,746L1601.3,713.8L1604.8,722.5z" fill="#c0b17d"/>
<path d="M1544,746L1604.6,721.9L1605.7,731.1z" fill="#b39d59"/>
<path d="M1544,746L1605.7,730.5L1604.5,739.5z" fill="#a58d41"/>
<path d="M1544,746L1604.7,738.9L1601.1,747z" fill="#9b8439"/>
<path d="M1544,746L1601.4,746.5L1595.8,753z" fill="#967f37"/>
<path d="M1544,746L1596.2,752.7L1589,757.2z" fill="#947e37"/>
<path d="M1544,746L1589.5,757L1581.2,759.2z" fill="#978037"/>
<path d="M1544,746L1581.8,759.1L1573,758.8z" fill="#9d853a"/>
<path d="M1544,746L1573.6,758.9L1565.7,756.3z" fill="#a58c3d"/>
<path d="M1596.2,716.5L1601.9,709" stroke="#f4ee10" stroke-width="1.8" fill="none"/>
<path d="M1660,750L1663.7,746.2L1667.9,743.1z" fill="#376d55"/>
<path d="M1660,750L1667.6,743.3L1672.3,741.6z" fill="#3a735a"/>
<path d="M1660,750L1672,741.7L1676.8,741.6z" fill="#3e7b60"/>
<path d="M1660,750L1676.5,741.6L1680.9,743.1z" fill="#428266"/>
<path d="M1660,750L1680.6,742.9L1684.2,745.9z" fill="#45896b"/>
<path d="M1660,750L1684.1,745.7L1686.5,749.8z" fill="#488e6f"/>
<path d="M1660,750L1686.4,749.5L1687.5,754.4z" fill="#4a9171"/>
<path d="M1660,750L1687.4,754.1L1687,759.3z" fill="#4a9272"/>
<path d="M1660,750L1687.1,759L1685.2,763.9z" fill="#499070"/>
<path d="M1660,750L1685.3,763.6L1682.2,767.9z" fill="#478b6d"/>
<path d="M1660,750L1682.4,767.7L1678.3,770.8z" fill="#438568"/>
<path d="M1660,750L1678.5,770.6L1673.9,772.3z" fill="#407e62"/>
<path d="M1660,750L1674.2,772.3L1669.4,772.4z" fill="#3c765c"/>
<path d="M1660,750L1669.7,772.5L1665.2,771z" fill="#386f57"/>
<path d="M1660,750L1665.5,771.1L1661.8,768.2z" fill="#366a53"/>
<path d="M1660,750L1662,768.4L1659.5,764.3z" fill="#346750"/>
<path d="M1660,750L1659.7,764.6L1658.6,759.7z" fill="#346650"/>
<path d="M1660,750L1658.6,760L1658.9,755.2z" fill="#356852"/>
<path d="M1602,692L1678.6,707.5L1680.4,708.6z" fill="#78a366"/>
<path d="M1602,692L1680.2,708.4L1681.2,710.6z" fill="#739c62"/>
<path d="M1602,692L1681.2,710.3L1681.3,713.4z" fill="#6d945d"/>
<path d="M1602,692L1681.3,713.1L1680.6,717.1z" fill="#658a56"/>
<path d="M1602,692L1680.7,716.7L1679.1,721.4z" fill="#5e8050"/>
<path d="M1602,692L1679.3,720.9L1676.9,726.2z" fill="#58774b"/>
<path d="M1602,692L1677.2,725.7L1674.1,731.3z" fill="#537046"/>
<path d="M1602,692L1674.4,730.8L1670.7,736.6z" fill="#506d44"/>
<path d="M1602,692L1671.1,736L1667,741.8z" fill="#506c44"/>
<path d="M1602,692L1667.4,741.3L1662.9,746.8z" fill="#526f46"/>
<path d="M1602,692L1663.4,746.3L1658.8,751.4z" fill="#56764a"/>
<path d="M1602,692L1659.2,750.9L1654.7,755.4z" fill="#5d7e4f"/>
<path d="M1602,692L1655.1,755L1650.7,758.6z" fill="#648855"/>
<path d="M1602,692L1651.1,758.3L1647,761.1z" fill="#6b925b"/>
<path d="M1602,692L1647.4,760.8L1643.8,762.5z" fill="#729b61"/>
<path d="M1602,692L1644.1,762.4L1641.2,763.1z" fill="#77a265"/>
<path d="M1602,692L1641.4,763.1L1639.2,762.6z" fill="#7aa568"/>
<path d="M1602,692L1639.4,762.7L1638,761.3z" fill="#7aa668"/>
<path d="M1666.2,749L1674.4,756.5" stroke="#f4ee10" stroke-width="1.8" fill="none"/>
<path d="M1633.8,867L1610.3,766L1610.7,764.8z" fill="#d3af27"/>
<path d="M1633.8,867L1610.6,764.9L1612.2,763.9z" fill="#cca926"/>
<path d="M1633.8,867L1612,764L1614.8,763.1z" fill="#c3a124"/>
<path d="M1633.8,867L1614.4,763.2L1618.2,762.6z" fill="#b89822"/>
<path d="M1633.8,867L1617.8,762.6L1622.5,762.2z" fill="#ad8f20"/>
<path d="M1633.8,867L1622,762.3L1627.6,762.1z" fill="#a3871e"/>
<path d="M1633.8,867L1627,762.1L1633.1,762.2z" fill="#9b811d"/>
<path d="M1633.8,867L1632.5,762.2L1639,762.6z" fill="#977d1c"/>
<path d="M1633.8,867L1638.3,762.5L1645,763.1z" fill="#977d1c"/>
<path d="M1633.8,867L1644.4,763L1651,763.8z" fill="#9b801e"/>
<path d="M1633.8,867L1650.4,763.7L1656.8,764.7z" fill="#a48a29"/>
<path d="M1633.8,867L1656.2,764.6L1662.1,765.8z" fill="#b19941"/>
<path d="M1633.8,867L1661.6,765.7L1666.9,766.9z" fill="#bba34a"/>
<path d="M1633.8,867L1666.4,766.8L1670.8,768.1z" fill="#c2a538"/>
<path d="M1633.8,867L1670.4,768L1673.9,769.4z" fill="#cba92a"/>
<path d="M1633.8,867L1673.6,769.2L1676,770.6z" fill="#d2ae28"/>
<path d="M1633.8,867L1675.8,770.5L1677.1,771.8z" fill="#d6b128"/>
<path d="M1633.8,867L1677,771.7L1677.1,772.8z" fill="#d7b228"/>
<path d="M1633.5,866L1634,868" stroke="#f4ee10" stroke-width="1.8" fill="none"/>
<path d="M1593.8,761L1629.1,744L1631.6,743.4z" fill="#7a8a4b"/>
<path d="M1593.8,761L1631.4,743.4L1633.6,744.1z" fill="#738146"/>
<path d="M1593.8,761L1633.4,744L1635.1,745.9z" fill="#6c7a42"/>
<path d="M1593.8,761L1635,745.7L1636.2,748.9z" fill="#66743f"/>
<path d="M1593.8,761L1636.2,748.5L1636.8,752.7z" fill="#63703d"/>
<path d="M1593.8,761L1636.8,752.3L1636.9,757.3z" fill="#626f3c"/>
<path d="M1593.8,761L1636.9,756.9L1636.4,762.5z" fill="#64703d"/>
<path d="M1593.8,761L1636.4,762L1635.3,768z" fill="#677540"/>
<path d="M1593.8,761L1635.4,767.5L1633.8,773.7z" fill="#6d7b43"/>
<path d="M1593.8,761L1634,773.1L1631.9,779.1z" fill="#748347"/>
<path d="M1593.8,761L1632.1,778.6L1629.6,784.2z" fill="#7b8b4c"/>
<path d="M1593.8,761L1629.9,783.8L1627.1,788.7z" fill="#829350"/>
<path d="M1593.8,761L1627.4,788.3L1624.5,792.4z" fill="#889953"/>
<path d="M1593.8,761L1624.8,792.1L1621.9,795.1z" fill="#8b9d55"/>
<path d="M1593.8,761L1622.2,794.8L1619.4,796.7z" fill="#8c9e56"/>
<path d="M1593.8,761L1619.7,796.6L1617.2,797.1z" fill="#8a9c55"/>
<path d="M1593.8,761L1617.4,797.1L1615.2,796.4z" fill="#879853"/>
<path d="M1593.8,761L1615.4,796.5L1613.8,794.7z" fill="#81914f"/>
<path d="M1573,821L1569.5,762.9L1570,762z" fill="#86985a"/>
<path d="M1573,821L1569.9,762.1L1571.3,761.7z" fill="#839558"/>
<path d="M1573,821L1571.2,761.7L1573.5,761.8z" fill="#7e8f55"/>
<path d="M1573,821L1573.3,761.7L1576.5,762.4z" fill="#788851"/>
<path d="M1573,821L1576.1,762.3L1580.1,763.4z" fill="#71804c"/>
<path d="M1573,821L1579.7,763.3L1584.2,764.8z" fill="#697747"/>
<path d="M1573,821L1583.8,764.7L1588.7,766.6z" fill="#637042"/>
<path d="M1573,821L1588.2,766.4L1593.5,768.7z" fill="#5e6b3f"/>
<path d="M1573,821L1593,768.5L1598.3,771z" fill="#5b683d"/>
<path d="M1573,821L1597.8,770.8L1603.1,773.5z" fill="#5b683d"/>
<path d="M1573,821L1602.6,773.2L1607.6,776z" fill="#5e6b3f"/>
<path d="M1573,821L1607.1,775.7L1611.6,778.5z" fill="#637042"/>
<path d="M1573,821L1611.2,778.2L1615.1,780.9z" fill="#697747"/>
<path d="M1573,821L1614.8,780.6L1618,783.1z" fill="#71804c"/>
<path d="M1573,821L1617.7,782.8L1620.1,785z" fill="#788851"/>
<path d="M1573,821L1619.9,784.8L1621.3,786.6z" fill="#7e8f55"/>
<path d="M1573,821L1621.2,786.4L1621.7,787.8z" fill="#839558"/>
<path d="M1573,821L1621.7,787.7L1621.3,788.5z" fill="#86985a"/>
<path d="M1569.4,835.2L1610,898.5L1610.6,900.5z" fill="#b6b111"/>
<path d="M1569.4,835.2L1610.6,900.3L1610,902.5z" fill="#bfba12"/>
<path d="M1569.4,835.2L1610.1,902.3L1608.5,904.6z" fill="#cac513"/>
<path d="M1569.4,835.2L1608.7,904.4L1606,906.7z" fill="#d6d014"/>
<path d="M1569.4,835.2L1606.3,906.5L1602.6,908.8z" fill="#e0db15"/>
<path d="M1569.4,835.2L1603,908.6L1598.5,910.7z" fill="#e8e215"/>
<path d="M1569.4,835.2L1598.9,910.5L1593.7,912.4z" fill="#ede716"/>
<path d="M1569.4,835.2L1594.2,912.2L1588.6,913.8z" fill="#eee816"/>
<path d="M1569.4,835.2L1589.1,913.7L1583.2,914.9z" fill="#ebe516"/>
<path d="M1569.4,835.2L1583.8,914.8L1577.8,915.7z" fill="#e4de15"/>
<path d="M1569.4,835.2L1578.3,915.6L1572.5,916.1z" fill="#dad514"/>
<path d="M1569.4,835.2L1573.1,916.1L1567.6,916z" fill="#cfca13"/>
<path d="M1569.4,835.2L1568.1,916.1L1563.2,915.6z" fill="#c3bf12"/>
<path d="M1569.4,835.2L1563.6,915.7L1559.4,914.8z" fill="#b9b411"/>
<path d="M1569.4,835.2L1559.8,914.9L1556.5,913.6z" fill="#b1ad10"/>
<path d="M1569.4,835.2L1556.8,913.8L1554.5,912.2z" fill="#aca810"/>
<path d="M1569.4,835.2L1554.7,912.3L1553.5,910.4z" fill="#aca710"/>
<path d="M1569.4,835.2L1553.6,910.6L1553.5,908.7z" fill="#afaa10"/>
<path d="M1553.8,896.2L1609.7,873L1610.3,873.2z" fill="#7eb074"/>
<path d="M1553.8,896.2L1610.3,873.2L1610.9,874.2z" fill="#7bac71"/>
<path d="M1553.8,896.2L1610.8,874.1L1611.4,875.9z" fill="#76a56d"/>
<path d="M1553.8,896.2L1611.3,875.7L1611.8,878.2z" fill="#6f9c67"/>
<path d="M1553.8,896.2L1611.8,877.9L1612.2,881.1z" fill="#689160"/>
<path d="M1553.8,896.2L1612.2,880.8L1612.6,884.5z" fill="#608759"/>
<path d="M1553.8,896.2L1612.5,884.1L1612.8,888.3z" fill="#5a7d53"/>
<path d="M1553.8,896.2L1612.8,887.9L1612.9,892.3z" fill="#55774e"/>
<path d="M1553.8,896.2L1612.9,891.9L1613,896.4z" fill="#52734c"/>
<path d="M1553.8,896.2L1613,896L1613,900.6z" fill="#52734c"/>
<path d="M1553.8,896.2L1613,900.1L1612.8,904.5z" fill="#55774e"/>
<path d="M1553.8,896.2L1612.8,904.1L1612.6,908.2z" fill="#5a7d53"/>
<path d="M1553.8,896.2L1612.6,907.8L1612.3,911.5z" fill="#608759"/>
<path d="M1553.8,896.2L1612.3,911.2L1611.9,914.3z" fill="#689160"/>
<path d="M1553.8,896.2L1611.9,914L1611.4,916.5z" fill="#6f9c67"/>
<path d="M1553.8,896.2L1611.5,916.3L1610.9,918.1z" fill="#76a56d"/>
<path d="M1553.8,896.2L1611,917.9L1610.4,918.9z" fill="#7bac71"/>
<path d="M1553.8,896.2L1610.5,918.8L1609.9,919z" fill="#7eb074"/>
<ellipse cx="1600" cy="950" rx="13" ry="16" transform="rotate(0 1600 950)" fill="#c6a620"/>
<path d="M1577.5,907.5L1576,921" stroke="#f4ee10" stroke-width="1.8" fill="none"/>
<path d="M1453.8,933.5L1528.4,917.6L1528.7,917.9z" fill="#bb9f49"/>
<path d="M1453.8,933.5L1528.7,917.9L1529,918.8z" fill="#c2a54b"/>
<path d="M1453.8,933.5L1529,918.7L1529.3,920.3z" fill="#c6a84d"/>
<path d="M1453.8,933.5L1529.3,920.1L1529.5,922.3z" fill="#c8aa4e"/>
<path d="M1453.8,933.5L1529.5,922L1529.6,924.7z" fill="#c7a94e"/>
<path d="M1453.8,933.5L1529.6,924.4L1529.7,927.6z" fill="#c3a54c"/>
<path d="M1453.8,933.5L1529.7,927.2L1529.7,930.7z" fill="#bca049"/>
<path d="M1453.8,933.5L1529.7,930.4L1529.6,934.1z" fill="#b49946"/>
<path d="M1453.8,933.5L1529.6,933.7L1529.5,937.5z" fill="#ac9243"/>
<path d="M1453.8,933.5L1529.5,937.1L1529.3,940.9z" fill="#a38b40"/>
<path d="M1453.8,933.5L1529.3,940.5L1529,944.2z" fill="#9c853d"/>
<path d="M1453.8,933.5L1529.1,943.8L1528.7,947.3z" fill="#98813b"/>
<path d="M1453.8,933.5L1528.8,946.9L1528.4,950z" fill="#96803b"/>
<path d="M1453.8,933.5L1528.4,949.7L1528,952.3z" fill="#97813b"/>
<path d="M1453.8,933.5L1528,952.1L1527.6,954.2z" fill="#9b843d"/>
<path d="M1453.8,933.5L1527.7,954L1527.2,955.5z" fill="#a2893f"/>
<path d="M1453.8,933.5L1527.3,955.4L1526.8,956.2z" fill="#aa9042"/>
<path d="M1453.8,933.5L1526.9,956.2L1526.5,956.4z" fill="#b29846"/>
<ellipse cx="1531" cy="944" rx="21" ry="24" transform="rotate(0 1531 944)" fill="#0296c4"/>
<path d="M1534.4,951.2L1540,963" stroke="#f4ee10" stroke-width="1.8" fill="none"/>
<path d="M1541.2,929.4L1547,931.2" stroke="#f4ee10" stroke-width="1.8" fill="none"/>
<path d="M1453.8,933.5L1528.4,917.6L1528.7,917.9z" fill="#bb9f49"/>
<path d="M1453.8,933.5L1528.7,917.9L1529,918.8z" fill="#c2a54b"/>
<path d="M1453.8,933.5L1529,918.7L1529.3,920.3z" fill="#c6a84d"/>
<path d="M1453.8,933.5L1529.3,920.1L1529.5,922.3z" fill="#c8aa4e"/>
<path d="M1453.8,933.5L1529.5,922L1529.6,924.7z" fill="#c7a94e"/>
<path d="M1453.8,933.5L1529.6,924.4L1529.7,927.6z" fill="#c3a54c"/>
<path d="M1453.8,933.5L1529.7,927.2L1529.7,930.7z" fill="#bca049"/>
<path d="M1453.8,933.5L1529.7,930.4L1529.6,934.1z" fill="#b49946"/>
<path d="M1453.8,933.5L1529.6,933.7L1529.5,937.5z" fill="#ac9243"/>
<path d="M1453.8,933.5L1529.5,937.1L1529.3,940.9z" fill="#a38b40"/>
<path d="M1453.8,933.5L1529.3,940.5L1529,944.2z" fill="#9c853d"/>
<path d="M1453.8,933.5L1529.1,943.8L1528.7,947.3z" fill="#98813b"/>
<path d="M1453.8,933.5L1528.8,946.9L1528.4,950z" fill="#96803b"/>
<path d="M1453.8,933.5L1528.4,949.7L1528,952.3z" fill="#97813b"/>
<path d="M1453.8,933.5L1528,952.1L1527.6,954.2z" fill="#9b843d"/>
<path d="M1453.8,933.5L1527.7,954L1527.2,955.5z" fill="#a2893f"/>
<path d="M1453.8,933.5L1527.3,955.4L1526.8,956.2z" fill="#aa9042"/>
<path d="M1453.8,933.5L1526.9,956.2L1526.5,956.4z" fill="#b29846"/>
<path d="M1528,934.8L1547,934.8" stroke="#f4ee10" stroke-width="1.8" fill="none"/>
<path d="M1502.5,946.2L1525,990.5L1524.7,990.8z" fill="#9f8942"/>
<path d="M1502.5,946.2L1524.8,990.8L1523.7,991.1z" fill="#a38c43"/>
<path d="M1502.5,946.2L1523.8,991.1L1522,991.3z" fill="#a89146"/>
<path d="M1502.5,946.2L1522.2,991.3L1519.7,991.6z" fill="#b09749"/>
<path d="M1502.5,946.2L1520,991.5L1516.9,991.8z" fill="#ba9f4d"/>
<path d="M1502.5,946.2L1517.2,991.7L1513.6,991.9z" fill="#c3a751"/>
<path d="M1502.5,946.2L1514,991.9L1509.9,992z" fill="#cbae54"/>
<path d="M1502.5,946.2L1510.4,992L1506,992.1z" fill="#d0b357"/>
<path d="M1502.5,946.2L1506.5,992.1L1502.1,992.1z" fill="#d4b658"/>
<path d="M1502.5,946.2L1502.5,992.1L1498.1,992.1z" fill="#d4b658"/>
<path d="M1502.5,946.2L1498.5,992.1L1494.2,992z" fill="#d0b357"/>
<path d="M1502.5,946.2L1494.6,992L1490.6,991.9z" fill="#cbae54"/>
<path d="M1502.5,946.2L1491,991.9L1487.4,991.7z" fill="#c3a751"/>
<path d="M1502.5,946.2L1487.8,991.7L1484.7,991.5z" fill="#ba9f4d"/>
<path d="M1502.5,946.2L1485,991.5L1482.6,991.3z" fill="#b09749"/>
<path d="M1502.5,946.2L1482.8,991.3L1481,991z" fill="#a89146"/>
<path d="M1502.5,946.2L1481.2,991.1L1480.2,990.8z" fill="#a38c43"/>
<path d="M1502.5,946.2L1480.2,990.8L1480,990.5z" fill="#9f8942"/>
<path d="M1513.8,970.6L1522.5,966.2" stroke="#f4ee10" stroke-width="1.8" fill="none"/>
<path d="M1457,1028.5L1504.9,992.6L1505.5,992.5z" fill="#70a069"/>
<path d="M1457,1028.5L1505.4,992.5L1506.2,993.1z" fill="#75a76e"/>
<path d="M1457,1028.5L1506.1,993L1507.1,994.3z" fill="#79ac71"/>
<path d="M1457,1028.5L1507,994.1L1508.2,996z" fill="#7aae72"/>
<path d="M1457,1028.5L1508.1,995.8L1509.3,998.1z" fill="#79ad71"/>
<path d="M1457,1028.5L1509.2,997.9L1510.5,1000.7z" fill="#76a86e"/>
<path d="M1457,1028.5L1510.3,1000.4L1511.7,1003.6z" fill="#71a26a"/>
<path d="M1457,1028.5L1511.5,1003.2L1512.8,1006.7z" fill="#6c9964"/>
<path d="M1457,1028.5L1512.7,1006.3L1514,1009.9z" fill="#65905f"/>
<path d="M1457,1028.5L1513.8,1009.6L1515,1013.2z" fill="#5f8859"/>
<path d="M1457,1028.5L1514.9,1012.8L1515.9,1016.3z" fill="#5a8154"/>
<path d="M1457,1028.5L1515.8,1016L1516.6,1019.3z" fill="#577c51"/>
<path d="M1457,1028.5L1516.5,1019L1517.2,1022z" fill="#557a50"/>
<path d="M1457,1028.5L1517.1,1021.7L1517.5,1024.3z" fill="#567b51"/>
<path d="M1457,1028.5L1517.5,1024.1L1517.6,1026.2z" fill="#597f53"/>
<path d="M1457,1028.5L1517.6,1026L1517.6,1027.5z" fill="#5e8658"/>
<path d="M1457,1028.5L1517.6,1027.4L1517.3,1028.3z" fill="#648e5d"/>
<path d="M1457,1028.5L1517.3,1028.3L1516.8,1028.5z" fill="#6a9863"/>
<path d="M1515,1010.5L1531,1006" stroke="#f4ee10" stroke-width="1.8" fill="none"/>
<path d="M1511,1026L1564.9,1021.3L1565.1,1021.6z" fill="#239d97"/>
<path d="M1511,1026L1565.1,1021.6L1565.1,1022.5z" fill="#25a39d"/>
<path d="M1511,1026L1565.1,1022.4L1565,1023.9z" fill="#26a6a1"/>
<path d="M1511,1026L1565,1023.8L1564.7,1025.8z" fill="#26a8a2"/>
<path d="M1511,1026L1564.8,1025.6L1564.3,1028.2z" fill="#26a7a1"/>
<path d="M1511,1026L1564.3,1027.9L1563.7,1030.9z" fill="#25a49e"/>
<path d="M1511,1026L1563.8,1030.5L1563,1033.8z" fill="#249e98"/>
<path d="M1511,1026L1563.1,1033.5L1562.2,1036.9z" fill="#229792"/>
<path d="M1511,1026L1562.3,1036.6L1561.3,1040.2z" fill="#21908b"/>
<path d="M1511,1026L1561.4,1039.8L1560.4,1043.3z" fill="#1f8984"/>
<path d="M1511,1026L1560.5,1043L1559.5,1046.4z" fill="#1e837f"/>
<path d="M1511,1026L1559.6,1046.1L1558.6,1049.2z" fill="#1d807b"/>
<path d="M1511,1026L1558.7,1048.9L1557.8,1051.8z" fill="#1d7e7a"/>
<path d="M1511,1026L1557.9,1051.5L1557,1053.9z" fill="#1d7f7a"/>
<path d="M1511,1026L1557.1,1053.7L1556.3,1055.6z" fill="#1e827e"/>
<path d="M1511,1026L1556.4,1055.4L1555.7,1056.8z" fill="#1f8883"/>
<path d="M1511,1026L1555.8,1056.7L1555.3,1057.4z" fill="#208f8a"/>
<path d="M1511,1026L1555.3,1057.3L1555,1057.5z" fill="#229691"/>
<path d="M1559.4,1041.2L1577.5,1046.9" stroke="#f4ee10" stroke-width="1.8" fill="none"/>
<path d="M1458.8,1060.5L1480.2,1002.9L1481.3,1001.6z" fill="#24acac"/>
<path d="M1458.8,1060.5L1481.2,1001.7L1483.1,1001.5z" fill="#23a9a9"/>
<path d="M1458.8,1060.5L1482.9,1001.4L1485.5,1002.3z" fill="#22a4a4"/>
<path d="M1458.8,1060.5L1485.3,1002.1L1488.6,1004z" fill="#219e9e"/>
<path d="M1458.8,1060.5L1488.2,1003.8L1492,1006.7z" fill="#209797"/>
<path d="M1458.8,1060.5L1491.6,1006.4L1495.8,1010.1z" fill="#1e8f8f"/>
<path d="M1458.8,1060.5L1495.4,1009.7L1499.8,1014.2z" fill="#1d8989"/>
<path d="M1458.8,1060.5L1499.4,1013.7L1503.8,1018.7z" fill="#228787"/>
<path d="M1458.8,1060.5L1503.4,1018.2L1507.7,1023.6z" fill="#3a8f91"/>
<path d="M1458.8,1060.5L1507.3,1023.1L1511.4,1028.7z" fill="#5e9fa3"/>
<path d="M1458.8,1060.5L1511.1,1028.2L1514.7,1033.8z" fill="#589fa2"/>
<path d="M1458.8,1060.5L1514.4,1033.2L1517.5,1038.6z" fill="#349394"/>
<path d="M1458.8,1060.5L1517.2,1038.1L1519.7,1043z" fill="#229191"/>
<path d="M1458.8,1060.5L1519.5,1042.6L1521.2,1046.9z" fill="#209797"/>
<path d="M1458.8,1060.5L1521.1,1046.6L1522,1050.1z" fill="#219e9e"/>
<path d="M1458.8,1060.5L1521.9,1049.8L1522,1052.5z" fill="#22a4a4"/>
<path d="M1458.8,1060.5L1522,1052.3L1521.2,1054.1z" fill="#23a9a9"/>
<path d="M1458.8,1060.5L1521.4,1053.9L1519.9,1054.6z" fill="#24acac"/>
<path d="M1556.9,1023.8L1546.7,931.2L1547,929z" fill="#6c9866"/>
<path d="M1556.9,1023.8L1546.9,929.2L1548.3,927.1z" fill="#6b9665"/>
<path d="M1556.9,1023.8L1548.1,927.3L1550.5,925.6z" fill="#689362"/>
<path d="M1556.9,1023.8L1550.2,925.7L1553.5,924.4z" fill="#658e5f"/>
<path d="M1556.9,1023.8L1553.1,924.5L1557.2,923.5z" fill="#61895c"/>
<path d="M1556.9,1023.8L1556.8,923.6L1561.5,923.1z" fill="#5e8458"/>
<path d="M1556.9,1023.8L1561,923.1L1566.3,923.1z" fill="#5a7f55"/>
<path d="M1556.9,1023.8L1565.7,923.1L1571.3,923.5z" fill="#587c53"/>
<path d="M1556.9,1023.8L1570.7,923.4L1576.3,924.3z" fill="#597c54"/>
<path d="M1556.9,1023.8L1575.8,924.2L1581.3,925.5z" fill="#658563"/>
<path d="M1556.9,1023.8L1580.8,925.3L1586.1,927z" fill="#7f9880"/>
<path d="M1556.9,1023.8L1585.6,926.8L1590.4,928.8z" fill="#869f89"/>
<path d="M1556.9,1023.8L1589.9,928.6L1594.1,930.8z" fill="#729271"/>
<path d="M1556.9,1023.8L1593.7,930.6L1597.1,933z" fill="#658c61"/>
<path d="M1556.9,1023.8L1596.8,932.8L1599.2,935.3z" fill="#658e60"/>
<path d="M1556.9,1023.8L1599,935L1600.5,937.5z" fill="#689362"/>
<path d="M1556.9,1023.8L1600.4,937.2L1600.8,939.6z" fill="#6b9665"/>
<path d="M1556.9,1023.8L1600.8,939.4L1600.3,941.4z" fill="#6c9866"/>
<path d="M1556.5,1022.5L1557.2,1025" stroke="#f4ee10" stroke-width="1.8" fill="none"/>
<path d="M1601.9,986.9L1639.7,957.1L1640.3,956.9z" fill="#28a8a2"/>
<path d="M1601.9,986.9L1640.2,956.9L1641,957.3z" fill="#27a59f"/>
<path d="M1601.9,986.9L1640.9,957.2L1641.9,958z" fill="#269f99"/>
<path d="M1601.9,986.9L1641.8,957.9L1642.8,959.2z" fill="#249792"/>
<path d="M1601.9,986.9L1642.7,959L1643.8,960.7z" fill="#228f8a"/>
<path d="M1601.9,986.9L1643.7,960.5L1644.9,962.5z" fill="#208682"/>
<path d="M1601.9,986.9L1644.7,962.3L1645.9,964.6z" fill="#22807c"/>
<path d="M1601.9,986.9L1645.8,964.3L1646.9,966.8z" fill="#318381"/>
<path d="M1601.9,986.9L1646.8,966.6L1647.9,969.2z" fill="#4c8f8e"/>
<path d="M1601.9,986.9L1647.8,968.9L1648.8,971.5z" fill="#4c8f8e"/>
<path d="M1601.9,986.9L1648.7,971.3L1649.5,973.9z" fill="#318381"/>
<path d="M1601.9,986.9L1649.4,973.6L1650.1,976.1z" fill="#22807c"/>
<path d="M1601.9,986.9L1650,975.8L1650.5,978.1z" fill="#208682"/>
<path d="M1601.9,986.9L1650.5,977.8L1650.8,979.8z" fill="#228f8a"/>
<path d="M1601.9,986.9L1650.7,979.6L1650.8,981.2z" fill="#249792"/>
<path d="M1601.9,986.9L1650.8,981.1L1650.7,982.2z" fill="#269f99"/>
<path d="M1601.9,986.9L1650.7,982.1L1650.4,982.9z" fill="#27a59f"/>
<path d="M1601.9,986.9L1650.4,982.8L1649.9,983.1z" fill="#28a8a2"/>
<path d="M1632,982.5L1630.2,915.9L1630.4,914.4z" fill="#978f4b"/>
<path d="M1632,982.5L1630.4,914.5L1631.1,913.1z" fill="#958d4a"/>
<path d="M1632,982.5L1631,913.2L1632.3,912z" fill="#958e4a"/>
<path d="M1632,982.5L1632.1,912.1L1633.8,911.1z" fill="#99914c"/>
<path d="M1632,982.5L1633.6,911.2L1635.7,910.4z" fill="#9f974f"/>
<path d="M1632,982.5L1635.5,910.4L1637.9,909.9z" fill="#a69e52"/>
<path d="M1632,982.5L1637.7,910L1640.3,909.7z" fill="#afa657"/>
<path d="M1632,982.5L1640,909.7L1642.8,909.8z" fill="#b7ae5b"/>
<path d="M1632,982.5L1642.5,909.8L1645.4,910.2z" fill="#beb55e"/>
<path d="M1632,982.5L1645.1,910.1L1647.8,910.8z" fill="#c3ba61"/>
<path d="M1632,982.5L1647.6,910.7L1650.2,911.6z" fill="#c6bc62"/>
<path d="M1632,982.5L1649.9,911.5L1652.3,912.7z" fill="#c5bb62"/>
<path d="M1632,982.5L1652.1,912.6L1654.1,913.9z" fill="#c2b860"/>
<path d="M1632,982.5L1653.9,913.8L1655.6,915.2z" fill="#bcb25d"/>
<path d="M1632,982.5L1655.4,915.1L1656.6,916.7z" fill="#b4ab59"/>
<path d="M1632,982.5L1656.5,916.5L1657.2,918.1z" fill="#aca355"/>
<path d="M1632,982.5L1657.2,918L1657.3,919.5z" fill="#a39b51"/>
<path d="M1632,982.5L1657.3,919.4L1657,920.8z" fill="#9c944d"/>
<path d="M1626.9,945.6L1633,945.6" stroke="#f4ee10" stroke-width="1.8" fill="none"/>
<path d="M1591.9,941.2L1587,880.9L1587.5,880.8z" fill="#eabc42"/>
<path d="M1591.9,941.2L1587.4,880.7L1589,881.3z" fill="#e6b841"/>
<path d="M1591.9,941.2L1588.8,881.2L1591.5,882.4z" fill="#deb33f"/>
<path d="M1591.9,941.2L1591.2,882.2L1594.7,884z" fill="#d4ab3c"/>
<path d="M1591.9,941.2L1594.3,883.8L1598.7,886.2z" fill="#c9a239"/>
<path d="M1591.9,941.2L1598.2,885.9L1603.3,888.8z" fill="#be9936"/>
<path d="M1591.9,941.2L1602.8,888.5L1608.4,891.7z" fill="#b49133"/>
<path d="M1591.9,941.2L1607.8,891.3L1613.7,894.9z" fill="#ad8b31"/>
<path d="M1591.9,941.2L1613.1,894.5L1619.2,898.2z" fill="#a98830"/>
<path d="M1591.9,941.2L1618.5,897.8L1624.6,901.5z" fill="#a98830"/>
<path d="M1591.9,941.2L1624,901.2L1629.7,904.8z" fill="#ad8b31"/>
<path d="M1591.9,941.2L1629.2,904.5L1634.5,907.9z" fill="#b49133"/>
<path d="M1591.9,941.2L1634,907.6L1638.8,910.8z" fill="#be9936"/>
<path d="M1591.9,941.2L1638.3,910.5L1642.3,913.3z" fill="#c9a239"/>
<path d="M1591.9,941.2L1642,913L1645.1,915.3z" fill="#d4ab3c"/>
<path d="M1591.9,941.2L1644.8,915.1L1647,916.9z" fill="#deb33f"/>
<path d="M1591.9,941.2L1646.8,916.7L1647.9,917.9z" fill="#e6b841"/>
<path d="M1591.9,941.2L1647.9,917.8L1648,918.3z" fill="#eabc42"/>
<path d="M1617.5,899.4L1625,887.5" stroke="#f4ee10" stroke-width="1.8" fill="none"/>
<path d="M1622.5,895.6L1626.2,895" stroke="#f4ee10" stroke-width="1.8" fill="none"/>
<path d="M1634,945L1718.2,923.8L1719.1,924z" fill="#ae9a4b"/>
<path d="M1634,945L1719,923.9L1719.9,924.8z" fill="#a89549"/>
<path d="M1634,945L1719.8,924.7L1720.6,926.3z" fill="#a59147"/>
<path d="M1634,945L1720.6,926.1L1721.3,928.3z" fill="#a39046"/>
<path d="M1634,945L1721.2,928L1721.9,930.8z" fill="#a49147"/>
<path d="M1634,945L1721.9,930.5L1722.4,933.7z" fill="#a89448"/>
<path d="M1634,945L1722.4,933.4L1722.8,937z" fill="#ad984b"/>
<path d="M1634,945L1722.8,936.6L1723,940.5z" fill="#b39e4d"/>
<path d="M1634,945L1723,940.1L1723.2,944.1z" fill="#baa550"/>
<path d="M1634,945L1723.1,943.7L1723.1,947.7z" fill="#c1aa53"/>
<path d="M1634,945L1723.1,947.3L1722.9,951.1z" fill="#c7af56"/>
<path d="M1634,945L1723,950.7L1722.6,954.3z" fill="#cbb357"/>
<path d="M1634,945L1722.7,954L1722.2,957.2z" fill="#ccb458"/>
<path d="M1634,945L1722.2,956.9L1721.6,959.6z" fill="#cbb358"/>
<path d="M1634,945L1721.7,959.4L1721,961.6z" fill="#c8b056"/>
<path d="M1634,945L1721.1,961.4L1720.3,962.9z" fill="#c2ac54"/>
<path d="M1634,945L1720.4,962.8L1719.5,963.6z" fill="#bca651"/>
<path d="M1634,945L1719.6,963.6L1718.8,963.7z" fill="#b59f4e"/>
<ellipse cx="1718.8" cy="943.8" rx="4.4" ry="20" transform="rotate(179.2 1718.8 943.8)" fill="#ad994b"/>
<path d="M1720,943.8L1747.5,942.5" stroke="#f4ee10" stroke-width="1.8" fill="none"/>
<path d="M1626,990.6L1672.4,975.2L1672.7,975.5z" fill="#d0ae24"/>
<path d="M1626,990.6L1672.7,975.4L1673,976.4z" fill="#c6a622"/>
<path d="M1626,990.6L1673,976.3L1673.1,978z" fill="#be9f21"/>
<path d="M1626,990.6L1673.1,977.8L1673.1,980.2z" fill="#b99b20"/>
<path d="M1626,990.6L1673.1,979.9L1673,982.9z" fill="#b79920"/>
<path d="M1626,990.6L1673,982.6L1672.8,986z" fill="#b99b20"/>
<path d="M1626,990.6L1672.8,985.7L1672.5,989.5z" fill="#be9f21"/>
<path d="M1626,990.6L1672.6,989.1L1672.1,993.2z" fill="#c6a622"/>
<path d="M1626,990.6L1672.2,992.7L1671.7,996.9z" fill="#d0ae24"/>
<path d="M1626,990.6L1671.7,996.5L1671.2,1000.7z" fill="#dbb726"/>
<path d="M1626,990.6L1671.2,1000.3L1670.6,1004.3z" fill="#e5bf27"/>
<path d="M1626,990.6L1670.7,1003.9L1670,1007.6z" fill="#edc629"/>
<path d="M1626,990.6L1670.1,1007.3L1669.4,1010.6z" fill="#f2ca2a"/>
<path d="M1626,990.6L1669.5,1010.3L1668.8,1013.1z" fill="#f4cc2a"/>
<path d="M1626,990.6L1668.9,1012.9L1668.2,1015.1z" fill="#f2ca2a"/>
<path d="M1626,990.6L1668.3,1014.9L1667.7,1016.5z" fill="#edc629"/>
<path d="M1626,990.6L1667.8,1016.4L1667.3,1017.2z" fill="#e5bf27"/>
<path d="M1626,990.6L1667.3,1017.2L1666.9,1017.3z" fill="#dbb726"/>
<path d="M1665,955L1674.5,955.3L1681.9,956.8z" fill="#0b459c"/>
<path d="M1665,955L1681.5,956.6L1688,960.1z" fill="#0b4399"/>
<path d="M1665,955L1687.6,959.8L1692.6,965.1z" fill="#0b449a"/>
<path d="M1665,955L1692.4,964.7L1695.4,971.2z" fill="#0c469e"/>
<path d="M1665,955L1695.3,970.8L1696,977.9z" fill="#0c49a6"/>
<path d="M1665,955L1696.1,977.5L1694.5,984.6z" fill="#0d4eb0"/>
<path d="M1665,955L1694.6,984.2L1690.9,990.6z" fill="#0e53bc"/>
<path d="M1665,955L1691.2,990.2L1685.5,995.4z" fill="#0f57c7"/>
<path d="M1665,955L1685.9,995.1L1679,998.5z" fill="#0f5cd0"/>
<path d="M1665,955L1679.5,998.4L1671.9,999.7z" fill="#105fd7"/>
<path d="M1665,955L1672.3,999.7L1664.8,998.8z" fill="#1060da"/>
<path d="M1665,955L1665.2,998.9L1658.4,995.9z" fill="#1060d9"/>
<path d="M1665,955L1658.8,996.1L1653.4,991.3z" fill="#105ed4"/>
<path d="M1665,955L1653.6,991.6L1650.1,985.4z" fill="#0f5acd"/>
<path d="M1665,955L1650.3,985.8L1648.9,978.8z" fill="#0e56c2"/>
<path d="M1665,955L1648.9,979.2L1649.9,972z" fill="#0d51b7"/>
<path d="M1665,955L1649.8,972.5L1653.1,965.8z" fill="#0d4cac"/>
<path d="M1665,955L1652.8,966.2L1657.6,960.9z" fill="#0c48a3"/>
<path d="M1680.6,952.5L1685,971.2" stroke="#f4ee10" stroke-width="1.8" fill="none"/>
<path d="M1661.9,857.8L1711.3,939.2L1711.5,940.8z" fill="#203296"/>
<path d="M1661.9,857.8L1711.5,940.7L1710.6,942.5z" fill="#1f3193"/>
<path d="M1661.9,857.8L1710.7,942.3L1708.6,944.3z" fill="#1f308f"/>
<path d="M1661.9,857.8L1708.8,944.1L1705.6,946.1z" fill="#1d2e8a"/>
<path d="M1661.9,857.8L1705.9,945.9L1701.7,948z" fill="#1c2c83"/>
<path d="M1661.9,857.8L1702.2,947.8L1697.1,949.8z" fill="#1b2a7d"/>
<path d="M1661.9,857.8L1697.6,949.6L1691.8,951.5z" fill="#192877"/>
<path d="M1661.9,857.8L1692.4,951.3L1686.2,953z" fill="#192773"/>
<path d="M1661.9,857.8L1686.8,952.8L1680.3,954.2z" fill="#1e2b74"/>
<path d="M1661.9,857.8L1681,954.1L1674.4,955.2z" fill="#323f80"/>
<path d="M1661.9,857.8L1675,955.1L1668.7,955.9z" fill="#4d5891"/>
<path d="M1661.9,857.8L1669.3,955.9L1663.3,956.3z" fill="#455190"/>
<path d="M1661.9,857.8L1663.8,956.3L1658.4,956.3z" fill="#2a3885"/>
<path d="M1661.9,857.8L1658.9,956.3L1654.3,956z" fill="#1e2e84"/>
<path d="M1661.9,857.8L1654.7,956.1L1651.1,955.4z" fill="#1e2e8a"/>
<path d="M1661.9,857.8L1651.4,955.4L1648.8,954.4z" fill="#1f308f"/>
<path d="M1661.9,857.8L1649,954.5L1647.5,953.2z" fill="#1f3193"/>
<path d="M1661.9,857.8L1647.6,953.3L1647.3,951.9z" fill="#203296"/>
<path d="M1661.5,857L1662.2,858.5" stroke="#f4ee10" stroke-width="1.8" fill="none"/>
<path d="M1552.5,1051.2L1641.5,1055.4L1641.8,1055.8z" fill="#1056c6"/>
<path d="M1552.5,1051.2L1641.8,1055.7L1641.9,1056.8z" fill="#1055c3"/>
<path d="M1552.5,1051.2L1641.9,1056.6L1641.8,1058.3z" fill="#0f53bf"/>
<path d="M1552.5,1051.2L1641.8,1058.1L1641.5,1060.4z" fill="#0f50b9"/>
<path d="M1552.5,1051.2L1641.5,1060.2L1641,1063z" fill="#104fb3"/>
<path d="M1552.5,1051.2L1641.1,1062.6L1640.4,1065.9z" fill="#2158b0"/>
<path d="M1552.5,1051.2L1640.5,1065.5L1639.6,1069.1z" fill="#557bba"/>
<path d="M1552.5,1051.2L1639.7,1068.7L1638.8,1072.5z" fill="#809ac4"/>
<path d="M1552.5,1051.2L1638.9,1072.1L1637.8,1075.9z" fill="#5c7fb8"/>
<path d="M1552.5,1051.2L1637.9,1075.5L1636.8,1079.4z" fill="#2456a6"/>
<path d="M1552.5,1051.2L1636.9,1079L1635.8,1082.7z" fill="#1048a2"/>
<path d="M1552.5,1051.2L1635.9,1082.3L1634.7,1085.7z" fill="#0e48a6"/>
<path d="M1552.5,1051.2L1634.8,1085.4L1633.7,1088.5z" fill="#0e4aab"/>
<path d="M1552.5,1051.2L1633.8,1088.2L1632.8,1090.8z" fill="#0e4db2"/>
<path d="M1552.5,1051.2L1632.9,1090.5L1632,1092.6z" fill="#0f50b9"/>
<path d="M1552.5,1051.2L1632.1,1092.4L1631.3,1093.8z" fill="#0f53bf"/>
<path d="M1552.5,1051.2L1631.3,1093.7L1630.7,1094.5z" fill="#1055c3"/>
<path d="M1552.5,1051.2L1630.8,1094.5L1630.4,1094.6z" fill="#1056c6"/>
<path d="M1638,1078.8L1655.6,1085" stroke="#f4ee10" stroke-width="1.8" fill="none"/>
<path d="M1430,1081.8L1477.6,1051.9L1478.2,1052.1z" fill="#0e76c7"/>
<path d="M1430,1081.8L1478.1,1052L1478.7,1053.3z" fill="#0f7cd0"/>
<path d="M1430,1081.8L1478.7,1053.1L1479.3,1055.4z" fill="#1080d8"/>
<path d="M1430,1081.8L1479.2,1055.2L1479.7,1058.4z" fill="#1083dc"/>
<path d="M1430,1081.8L1479.7,1058.1L1480.1,1062.2z" fill="#1084de"/>
<path d="M1430,1081.8L1480.1,1061.7L1480.5,1066.6z" fill="#1083dc"/>
<path d="M1430,1081.8L1480.5,1066.1L1480.8,1071.4z" fill="#1080d8"/>
<path d="M1430,1081.8L1480.7,1070.9L1480.9,1076.6z" fill="#0f7cd0"/>
<path d="M1430,1081.8L1480.9,1076L1481,1082z" fill="#0e76c7"/>
<path d="M1430,1081.8L1481,1081.4L1481,1087.3z" fill="#0e71bd"/>
<path d="M1430,1081.8L1481,1086.7L1480.9,1092.4z" fill="#0d6bb4"/>
<path d="M1430,1081.8L1480.9,1091.9L1480.7,1097.2z" fill="#0c67ad"/>
<path d="M1430,1081.8L1480.7,1096.7L1480.3,1101.5z" fill="#0c64a8"/>
<path d="M1430,1081.8L1480.4,1101L1480,1105.1z" fill="#0c63a6"/>
<path d="M1430,1081.8L1480,1104.7L1479.5,1107.9z" fill="#0c64a8"/>
<path d="M1430,1081.8L1479.6,1107.6L1479,1109.8z" fill="#0c67ad"/>
<path d="M1430,1081.8L1479.1,1109.7L1478.5,1110.9z" fill="#0d6bb4"/>
<path d="M1430,1081.8L1478.6,1110.8L1478,1110.9z" fill="#0e71bd"/>
<path d="M1477.5,1080.5L1486.2,1080.5" stroke="#f4ee10" stroke-width="1.8" fill="none"/>
<path d="M1482,1055.5L1527.5,1089.9L1530.4,1092.8z" fill="#c1a345"/>
<path d="M1482,1055.5L1530.2,1092.5L1532.3,1096.1z" fill="#c9a948"/>
<path d="M1482,1055.5L1532.2,1095.7L1533.3,1099.7z" fill="#d0af4a"/>
<path d="M1482,1055.5L1533.3,1099.4L1533.4,1103.7z" fill="#d5b44c"/>
<path d="M1482,1055.5L1533.5,1103.3L1532.6,1107.7z" fill="#d9b74e"/>
<path d="M1482,1055.5L1532.7,1107.3L1530.9,1111.6z" fill="#dab84e"/>
<path d="M1482,1055.5L1531.1,1111.2L1528.4,1115.2z" fill="#d8b74d"/>
<path d="M1482,1055.5L1528.7,1114.9L1525.2,1118.4z" fill="#d4b34c"/>
<path d="M1482,1055.5L1525.6,1118.2L1521.5,1121.1z" fill="#ceae4a"/>
<path d="M1482,1055.5L1521.9,1120.9L1517.4,1123.1z" fill="#c7a847"/>
<path d="M1482,1055.5L1517.8,1122.9L1513,1124.3z" fill="#c0a245"/>
<path d="M1482,1055.5L1513.4,1124.2L1508.6,1124.7z" fill="#b99c42"/>
<path d="M1482,1055.5L1509.1,1124.7L1504.4,1124.2z" fill="#b39740"/>
<path d="M1482,1055.5L1504.8,1124.3L1500.6,1123z" fill="#af943f"/>
<path d="M1482,1055.5L1500.9,1123.1L1497.3,1120.9z" fill="#ae933e"/>
<path d="M1482,1055.5L1497.6,1121.2L1494.6,1118.2z" fill="#b0953f"/>
<path d="M1482,1055.5L1494.8,1118.5L1492.7,1115z" fill="#b49840"/>
<path d="M1482,1055.5L1492.9,1115.3L1491.7,1111.7z" fill="#ba9d43"/>
<ellipse cx="1512.5" cy="1105.5" rx="18" ry="22" transform="rotate(-121.4 1512.5 1105.5)" fill="#927e32"/>
<path d="M1512.5,1105.5L1522.5,1120.5" stroke="#f4ee10" stroke-width="1.8" fill="none"/>
<path d="M1502.5,1069L1555.2,1059.9L1557.9,1059.9z" fill="#6ea16e"/>
<path d="M1502.5,1069L1557.7,1059.9L1560.1,1060.9z" fill="#73a973"/>
<path d="M1502.5,1069L1559.9,1060.7L1562,1062.7z" fill="#78b178"/>
<path d="M1502.5,1069L1561.9,1062.5L1563.6,1065.3z" fill="#7db77d"/>
<path d="M1502.5,1069L1563.4,1065L1564.7,1068.5z" fill="#7fbb7f"/>
<path d="M1502.5,1069L1564.6,1068.1L1565.3,1072.2z" fill="#80bc80"/>
<path d="M1502.5,1069L1565.2,1071.9L1565.4,1076.4z" fill="#7fba7f"/>
<path d="M1502.5,1069L1565.4,1076L1564.9,1080.8z" fill="#7cb67c"/>
<path d="M1502.5,1069L1565,1080.3L1564,1085.2z" fill="#78b078"/>
<path d="M1502.5,1069L1564.1,1084.7L1562.6,1089.4z" fill="#72a872"/>
<path d="M1502.5,1069L1562.8,1089L1560.8,1093.4z" fill="#6da06d"/>
<path d="M1502.5,1069L1561,1093L1558.7,1096.9z" fill="#689868"/>
<path d="M1502.5,1069L1558.9,1096.5L1556.3,1099.7z" fill="#639263"/>
<path d="M1502.5,1069L1556.6,1099.5L1553.8,1101.9z" fill="#618e61"/>
<path d="M1502.5,1069L1554.1,1101.7L1551.2,1103.3z" fill="#608d60"/>
<path d="M1502.5,1069L1551.5,1103.2L1548.7,1103.8z" fill="#618f61"/>
<path d="M1502.5,1069L1548.9,1103.7L1546.3,1103.4z" fill="#649364"/>
<path d="M1502.5,1069L1546.5,1103.4L1544.4,1102.3z" fill="#689968"/>
<ellipse cx="1552.5" cy="1081.8" rx="12" ry="22.5" transform="rotate(-165.7 1552.5 1081.8)" fill="#639163"/>
<path d="M1557.5,1081.8L1573.8,1085" stroke="#f4ee10" stroke-width="1.8" fill="none"/>
<path d="M1558.8,1094.2L1616.1,1069.1L1616.4,1069.6z" fill="#c59a2d"/>
<path d="M1558.8,1094.2L1616.4,1069.5L1616.6,1071z" fill="#cfa22f"/>
<path d="M1558.8,1094.2L1616.6,1070.8L1616.7,1073.4z" fill="#d8a931"/>
<path d="M1558.8,1094.2L1616.7,1073L1616.6,1076.6z" fill="#e0af33"/>
<path d="M1558.8,1094.2L1616.6,1076.2L1616.4,1080.6z" fill="#e5b334"/>
<path d="M1558.8,1094.2L1616.4,1080.1L1616,1085.2z" fill="#e6b434"/>
<path d="M1558.8,1094.2L1616.1,1084.7L1615.6,1090.3z" fill="#e4b234"/>
<path d="M1558.8,1094.2L1615.6,1089.7L1615,1095.8z" fill="#dfae32"/>
<path d="M1558.8,1094.2L1615.1,1095.1L1614.4,1101.4z" fill="#d7a831"/>
<path d="M1558.8,1094.2L1614.5,1100.7L1613.7,1106.9z" fill="#cda12e"/>
<path d="M1558.8,1094.2L1613.8,1106.3L1613,1112.3z" fill="#c3992c"/>
<path d="M1558.8,1094.2L1613.1,1111.7L1612.3,1117.3z" fill="#ba922a"/>
<path d="M1558.8,1094.2L1612.3,1116.7L1611.5,1121.7z" fill="#b38c28"/>
<path d="M1558.8,1094.2L1611.6,1121.2L1610.8,1125.5z" fill="#ae8827"/>
<path d="M1558.8,1094.2L1610.9,1125.1L1610.2,1128.5z" fill="#ad8727"/>
<path d="M1558.8,1094.2L1610.2,1128.2L1609.6,1130.6z" fill="#af8927"/>
<path d="M1558.8,1094.2L1609.7,1130.4L1609.1,1131.7z" fill="#b48d29"/>
<path d="M1558.8,1094.2L1609.2,1131.6L1608.8,1131.9z" fill="#bc932a"/>
<path d="M1612.5,1100L1620,1101.5" stroke="#f4ee10" stroke-width="1.8" fill="none"/>
<path d="M1702,1020.5L1741.9,1071.9L1744.1,1076.2z" fill="#ebd920"/>
<path d="M1702,1020.5L1744,1075.8L1744.3,1080.3z" fill="#e6d41f"/>
<path d="M1702,1020.5L1744.4,1079.9L1742.8,1084.4z" fill="#dbca1e"/>
<path d="M1702,1020.5L1743,1084L1739.6,1088.3z" fill="#cdbd1c"/>
<path d="M1702,1020.5L1740,1088L1735,1091.9z" fill="#bdae1a"/>
<path d="M1702,1020.5L1735.5,1091.6L1729,1095z" fill="#ada01a"/>
<path d="M1702,1020.5L1729.6,1094.8L1722,1097.5z" fill="#a39827"/>
<path d="M1702,1020.5L1722.7,1097.3L1714.3,1099.1z" fill="#a39c4a"/>
<path d="M1702,1020.5L1715,1099L1706.2,1100z" fill="#a49e58"/>
<path d="M1702,1020.5L1707,1100L1698.1,1100z" fill="#9a9238"/>
<path d="M1702,1020.5L1698.8,1100L1690.3,1099.1z" fill="#968c1d"/>
<path d="M1702,1020.5L1691,1099.2L1683.2,1097.4z" fill="#9f9316"/>
<path d="M1702,1020.5L1683.8,1097.6L1677.1,1095z" fill="#ad9f17"/>
<path d="M1702,1020.5L1677.6,1095.2L1672.3,1091.9z" fill="#bdae1a"/>
<path d="M1702,1020.5L1672.7,1092.2L1669,1088.3z" fill="#cdbd1c"/>
<path d="M1702,1020.5L1669.2,1088.6L1667.3,1084.3z" fill="#dbca1e"/>
<path d="M1702,1020.5L1667.4,1084.7L1667.3,1080.2z" fill="#e6d41f"/>
<path d="M1702,1020.5L1667.2,1080.6L1668.8,1076.5z" fill="#ebd920"/>
<path d="M1684,1115L1792.9,1078.5L1796.3,1078.2z" fill="#dace1d"/>
<path d="M1684,1115L1796,1078.1L1799.3,1079.3z" fill="#d3c71c"/>
<path d="M1684,1115L1799,1079.1L1802.2,1081.7z" fill="#cdc11b"/>
<path d="M1684,1115L1801.9,1081.4L1804.8,1085.4z" fill="#c9be1a"/>
<path d="M1684,1115L1804.5,1084.9L1807,1090.1z" fill="#c8bd1a"/>
<path d="M1684,1115L1806.8,1089.5L1808.9,1095.7z" fill="#c9be1a"/>
<path d="M1684,1115L1808.7,1095L1810.2,1102z" fill="#cdc11b"/>
<path d="M1684,1115L1810.1,1101.3L1811,1108.7z" fill="#d3c71c"/>
<path d="M1684,1115L1811,1108L1811.2,1115.7z" fill="#dace1d"/>
<path d="M1684,1115L1811.2,1115L1810.9,1122.7z" fill="#e2d51e"/>
<path d="M1684,1115L1811,1122L1810,1129.4z" fill="#e9dc1f"/>
<path d="M1684,1115L1810.1,1128.7L1808.5,1135.6z" fill="#efe11f"/>
<path d="M1684,1115L1808.7,1135L1806.6,1141z" fill="#f3e520"/>
<path d="M1684,1115L1806.8,1140.5L1804.3,1145.5z" fill="#f4e620"/>
<path d="M1684,1115L1804.5,1145.1L1801.6,1148.9z" fill="#f3e520"/>
<path d="M1684,1115L1801.9,1148.6L1798.7,1151z" fill="#efe11f"/>
<path d="M1684,1115L1799,1150.9L1795.7,1151.9z" fill="#e9dc1f"/>
<path d="M1684,1115L1796,1151.9L1792.9,1151.5z" fill="#e2d51e"/>
<ellipse cx="1795.2" cy="1115" rx="16" ry="36.9" transform="rotate(180 1795.2 1115)" fill="#b5aa18"/>
<path d="M1795.2,1115L1829,1115" stroke="#f4ee10" stroke-width="1.8" fill="none"/>
</g>
</svg>
</body></html>
